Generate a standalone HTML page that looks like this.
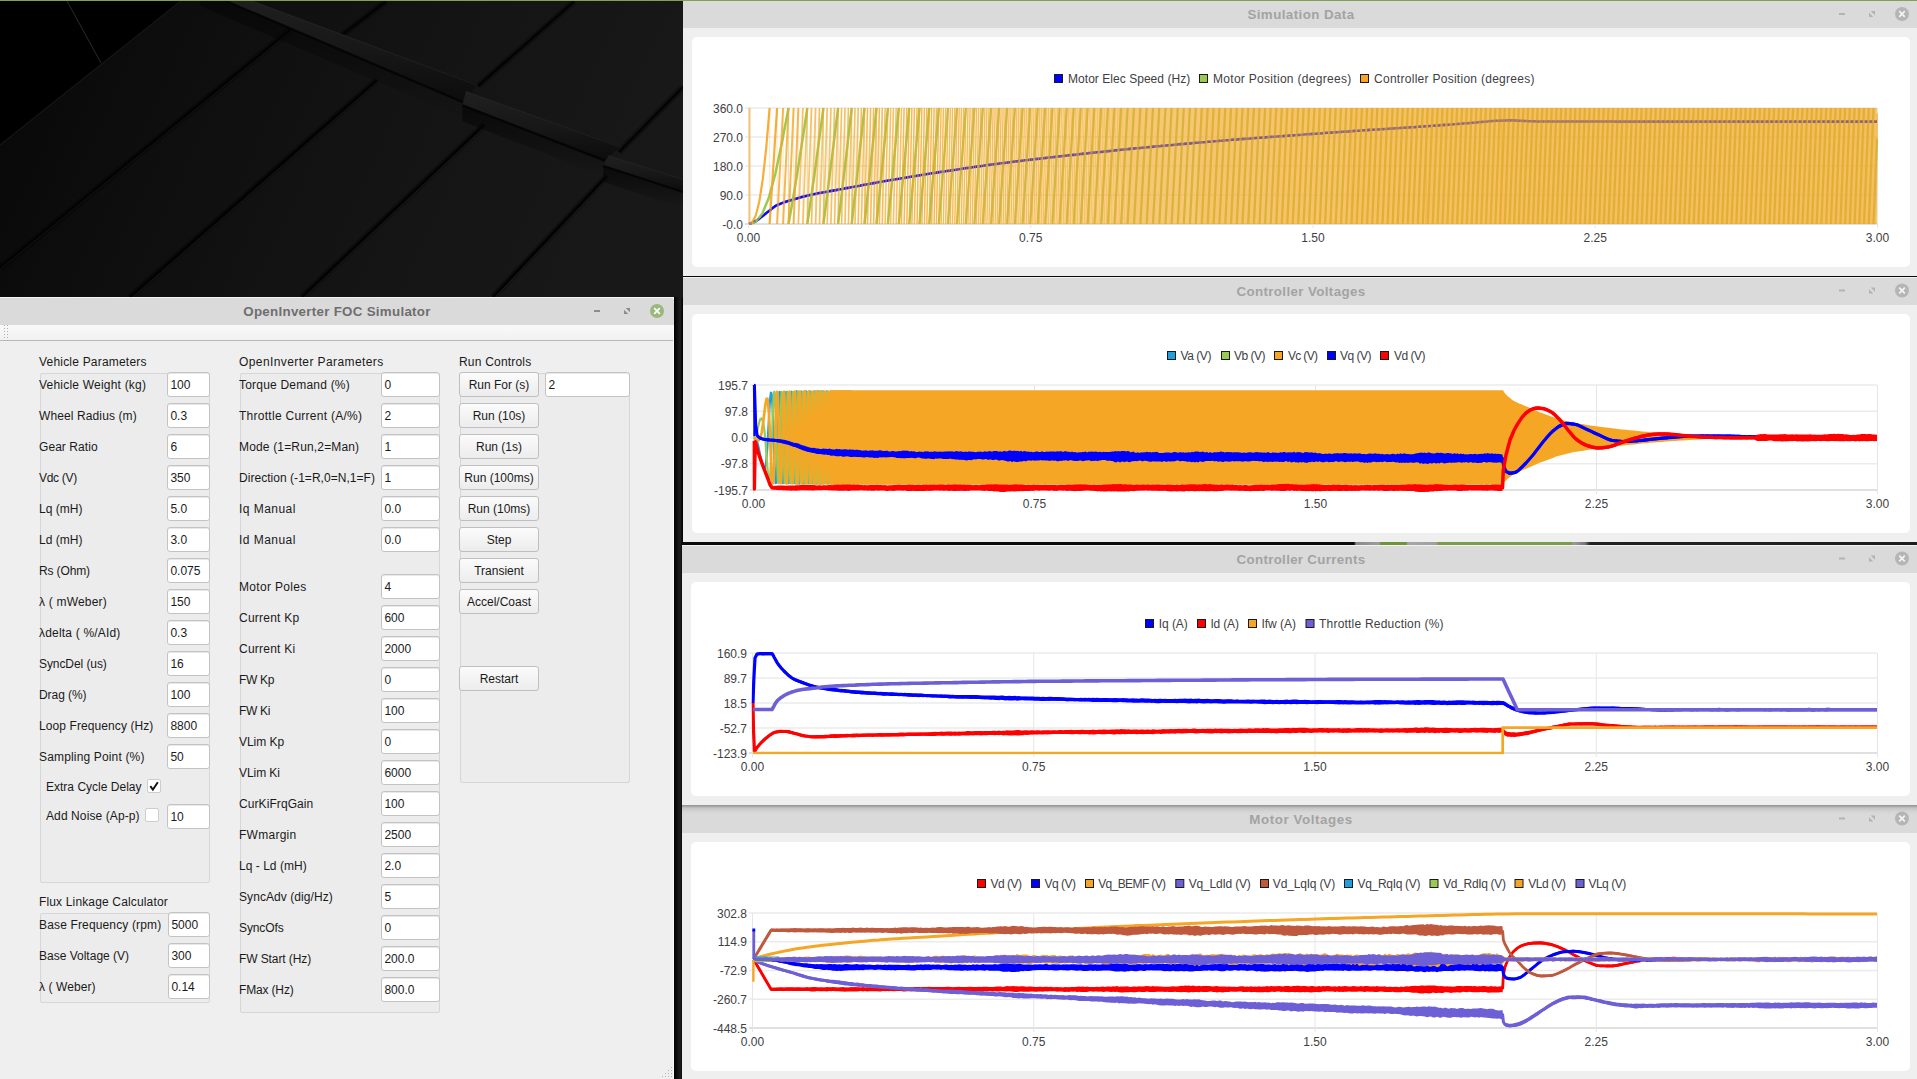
<!DOCTYPE html>
<html lang="en"><head><meta charset="utf-8"><title>OpenInverter FOC Simulator</title>
<style>
html,body{margin:0;padding:0}
body{width:1917px;height:1079px;position:relative;overflow:hidden;background:#161616;font-family:"Liberation Sans", sans-serif;font-size:12px;color:#1c1c1c}
.abs{position:absolute}
.tb{position:absolute;background:#dadada}
.tt{position:absolute;left:0;right:0;text-align:center;font-weight:bold;font-size:13.33px;white-space:pre}
.win{position:absolute;background:#efefef}
.card{position:absolute;background:#fff;border-radius:5px}
.lbl{position:absolute;white-space:pre;line-height:14px;height:14px;letter-spacing:.15px;color:#1a1a1a}
.inp{position:absolute;box-sizing:border-box;height:25px;background:#fff;border:1px solid #c3c3c3;border-radius:3px;line-height:24px;padding-left:2.4px;white-space:pre;color:#1a1a1a;box-shadow:inset 0 1px 0 #e8e8e8}
.btn{position:absolute;box-sizing:border-box;height:25px;width:80px;border:1px solid #bfbfbf;border-radius:3px;background:linear-gradient(#fbfbfb,#ececec);text-align:center;line-height:24px;white-space:pre;letter-spacing:0;color:#1a1a1a}
.grp{position:absolute;box-sizing:border-box;border:1px solid #d6d6d6;border-radius:2px;background:#ececec}
.cb{position:absolute;box-sizing:border-box;width:14px;height:14px;background:#fff;border:1px solid #cdcdcd;border-radius:2px}
svg{position:absolute;left:0;top:0;overflow:visible}
svg text{font-family:"Liberation Sans", sans-serif;font-size:12px;fill:#404044}
</style></head>
<body>
<svg width="683" height="298" viewBox="0 0 683 298" style="left:0;top:0"><defs><linearGradient id="wg" x1="0" y1="0" x2="1" y2="0.2"><stop offset="0" stop-color="#070707"/><stop offset=".3" stop-color="#0e0e0e"/><stop offset=".65" stop-color="#141414"/><stop offset="1" stop-color="#181818"/></linearGradient><linearGradient id="rg" x1="0" y1="0" x2="0" y2="1"><stop offset="0" stop-color="#202020"/><stop offset=".5" stop-color="#181818"/><stop offset="1" stop-color="#0c0c0c"/></linearGradient><linearGradient id="sh" x1="0" y1="0" x2="0" y2="1"><stop offset="0" stop-color="#050505" stop-opacity=".9"/><stop offset="1" stop-color="#050505" stop-opacity="0"/></linearGradient></defs><rect width="683" height="298" fill="url(#wg)"/><polygon points="0,0 182,0 0,145" fill="#000"/><line x1="0" y1="268" x2="300" y2="22" stroke="#000" stroke-width="6.8" opacity=".3"/><line x1="0" y1="268" x2="300" y2="22" stroke="#030303" stroke-width="2.8" opacity="1"/><line x1="-1" y1="270.2" x2="300" y2="24.2" stroke="#1c1c1c" stroke-width="1" opacity="0.7"/><line x1="130" y1="297" x2="377" y2="80" stroke="#000" stroke-width="6.8" opacity=".3"/><line x1="130" y1="297" x2="377" y2="80" stroke="#030303" stroke-width="2.8" opacity="1"/><line x1="131.2" y1="298.6" x2="378.2" y2="81.6" stroke="#1f1f1f" stroke-width="1" opacity="0.7"/><line x1="302" y1="297" x2="484" y2="125" stroke="#000" stroke-width="6.8" opacity=".3"/><line x1="302" y1="297" x2="484" y2="125" stroke="#030303" stroke-width="2.8" opacity="1"/><line x1="303.5" y1="298.2" x2="485.5" y2="126.2" stroke="#222" stroke-width="1" opacity="0.7"/><line x1="493" y1="297" x2="607" y2="176" stroke="#000" stroke-width="6.8" opacity=".3"/><line x1="493" y1="297" x2="607" y2="176" stroke="#030303" stroke-width="2.8" opacity="1"/><line x1="494.5" y1="298.2" x2="608.5" y2="177.2" stroke="#242424" stroke-width="1" opacity="0.7"/><line x1="341" y1="35.7" x2="386" y2="1.5" stroke="#000" stroke-width="6.2" opacity=".3"/><line x1="341" y1="35.7" x2="386" y2="1.5" stroke="#030303" stroke-width="2.2" opacity="1"/><line x1="478" y1="86" x2="574" y2="1.5" stroke="#000" stroke-width="6.2" opacity=".3"/><line x1="478" y1="86" x2="574" y2="1.5" stroke="#030303" stroke-width="2.2" opacity="1"/><line x1="619" y1="152" x2="683" y2="87" stroke="#000" stroke-width="6.2" opacity=".3"/><line x1="619" y1="152" x2="683" y2="87" stroke="#030303" stroke-width="2.2" opacity="1"/><polygon points="200,-10 466,103.5 466,119.5 200,6" fill="url(#sh)" opacity=".8"/><polygon points="224,-10 476.6,84 466,103.5 200,-10" fill="url(#rg)"/><line x1="200" y1="-10" x2="466" y2="103.5" stroke="#050505" stroke-width="2.2"/><line x1="224" y1="-9" x2="476.6" y2="85" stroke="#262626" stroke-width="1.2" opacity=".6"/><polygon points="462.3,105.3 605,160.6 605,176.6 462.3,121.3" fill="url(#sh)" opacity=".8"/><polygon points="466,91 621,146.3 605,160.6 462.3,105.3" fill="url(#rg)"/><line x1="462.3" y1="105.3" x2="605" y2="160.6" stroke="#050505" stroke-width="2.2"/><line x1="466" y1="92" x2="621" y2="147.3" stroke="#262626" stroke-width="1.2" opacity=".6"/><polygon points="603.3,166 683,192 683,208 603.3,182" fill="url(#sh)" opacity=".8"/><polygon points="608.6,155.2 683,178.4 683,192 603.3,166" fill="url(#rg)"/><line x1="603.3" y1="166" x2="683" y2="192" stroke="#050505" stroke-width="2.2"/><line x1="608.6" y1="156.2" x2="683" y2="179.4" stroke="#262626" stroke-width="1.2" opacity=".6"/><line x1="67" y1="1" x2="101" y2="63" stroke="#2a2a2a" stroke-width="1"/><line x1="182" y1="0" x2="0" y2="145" stroke="#1a1a1a" stroke-width="1.2" opacity=".8"/></svg>
<div class="abs" style="left:674px;top:297px;width:9px;height:782px;background:linear-gradient(90deg,#000,#1e1e1e 70%,#000)"></div>
<div class="abs" style="left:0;top:0;width:1917px;height:1px;background:#7fa350;z-index:5"></div>
<div class="win" style="left:0;top:297px;width:674px;height:782px;border-right:1px solid #fbfbfb;box-sizing:border-box">
<div class="tb" style="left:0;top:0;width:674px;height:28px;border-top:1px solid #f4f4f4;box-sizing:border-box;border-top-right-radius:3px"><div class="tt" id="t0" style="top:6.2px;line-height:16px;color:#6e6e6e;left:0;width:674px;letter-spacing:.29px">OpenInverter FOC Simulator</div></div>
<svg width="674" height="28" style="left:0;top:0"><rect x="594" y="13" width="6" height="2" fill="#8c8c8c"/><path d="M625.7 11H630V15.3zM624 12.7V17H628.3z" fill="#8c8c8c"/><circle cx="657" cy="14" r="7" fill="#9ab87c"/><path d="M654.2 11.2l5.6 5.6M659.8 11.2l-5.6 5.6" stroke="#fff" stroke-width="1.7" fill="none"/></svg>
<div class="abs" style="left:0;top:28px;width:673px;height:15px;background:linear-gradient(#f9f9f9,#f1f1f1);border-bottom:1px solid #b9b9b9"></div>
<svg width="12" height="18" style="left:0;top:28px"><rect x="4" y="0" width="1" height="1" fill="#b0b0b0"/><rect x="7" y="0" width="1" height="1" fill="#b0b0b0"/><rect x="4" y="3" width="1" height="1" fill="#b0b0b0"/><rect x="7" y="3" width="1" height="1" fill="#b0b0b0"/><rect x="4" y="6" width="1" height="1" fill="#b0b0b0"/><rect x="7" y="6" width="1" height="1" fill="#b0b0b0"/><rect x="4" y="9" width="1" height="1" fill="#b0b0b0"/><rect x="7" y="9" width="1" height="1" fill="#b0b0b0"/><rect x="4" y="12" width="1" height="1" fill="#b0b0b0"/><rect x="7" y="12" width="1" height="1" fill="#b0b0b0"/><rect x="4" y="15" width="1" height="1" fill="#b0b0b0"/><rect x="7" y="15" width="1" height="1" fill="#b0b0b0"/></svg>
<div class="grp" style="left:40px;top:76px;width:170px;height:510px"></div><div class="grp" style="left:240px;top:76px;width:200px;height:640px"></div><div class="grp" style="left:460px;top:76px;width:170px;height:410px"></div><div class="grp" style="left:40px;top:616px;width:170px;height:90px"></div>
<div class="lbl" style="left:39px;top:57.5px;letter-spacing:0.2px;">Vehicle Parameters</div><div class="lbl" style="left:239px;top:57.5px;letter-spacing:0.4px;">OpenInverter Parameters</div><div class="lbl" style="left:459px;top:57.5px;letter-spacing:0.2px;">Run Controls</div><div class="lbl" style="left:39px;top:597.5px;letter-spacing:0.15px;">Flux Linkage Calculator</div>
<div class="lbl" style="left:39px;top:80.5px;letter-spacing:0.21px;">Vehicle Weight (kg)</div><div class="inp" style="left:167px;top:75px;width:43px">100</div><div class="lbl" style="left:39px;top:111.5px;letter-spacing:0.11px;">Wheel Radius (m)</div><div class="inp" style="left:167px;top:106px;width:43px">0.3</div><div class="lbl" style="left:39px;top:142.5px;letter-spacing:0.06px;">Gear Ratio</div><div class="inp" style="left:167px;top:137px;width:43px">6</div><div class="lbl" style="left:39px;top:173.5px;letter-spacing:-0.3px;">Vdc (V)</div><div class="inp" style="left:167px;top:168px;width:43px">350</div><div class="lbl" style="left:39px;top:204.5px;letter-spacing:0.04px;">Lq (mH)</div><div class="inp" style="left:167px;top:199px;width:43px">5.0</div><div class="lbl" style="left:39px;top:235.5px;letter-spacing:0.04px;">Ld (mH)</div><div class="inp" style="left:167px;top:230px;width:43px">3.0</div><div class="lbl" style="left:39px;top:266.5px;letter-spacing:-0.13px;">Rs (Ohm)</div><div class="inp" style="left:167px;top:261px;width:43px">0.075</div><div class="lbl" style="left:39px;top:297.5px;letter-spacing:0.2px;">λ ( mWeber)</div><div class="inp" style="left:167px;top:292px;width:43px">150</div><div class="lbl" style="left:39px;top:328.5px;letter-spacing:0.19px;">λdelta ( %/AId)</div><div class="inp" style="left:167px;top:323px;width:43px">0.3</div><div class="lbl" style="left:39px;top:359.5px;letter-spacing:-0.08px;">SyncDel (us)</div><div class="inp" style="left:167px;top:354px;width:43px">16</div><div class="lbl" style="left:39px;top:390.5px;letter-spacing:-0.06px;">Drag (%)</div><div class="inp" style="left:167px;top:385px;width:43px">100</div><div class="lbl" style="left:39px;top:421.5px;letter-spacing:0.09px;">Loop Frequency (Hz)</div><div class="inp" style="left:167px;top:416px;width:43px">8800</div><div class="lbl" style="left:39px;top:452.5px;letter-spacing:0.16px;">Sampling Point (%)</div><div class="inp" style="left:167px;top:447px;width:43px">50</div>
<div class="lbl" style="left:46px;top:482.5px;letter-spacing:0.01px;">Extra Cycle Delay</div><div class="cb" style="left:147px;top:482px"><svg width="12" height="12" viewBox="0 0 12 12" style="left:0;top:0"><path d="M2.3 6.1L4.9 9.6 9.8 2.3" stroke="#111" stroke-width="1.9" fill="none"/></svg></div><div class="lbl" style="left:46px;top:511.5px;letter-spacing:0.1px;">Add Noise (Ap-p)</div><div class="cb" style="left:145px;top:511px"></div><div class="inp" style="left:167px;top:507px;width:43px">10</div>
<div class="lbl" style="left:39px;top:620.5px;letter-spacing:0.15px;">Base Frequency (rpm)</div><div class="inp" style="left:168px;top:615px;width:42px">5000</div><div class="lbl" style="left:39px;top:651.5px;letter-spacing:0.0px;">Base Voltage (V)</div><div class="inp" style="left:168px;top:646px;width:42px">300</div><div class="lbl" style="left:39px;top:682.5px;letter-spacing:0.08px;">λ ( Weber)</div><div class="inp" style="left:168px;top:677px;width:42px">0.14</div>
<div class="lbl" style="left:239px;top:80.5px;letter-spacing:0.21px;">Torque Demand (%)</div><div class="inp" style="left:381px;top:75px;width:59px">0</div><div class="lbl" style="left:239px;top:111.5px;letter-spacing:0.27px;">Throttle Current (A/%)</div><div class="inp" style="left:381px;top:106px;width:59px">2</div><div class="lbl" style="left:239px;top:142.5px;letter-spacing:0.16px;">Mode (1=Run,2=Man)</div><div class="inp" style="left:381px;top:137px;width:59px">1</div><div class="lbl" style="left:239px;top:173.5px;letter-spacing:0.04px;">Direction (-1=R,0=N,1=F)</div><div class="inp" style="left:381px;top:168px;width:59px">1</div><div class="lbl" style="left:239px;top:204.5px;letter-spacing:0.46px;">Iq Manual</div><div class="inp" style="left:381px;top:199px;width:59px">0.0</div><div class="lbl" style="left:239px;top:235.5px;letter-spacing:0.46px;">Id Manual</div><div class="inp" style="left:381px;top:230px;width:59px">0.0</div><div class="lbl" style="left:239px;top:282.5px;letter-spacing:0.32px;">Motor Poles</div><div class="inp" style="left:381px;top:277px;width:59px">4</div><div class="lbl" style="left:239px;top:313.5px;letter-spacing:0.24px;">Current Kp</div><div class="inp" style="left:381px;top:308px;width:59px">600</div><div class="lbl" style="left:239px;top:344.5px;letter-spacing:0.24px;">Current Ki</div><div class="inp" style="left:381px;top:339px;width:59px">2000</div><div class="lbl" style="left:239px;top:375.5px;letter-spacing:-0.3px;">FW Kp</div><div class="inp" style="left:381px;top:370px;width:59px">0</div><div class="lbl" style="left:239px;top:406.5px;letter-spacing:-0.3px;">FW Ki</div><div class="inp" style="left:381px;top:401px;width:59px">100</div><div class="lbl" style="left:239px;top:437.5px;letter-spacing:-0.03px;">VLim Kp</div><div class="inp" style="left:381px;top:432px;width:59px">0</div><div class="lbl" style="left:239px;top:468.5px;letter-spacing:-0.06px;">VLim Ki</div><div class="inp" style="left:381px;top:463px;width:59px">6000</div><div class="lbl" style="left:239px;top:499.5px;letter-spacing:0.08px;">CurKiFrqGain</div><div class="inp" style="left:381px;top:494px;width:59px">100</div><div class="lbl" style="left:239px;top:530.5px;letter-spacing:0.27px;">FWmargin</div><div class="inp" style="left:381px;top:525px;width:59px">2500</div><div class="lbl" style="left:239px;top:561.5px;letter-spacing:0.03px;">Lq - Ld (mH)</div><div class="inp" style="left:381px;top:556px;width:59px">2.0</div><div class="lbl" style="left:239px;top:592.5px;letter-spacing:0.07px;">SyncAdv (dig/Hz)</div><div class="inp" style="left:381px;top:587px;width:59px">5</div><div class="lbl" style="left:239px;top:623.5px;letter-spacing:-0.11px;">SyncOfs</div><div class="inp" style="left:381px;top:618px;width:59px">0</div><div class="lbl" style="left:239px;top:654.5px;letter-spacing:-0.1px;">FW Start (Hz)</div><div class="inp" style="left:381px;top:649px;width:59px">200.0</div><div class="lbl" style="left:239px;top:685.5px;letter-spacing:-0.16px;">FMax (Hz)</div><div class="inp" style="left:381px;top:680px;width:59px">800.0</div>
<div class="btn" style="left:459px;top:75px">Run For (s)</div><div class="btn" style="left:459px;top:106px">Run (10s)</div><div class="btn" style="left:459px;top:137px">Run (1s)</div><div class="btn" style="left:459px;top:168px">Run (100ms)</div><div class="btn" style="left:459px;top:199px">Run (10ms)</div><div class="btn" style="left:459px;top:230px">Step</div><div class="btn" style="left:459px;top:261px">Transient</div><div class="btn" style="left:459px;top:292px">Accel/Coast</div><div class="btn" style="left:459px;top:369px">Restart</div><div class="inp" style="left:545px;top:75px;width:85px">2</div><svg width="14" height="14" style="left:659px;top:767px"><rect x="12" y="12" width="1" height="1" fill="#b4b4b4"/><rect x="12" y="9" width="1" height="1" fill="#b4b4b4"/><rect x="12" y="6" width="1" height="1" fill="#b4b4b4"/><rect x="12" y="3" width="1" height="1" fill="#b4b4b4"/><rect x="9" y="12" width="1" height="1" fill="#b4b4b4"/><rect x="9" y="9" width="1" height="1" fill="#b4b4b4"/><rect x="9" y="6" width="1" height="1" fill="#b4b4b4"/><rect x="6" y="12" width="1" height="1" fill="#b4b4b4"/><rect x="6" y="9" width="1" height="1" fill="#b4b4b4"/><rect x="3" y="12" width="1" height="1" fill="#b4b4b4"/></svg>
</div>
<div class="win" style="left:683px;top:1px;width:1234px;height:275px"><div class="tb" style="left:0;top:0;width:1234px;height:27px;box-sizing:border-box;"><div class="tt" style="top:6.3px;line-height:16px;color:#a3a3a3;left:318px;width:600px;right:auto;letter-spacing:0.43px">Simulation Data</div></div><svg width="1234" height="27" style="left:0;top:0"><rect x="1156" y="12" width="6" height="2" fill="#b3b3b3"/><path d="M1187.7 10H1192V14.3zM1186 11.7V16H1190.3z" fill="#b3b3b3"/><circle cx="1219" cy="13" r="7" fill="#b5b5b5"/><path d="M1216.2 10.2l5.6 5.6M1221.8 10.2l-5.6 5.6" stroke="#f4f4f4" stroke-width="1.7" fill="none"/></svg><div class="card" style="left:9px;top:36px;width:1218px;height:230px"></div></div>
<div class="abs" style="left:683px;top:276px;width:1234px;height:1px;background:#0a0a0a"></div><div class="win" style="left:683px;top:277px;width:1234px;height:265px"><div class="tb" style="left:0;top:0;width:1234px;height:28px;box-sizing:border-box;border-top:1px solid #f2f2f2;"><div class="tt" style="top:6px;line-height:16px;color:#a3a3a3;left:318px;width:600px;right:auto;letter-spacing:0.38px">Controller Voltages</div></div><svg width="1234" height="28" style="left:0;top:0"><rect x="1156" y="12.5" width="6" height="2" fill="#b3b3b3"/><path d="M1187.7 10.5H1192V14.8zM1186 12.2V16.5H1190.3z" fill="#b3b3b3"/><circle cx="1219" cy="13.5" r="7" fill="#b5b5b5"/><path d="M1216.2 10.7l5.6 5.6M1221.8 10.7l-5.6 5.6" stroke="#f4f4f4" stroke-width="1.7" fill="none"/></svg><div class="card" style="left:9px;top:37px;width:1218px;height:219px"></div></div>
<div class="abs" style="left:682px;top:542px;width:1235px;height:3px;background:linear-gradient(90deg,#0b0b0b 672px,#8a8a8a 674px,#9c9c9c 697px,#6f9438 699px,#6f9438 724px,#a6a6a6 726px,#a0a0a0 754px,#7b9d4b 756px,#7b9d4b 889px,#9a9a9a 892px,#777 903px,#222 908px,#1c1c1c 100%)"></div><div class="win" style="left:682px;top:545px;width:1235px;height:260px"><div class="tb" style="left:0;top:0;width:1235px;height:28px;box-sizing:border-box;border-top:1px solid #f2f2f2;"><div class="tt" style="top:6px;line-height:16px;color:#a3a3a3;left:319px;width:600px;right:auto;letter-spacing:0.31px">Controller Currents</div></div><svg width="1235" height="28" style="left:0;top:0"><rect x="1157" y="12.5" width="6" height="2" fill="#b3b3b3"/><path d="M1188.7 10.5H1193V14.8zM1187 12.2V16.5H1191.3z" fill="#b3b3b3"/><circle cx="1220" cy="13.5" r="7" fill="#b5b5b5"/><path d="M1217.2 10.7l5.6 5.6M1222.8 10.7l-5.6 5.6" stroke="#f4f4f4" stroke-width="1.7" fill="none"/></svg><div class="card" style="left:9px;top:37px;width:1219px;height:214px"></div></div>
<div class="win" style="left:682px;top:805px;width:1235px;height:274px"><div class="tb" style="left:0;top:0;width:1235px;height:28px;box-sizing:border-box;background:linear-gradient(#8f8f8f,#c4c4c4 3px,#d6d6d6 7px,#dadada 10px);"><div class="tt" style="top:7px;line-height:16px;color:#a3a3a3;left:319px;width:600px;right:auto;letter-spacing:0.57px">Motor Voltages</div></div><svg width="1235" height="28" style="left:0;top:0"><rect x="1157" y="12.5" width="6" height="2" fill="#b3b3b3"/><path d="M1188.7 10.5H1193V14.8zM1187 12.2V16.5H1191.3z" fill="#b3b3b3"/><circle cx="1220" cy="13.5" r="7" fill="#b5b5b5"/><path d="M1217.2 10.7l5.6 5.6M1222.8 10.7l-5.6 5.6" stroke="#f4f4f4" stroke-width="1.7" fill="none"/></svg><div class="card" style="left:9px;top:37px;width:1219px;height:229px"></div></div>
<svg width="1917" height="1079" viewBox="0 0 1917 1079" style="left:0;top:0">
<line x1="745" y1="108" x2="1877" y2="108" stroke="#ebebeb" stroke-width="1.6"/><text x="743" y="112.5" text-anchor="end">360.0</text><line x1="745" y1="137" x2="1877" y2="137" stroke="#ebebeb" stroke-width="1.6"/><text x="743" y="141.5" text-anchor="end">270.0</text><line x1="745" y1="166" x2="1877" y2="166" stroke="#ebebeb" stroke-width="1.6"/><text x="743" y="170.5" text-anchor="end">180.0</text><line x1="745" y1="195" x2="1877" y2="195" stroke="#ebebeb" stroke-width="1.6"/><text x="743" y="199.5" text-anchor="end">90.0</text><line x1="745" y1="224" x2="1877" y2="224" stroke="#e0e0e0" stroke-width="2"/><text x="743" y="228.5" text-anchor="end">-0.0</text><line x1="748.5" y1="108" x2="748.5" y2="228" stroke="#e6e6e6" stroke-width="1"/><text x="748.5" y="242" text-anchor="middle">0.00</text><line x1="1030.75" y1="224" x2="1030.75" y2="228" stroke="#e6e6e6" stroke-width="1"/><text x="1030.75" y="242" text-anchor="middle">0.75</text><line x1="1313" y1="224" x2="1313" y2="228" stroke="#e6e6e6" stroke-width="1"/><text x="1313" y="242" text-anchor="middle">1.50</text><line x1="1595.25" y1="224" x2="1595.25" y2="228" stroke="#e6e6e6" stroke-width="1"/><text x="1595.25" y="242" text-anchor="middle">2.25</text><line x1="1877.5" y1="108" x2="1877.5" y2="228" stroke="#e6e6e6" stroke-width="1"/><text x="1877.5" y="242" text-anchor="middle">3.00</text><rect x="1054.5" y="74.5" width="8" height="8" fill="#0000ff" stroke="#1a1a1a" stroke-width="1"/><text x="1068" y="83" textLength="122.2" lengthAdjust="spacing">Motor Elec Speed (Hz)</text><rect x="1199.5" y="74.5" width="8" height="8" fill="#99ca53" stroke="#1a1a1a" stroke-width="1"/><text x="1213" y="83" textLength="138.2" lengthAdjust="spacing">Motor Position (degrees)</text><rect x="1360.5" y="74.5" width="8" height="8" fill="#f6a625" stroke="#1a1a1a" stroke-width="1"/><text x="1374" y="83" textLength="160.5" lengthAdjust="spacing">Controller Position (degrees)</text><clipPath id="c1"><rect x="748" y="106.8" width="1130.0" height="118.4"/></clipPath><g clip-path="url(#c1)"><path d="M749 224l3-1.1l3-1.4l3-1.9l3-2.3l1-.8l2-1.5l3-2.4l2-1.6l1-.8l3-2.4l3-2.1l1-.5l2-.9l3-1.2l3-1l3-1l2-.6l1-.3l3-.9l3-.9l3-.9l3-.8l3-.8l3-.7l1-.2l2-.4l3-.7l3-.6l3-.6l3-.5l3-.5l3-.6l3-.5l3-.5l3-.6l3-.5l3-.6l3-.5l3-.6l3-.5l3-.6l3-.5l3-.6l3-.6l3-.5l3-.6l3-.5l3-.6l3-.5l3-.5l3-.6l3-.5l3-.5l3-.5l3-.5l1-.2l2-.3l3-.5l3-.5l3-.5l3-.5l3-.5l3-.5l3-.4l3-.5l3-.5l3-.5l3-.4l3-.5l3-.5l3-.4l3-.5l3-.4l3-.5l3-.4l3-.5l3-.4l3-.5l3-.4l3-.4l3-.5l3-.4l3-.4l3-.4l3-.5l3-.4l3-.4l3-.4l3-.4l3-.4l2.6-.3l.4-.1l3-.3l3-.4l3-.4l3-.4l3-.3l3-.4l3-.4l3-.3l3-.4l3-.3l3-.4l3-.3l3-.4l3-.3l3-.4l3-.3l3-.3l3-.4l3-.3l3-.3l3-.4l3-.3l3-.3l3-.3l3-.4l3-.3l3-.3l3-.3l3-.4l3-.3l3-.3l3-.3l3-.3l3-.3l3-.3l3-.3l3-.4l3-.3l3-.3l3-.3l3-.3l3-.3l3-.3l3-.3l3-.2l3-.3l3-.3l3-.3l3-.3l3-.3l3-.3l3-.2l3-.3l2-.2l1-.1l3-.3l3-.2l3-.3l3-.3l3-.3l3-.2l3-.3l3-.2l3-.3l3-.3l3-.2l3-.3l3-.2l3-.3l3-.2l3-.3l3-.2l3-.3l3-.2l3-.3l3-.2l1-.1l2-.2l3-.2l3-.2l3-.3l3-.2l3-.2l3-.2l3-.3l3-.2l3-.2l3-.2l3-.2l3-.3l3-.2l3-.2l3-.2l3-.2l3-.2l3-.3l3-.2l3-.2l3-.2l3-.2l3-.2l3-.3l3-.2l3-.2l3-.2l3-.2l3-.2l3-.2l3-.3l3-.2l3-.2l3-.2l3-.2l3-.2l3-.2l3-.2l3-.2l3-.3l3-.2l3-.2l2-.1l1-.1l3-.2l3-.2l3-.2l3-.2l3-.2l3-.1l3-.2l3-.2l3-.2l3-.2l3-.2l3-.2l3-.2l3-.2l3-.2l3-.2l3-.2l3-.1l3-.3l3-.2l3-.2l2-.1l1-.1l3-.2l3-.2l3-.2l3-.2l3-.3l3-.2l3-.2l3-.2l3-.3l3-.2l3-.2l3-.3l3-.2l3-.2l1-.1l2-.2l3-.2l3-.3l3-.3l3-.3l3-.2l3-.3l3-.2l3-.2l3-.1l2-.1l1 0l3-.1l3-.1l3 0l1 0l2 0l3 .2l3 .1l3 .2l2 .1l1 0l3 .2l3 .1l3 .1l3 .1l2 0l1 0l3 0l3 0l3 0l3 0l3 0l3 0l3 0l3 0l3 0l3 0l3 0l3 0l3 0l3 0l3 0l3 0l3 0l3 0l3 0l3 0l3 0l3 0l3 0l3 0l3 .1l3 0l3 0l3 0l3 0l3 0l3 0l3 0l3 0l3 0l3 0l3 0l3 0l3 0l3 0l3 0l3 0l3 0l3 0l3 0l3 0l3 0l3 0l3 0l3 0l3 0l3 0l3 0l3 0l3 0l3 0l3 0l3 0l3 0l3 0l3 0l3 0l3 0l3 0l3 0l3 0l3 0l3 0l3 0l3 0l3 0l3 0l3 0l3 0l3 0l3 0l3 0l3 0l3 0l3 0l3 0l3 0l3 0l3 0l3 0l3 0l3 0l3 0l3 0l3 0l3 0l3 0l3 0l3 0l3 0l3 0l3 0l3 0l3 0l3 0l3 0l3 0l3 0l3 0l3 0l3 0l3 0l3 0l3 0l3 0l3 0l3 0l3 0" fill="none" stroke="#0000ff" stroke-width="2.6"/><path d="M749 224l6.6-2l6.6-8.1l6.6-16.1l6.6-24.3l6.5-30.8l6.6-34.7M788.5 224l3.2-17.6l3.1-18.4l3.1-19l3.1-19.7l3.2-20.4l3.1-20.9M807.3 224l2.7-18.4l2.7-18.8l2.7-19.2l2.6-19.5l2.7-19.9l2.7-20.2M823.4 224l2.4-18.7l2.5-19l2.4-19.2l2.5-19.4l2.4-19.7l2.5-20M838.1 224l2.3-18.8l2.2-19l2.3-19.2l2.3-19.4l2.2-19.7l2.3-19.9M851.7 224l2.1-18.8l2.2-19.1l2.1-19.2l2.1-19.4l2.1-19.7l2.2-19.8M864.5 224l2-18.9l2-19.1l2-19.2l2-19.4l2-19.6l2-19.8M876.5 224l1.9-18.9l1.9-19.1l1.9-19.3l1.9-19.4l1.9-19.6l1.9-19.7M887.9 224l1.8-19l1.9-19.1l1.8-19.3l1.8-19.4l1.8-19.5l1.8-19.7M898.8 224l1.8-19l1.7-19.2l1.8-19.3l1.7-19.4l1.8-19.5l1.7-19.6M909.3 224l1.7-19.1l1.7-19.1l1.7-19.3l1.7-19.4l1.7-19.5l1.7-19.6M919.5 224l1.6-19.1l1.6-19.2l1.7-19.2l1.6-19.4l1.6-19.5l1.7-19.6M929.3 224l1.5-19.1l1.6-19.2l1.6-19.3l1.6-19.4l1.6-19.4l1.6-19.6" fill="none" stroke="#99ca53" stroke-width="2.5" stroke-opacity="1"/><path d="M938.8 224l1.5-19.1l1.6-19.2l1.5-19.3l1.5-19.4l1.6-19.4l1.5-19.6M948 224l1.5-19.1l1.5-19.2l1.5-19.3l1.5-19.4l1.5-19.5l1.5-19.5M957 224l8.8-116M965.8 224l8.6-116M974.4 224l8.4-116M982.8 224l8.3-116M991.1 224l8-116M999.1 224l8-116M1007.1 224l7.8-116M1014.9 224l7.7-116M1022.6 224l7.6-116M1030.2 224l7.5-116M1037.7 224l7.4-116M1045.1 224l7.3-116M1052.4 224l7.2-116M1059.6 224l7.1-116M1066.7 224l7-116M1073.7 224l7-116M1080.7 224l6.9-116M1087.6 224l6.8-116M1094.4 224l6.8-116M1101.2 224l6.7-116M1107.9 224l6.6-116M1114.5 224l6.6-116M1121.1 224l6.5-116M1127.6 224l6.4-116M1134 224l6.4-116M1140.4 224l6.3-116M1146.7 224l6.3-116M1153 224l6.3-116M1159.3 224l6.2-116M1165.5 224l6.1-116M1171.6 224l6.2-116M1177.8 224l6-116M1183.8 224l6.1-116M1189.9 224l5.9-116M1195.8 224l6-116M1201.8 224l5.9-116M1207.7 224l5.9-116M1213.6 224l5.8-116M1219.4 224l5.9-116M1225.3 224l5.7-116M1231 224l5.8-116M1236.8 224l5.7-116M1242.5 224l5.7-116M1248.2 224l5.7-116M1253.9 224l5.6-116M1259.5 224l5.6-116M1265.1 224l5.6-116M1270.7 224l5.5-116M1276.2 224l5.6-116M1281.8 224l5.5-116M1287.3 224l5.4-116M1292.7 224l5.5-116M1298.2 224l5.4-116M1303.6 224l5.4-116M1309 224l5.4-116M1314.4 224l5.4-116M1319.8 224l5.3-116M1325.1 224l5.3-116M1330.4 224l5.3-116M1335.7 224l5.3-116M1341 224l5.3-116M1346.3 224l5.2-116M1351.5 224l5.2-116M1356.7 224l5.2-116M1361.9 224l5.2-116M1367.1 224l5.1-116M1372.2 224l5.1-116M1377.3 224l5.2-116M1382.5 224l5.1-116M1387.6 224l5-116M1392.6 224l5.1-116M1397.7 224l5.1-116M1402.8 224l5-116M1407.8 224l5-116M1412.8 224l5-116M1417.8 224l5-116M1422.8 224l4.9-116M1427.7 224l5-116M1432.7 224l4.9-116M1437.6 224l4.9-116M1442.5 224l4.9-116M1447.4 224l4.9-116M1452.3 224l4.8-116M1457.1 224l4.9-116M1462 224l4.8-116M1466.8 224l4.8-116M1471.6 224l4.8-116M1476.4 224l4.7-116M1481.1 224l4.8-116M1485.9 224l4.7-116M1490.6 224l4.7-116M1495.3 224l4.7-116M1500 224l4.7-116M1504.7 224l4.7-116M1509.4 224l4.7-116M1514.1 224l4.6-116M1518.7 224l4.7-116M1523.4 224l4.7-116M1528.1 224l4.8-116M1532.9 224l4.7-116M1537.6 224l4.7-116M1542.3 224l4.7-116M1547 224l4.8-116M1551.8 224l4.7-116M1556.5 224l4.7-116M1561.2 224l4.7-116M1565.9 224l4.8-116M1570.7 224l4.7-116M1575.4 224l4.7-116M1580.1 224l4.8-116M1584.9 224l4.7-116M1589.6 224l4.7-116M1594.3 224l4.8-116M1599.1 224l4.7-116M1603.8 224l4.7-116M1608.5 224l4.7-116M1613.2 224l4.8-116M1618 224l4.7-116M1622.7 224l4.7-116M1627.4 224l4.8-116M1632.2 224l4.7-116M1636.9 224l4.7-116M1641.6 224l4.8-116M1646.4 224l4.7-116M1651.1 224l4.7-116M1655.8 224l4.8-116M1660.6 224l4.7-116M1665.3 224l4.7-116M1670 224l4.7-116M1674.7 224l4.8-116M1679.5 224l4.7-116M1684.2 224l4.7-116M1688.9 224l4.8-116M1693.7 224l4.7-116M1698.4 224l4.7-116M1703.1 224l4.8-116M1707.9 224l4.7-116M1712.6 224l4.7-116M1717.3 224l4.8-116M1722.1 224l4.7-116M1726.8 224l4.7-116M1731.5 224l4.8-116M1736.3 224l4.7-116M1741 224l4.7-116M1745.7 224l4.8-116M1750.5 224l4.7-116M1755.2 224l4.7-116M1759.9 224l4.8-116M1764.7 224l4.7-116M1769.4 224l4.7-116M1774.1 224l4.8-116M1778.9 224l4.7-116M1783.6 224l4.7-116M1788.3 224l4.8-116M1793.1 224l4.7-116M1797.8 224l4.7-116M1802.5 224l4.8-116M1807.3 224l4.7-116M1812 224l4.7-116M1816.7 224l4.7-116M1821.4 224l4.8-116M1826.2 224l4.7-116M1830.9 224l4.7-116M1835.6 224l4.8-116M1840.4 224l4.7-116M1845.1 224l4.7-116M1849.8 224l4.8-116M1854.6 224l4.7-116M1859.3 224l4.7-116M1864 224l4.8-116M1868.8 224l4.7-116M1873.5 224l3.5-85.6" fill="none" stroke="#99ca53" stroke-width="2.3" stroke-opacity="0.92"/><path d="M788.5 108V224M807.3 108V224M823.4 108V224M838.1 108V224M851.7 108V224M864.5 108V224M876.5 108V224" fill="none" stroke="#99ca53" stroke-width="1.3" stroke-opacity="0.25"/><path d="M749.6 108V224" stroke="#f6a625" stroke-width="1.8" stroke-opacity=".65" fill="none"/><path d="M749 224l3.4-1.9l3.5-6.9l3.4-13.7l3.5-22.3l3.4-31.1l3.4-40.1M769.6 224l7.5-116" fill="none" stroke="#f6a625" stroke-width="2.2" stroke-opacity="0.92"/><path d="M777.1 224l6-116M783.1 224l5.4-116M788.5 224l5.1-116M793.6 224l4.8-116" fill="none" stroke="#f6a625" stroke-width="2.0" stroke-opacity="0.8"/><path d="M798.4 224l4.5-116M802.9 224l4.4-116M807.3 224l4.2-116M811.5 224l4.1-116M815.6 224l3.9-116M819.5 224l3.9-116M823.4 224l3.8-116" fill="none" stroke="#f6a625" stroke-width="1.8" stroke-opacity="0.64"/><path d="M827.2 224l3.7-116M830.9 224l3.6-116M834.5 224l3.6-116M838.1 224l3.5-116M841.6 224l3.4-116M845 224l3.4-116M848.4 224l3.3-116M851.7 224l3.3-116M855 224l3.2-116M858.2 224l3.2-116M861.4 224l3.1-116" fill="none" stroke="#f6a625" stroke-width="1.6" stroke-opacity="0.665"/><path d="M864.5 224l3-116M867.5 224l3.1-116M870.6 224l3-116M873.6 224l2.9-116M876.5 224l2.9-116M879.4 224l2.9-116M882.3 224l2.8-116M885.1 224l2.8-116M887.9 224l2.8-116M890.7 224l2.7-116M893.4 224l2.8-116M896.2 224l2.6-116M898.8 224l2.7-116" fill="none" stroke="#f6a625" stroke-width="1.6" stroke-opacity="0.702"/><path d="M901.5 224l2.6-116M904.1 224l2.7-116M906.8 224l2.5-116M909.3 224l2.6-116M911.9 224l2.5-116M914.4 224l2.6-116M917 224l2.5-116M919.5 224l2.4-116M921.9 224l2.5-116M924.4 224l2.4-116M926.8 224l2.5-116M929.3 224l2.4-116M931.7 224l2.4-116M934.1 224l2.3-116M936.4 224l2.4-116" fill="none" stroke="#f6a625" stroke-width="1.5" stroke-opacity="0.791"/><path d="M938.8 224l2.3-116M941.1 224l2.3-116M943.4 224l2.3-116M945.7 224l2.3-116M948 224l2.3-116M950.3 224l2.2-116M952.5 224l2.3-116M954.8 224l2.2-116M957 224l2.2-116M959.2 224l2.2-116M961.4 224l2.2-116M963.6 224l2.2-116M965.8 224l2.2-116M968 224l2.1-116M970.1 224l2.2-116M972.3 224l2.1-116M974.4 224l2.1-116" fill="none" stroke="#f6a625" stroke-width="1.5" stroke-opacity="0.757"/><path d="M976.5 224l2.1-116M978.6 224l2.1-116M980.7 224l2.1-116M982.8 224l2.1-116M984.9 224l2-116M986.9 224l2.1-116M989 224l2.1-116M991.1 224l2-116M993.1 224l2-116M995.1 224l2-116M997.1 224l2-116M999.1 224l2-116M1001.1 224l2-116M1003.1 224l2-116M1005.1 224l2-116M1007.1 224l2-116M1009.1 224l1.9-116M1011 224l2-116" fill="none" stroke="#f6a625" stroke-width="1.5" stroke-opacity="0.737"/><path d="M1013 224l1.9-116M1014.9 224l2-116M1016.9 224l1.9-116M1018.8 224l1.9-116M1020.7 224l1.9-116M1022.6 224l1.9-116M1024.5 224l1.9-116M1026.4 224l1.9-116M1028.3 224l1.9-116M1030.2 224l1.9-116M1032.1 224l1.9-116M1034 224l1.8-116M1035.8 224l1.9-116M1037.7 224l1.9-116M1039.6 224l1.8-116M1041.4 224l1.8-116M1043.2 224l1.9-116M1045.1 224l1.8-116M1046.9 224l1.8-116M1048.7 224l1.9-116" fill="none" stroke="#f6a625" stroke-width="1.5" stroke-opacity="0.721"/><path d="M1050.6 224l1.8-116M1052.4 224l1.8-116M1054.2 224l1.8-116M1056 224l1.8-116M1057.8 224l1.8-116M1059.6 224l1.8-116M1061.4 224l1.8-116M1063.2 224l1.7-116M1064.9 224l1.8-116M1066.7 224l1.8-116M1068.5 224l1.7-116M1070.2 224l1.8-116M1072 224l1.7-116M1073.7 224l1.8-116M1075.5 224l1.7-116M1077.2 224l1.8-116M1079 224l1.7-116M1080.7 224l1.7-116M1082.4 224l1.8-116M1084.2 224l1.7-116M1085.9 224l1.7-116" fill="none" stroke="#f6a625" stroke-width="1.5" stroke-opacity="0.702"/><path d="M1087.6 224l1.7-116M1089.3 224l1.7-116M1091 224l1.7-116M1092.7 224l1.7-116M1094.4 224l1.7-116M1096.1 224l1.7-116M1097.8 224l1.7-116M1099.5 224l1.7-116M1101.2 224l1.7-116M1102.9 224l1.6-116M1104.5 224l1.7-116M1106.2 224l1.7-116M1107.9 224l1.6-116M1109.5 224l1.7-116M1111.2 224l1.6-116M1112.8 224l1.7-116M1114.5 224l1.6-116M1116.1 224l1.7-116M1117.8 224l1.6-116M1119.4 224l1.7-116M1121.1 224l1.6-116M1122.7 224l1.6-116M1124.3 224l1.6-116" fill="none" stroke="#f6a625" stroke-width="1.5" stroke-opacity="0.688"/><path d="M1125.9 224l1.7-116M1127.6 224l1.6-116M1129.2 224l1.6-116M1130.8 224l1.6-116M1132.4 224l1.6-116M1134 224l1.6-116M1135.6 224l1.6-116M1137.2 224l1.6-116M1138.8 224l1.6-116M1140.4 224l1.6-116M1142 224l1.6-116M1143.6 224l1.6-116M1145.2 224l1.5-116M1146.7 224l1.6-116M1148.3 224l1.6-116M1149.9 224l1.6-116M1151.5 224l1.5-116M1153 224l1.6-116M1154.6 224l1.6-116M1156.2 224l1.5-116M1157.7 224l1.6-116M1159.3 224l1.5-116M1160.8 224l1.6-116M1162.4 224l1.5-116M1163.9 224l1.6-116M1165.5 224l1.5-116M1167 224l1.6-116M1168.6 224l1.5-116M1170.1 224l1.5-116M1171.6 224l1.6-116M1173.2 224l1.5-116M1174.7 224l1.5-116M1176.2 224l1.6-116M1177.8 224l1.5-116M1179.3 224l1.5-116M1180.8 224l1.5-116M1182.3 224l1.5-116M1183.8 224l1.5-116M1185.3 224l1.5-116M1186.8 224l1.6-116M1188.4 224l1.5-116M1189.9 224l1.5-116M1191.4 224l1.5-116M1192.9 224l1.5-116M1194.4 224l1.4-116M1195.8 224l1.5-116M1197.3 224l1.5-116M1198.8 224l1.5-116" fill="none" stroke="#f6a625" stroke-width="1.7" stroke-opacity="0.643"/><path d="M1200.3 224l1.5-116M1201.8 224l1.5-116M1203.3 224l1.5-116M1204.8 224l1.4-116M1206.2 224l1.5-116M1207.7 224l1.5-116M1209.2 224l1.5-116M1210.7 224l1.4-116M1212.1 224l1.5-116M1213.6 224l1.5-116M1215.1 224l1.4-116M1216.5 224l1.5-116M1218 224l1.4-116M1219.4 224l1.5-116M1220.9 224l1.5-116M1222.4 224l1.4-116M1223.8 224l1.5-116M1225.3 224l1.4-116M1226.7 224l1.4-116M1228.1 224l1.5-116M1229.6 224l1.4-116M1231 224l1.5-116M1232.5 224l1.4-116M1233.9 224l1.4-116M1235.3 224l1.5-116M1236.8 224l1.4-116M1238.2 224l1.4-116M1239.6 224l1.5-116M1241.1 224l1.4-116M1242.5 224l1.4-116M1243.9 224l1.4-116M1245.3 224l1.5-116M1246.8 224l1.4-116M1248.2 224l1.4-116M1249.6 224l1.4-116M1251 224l1.4-116M1252.4 224l1.5-116M1253.9 224l1.4-116M1255.3 224l1.4-116M1256.7 224l1.4-116M1258.1 224l1.4-116M1259.5 224l1.4-116M1260.9 224l1.4-116M1262.3 224l1.4-116M1263.7 224l1.4-116M1265.1 224l1.4-116M1266.5 224l1.4-116M1267.9 224l1.4-116M1269.3 224l1.4-116M1270.7 224l1.4-116M1272.1 224l1.3-116M1273.4 224l1.4-116M1274.8 224l1.4-116" fill="none" stroke="#f6a625" stroke-width="1.7" stroke-opacity="0.669"/><path d="M1276.2 224l1.4-116M1277.6 224l1.4-116M1279 224l1.4-116M1280.4 224l1.4-116M1281.8 224l1.3-116M1283.1 224l1.4-116M1284.5 224l1.4-116M1285.9 224l1.4-116M1287.3 224l1.3-116M1288.6 224l1.4-116M1290 224l1.4-116M1291.4 224l1.3-116M1292.7 224l1.4-116M1294.1 224l1.4-116M1295.5 224l1.3-116M1296.8 224l1.4-116M1298.2 224l1.4-116M1299.6 224l1.3-116M1300.9 224l1.4-116M1302.3 224l1.3-116M1303.6 224l1.4-116M1305 224l1.3-116M1306.3 224l1.4-116M1307.7 224l1.3-116M1309 224l1.4-116M1310.4 224l1.3-116M1311.7 224l1.4-116M1313.1 224l1.3-116M1314.4 224l1.4-116M1315.8 224l1.3-116M1317.1 224l1.3-116M1318.4 224l1.4-116M1319.8 224l1.3-116M1321.1 224l1.3-116M1322.4 224l1.4-116M1323.8 224l1.3-116M1325.1 224l1.3-116M1326.4 224l1.4-116M1327.8 224l1.3-116M1329.1 224l1.3-116M1330.4 224l1.4-116M1331.8 224l1.3-116M1333.1 224l1.3-116M1334.4 224l1.3-116M1335.7 224l1.3-116M1337 224l1.4-116M1338.4 224l1.3-116M1339.7 224l1.3-116M1341 224l1.3-116M1342.3 224l1.3-116M1343.6 224l1.3-116M1344.9 224l1.4-116M1346.3 224l1.3-116M1347.6 224l1.3-116M1348.9 224l1.3-116M1350.2 224l1.3-116" fill="none" stroke="#f6a625" stroke-width="1.7" stroke-opacity="0.696"/><path d="M1351.5 224l1.3-116M1352.8 224l1.3-116M1354.1 224l1.3-116M1355.4 224l1.3-116M1356.7 224l1.3-116M1358 224l1.3-116M1359.3 224l1.3-116M1360.6 224l1.3-116M1361.9 224l1.3-116M1363.2 224l1.3-116M1364.5 224l1.3-116M1365.8 224l1.3-116M1367.1 224l1.2-116M1368.3 224l1.3-116M1369.6 224l1.3-116M1370.9 224l1.3-116M1372.2 224l1.3-116M1373.5 224l1.3-116M1374.8 224l1.3-116M1376.1 224l1.2-116M1377.3 224l1.3-116M1378.6 224l1.3-116M1379.9 224l1.3-116M1381.2 224l1.3-116M1382.5 224l1.2-116M1383.7 224l1.3-116M1385 224l1.3-116M1386.3 224l1.3-116M1387.6 224l1.2-116M1388.8 224l1.3-116M1390.1 224l1.3-116M1391.4 224l1.2-116M1392.6 224l1.3-116M1393.9 224l1.3-116M1395.2 224l1.2-116M1396.4 224l1.3-116M1397.7 224l1.3-116M1399 224l1.2-116M1400.2 224l1.3-116M1401.5 224l1.3-116M1402.8 224l1.2-116M1404 224l1.3-116M1405.3 224l1.2-116M1406.5 224l1.3-116M1407.8 224l1.2-116M1409 224l1.3-116M1410.3 224l1.3-116M1411.6 224l1.2-116M1412.8 224l1.3-116M1414.1 224l1.2-116M1415.3 224l1.3-116M1416.6 224l1.2-116M1417.8 224l1.3-116M1419.1 224l1.2-116M1420.3 224l1.2-116M1421.5 224l1.3-116M1422.8 224l1.2-116M1424 224l1.3-116M1425.3 224l1.2-116" fill="none" stroke="#f6a625" stroke-width="1.8" stroke-opacity="0.712"/><path d="M1426.5 224l1.2-116M1427.7 224l1.3-116M1429 224l1.2-116M1430.2 224l1.3-116M1431.5 224l1.2-116M1432.7 224l1.2-116M1433.9 224l1.3-116M1435.2 224l1.2-116M1436.4 224l1.2-116M1437.6 224l1.2-116M1438.8 224l1.3-116M1440.1 224l1.2-116M1441.3 224l1.2-116M1442.5 224l1.3-116M1443.8 224l1.2-116M1445 224l1.2-116M1446.2 224l1.2-116M1447.4 224l1.2-116M1448.6 224l1.3-116M1449.9 224l1.2-116M1451.1 224l1.2-116M1452.3 224l1.2-116M1453.5 224l1.2-116M1454.7 224l1.2-116M1455.9 224l1.2-116M1457.1 224l1.3-116M1458.4 224l1.2-116M1459.6 224l1.2-116M1460.8 224l1.2-116M1462 224l1.2-116M1463.2 224l1.2-116M1464.4 224l1.2-116M1465.6 224l1.2-116M1466.8 224l1.2-116M1468 224l1.2-116M1469.2 224l1.2-116M1470.4 224l1.2-116M1471.6 224l1.2-116M1472.8 224l1.2-116M1474 224l1.2-116M1475.2 224l1.2-116M1476.4 224l1.2-116M1477.6 224l1.2-116M1478.8 224l1.2-116M1480 224l1.1-116M1481.1 224l1.2-116M1482.3 224l1.2-116M1483.5 224l1.2-116M1484.7 224l1.2-116M1485.9 224l1.2-116M1487.1 224l1.2-116M1488.3 224l1.1-116M1489.4 224l1.2-116M1490.6 224l1.2-116M1491.8 224l1.2-116M1493 224l1.1-116M1494.1 224l1.2-116M1495.3 224l1.2-116M1496.5 224l1.2-116M1497.7 224l1.1-116M1498.8 224l1.2-116M1500 224l1.2-116" fill="none" stroke="#f6a625" stroke-width="1.8" stroke-opacity="0.73"/><path d="M1501.2 224l1.2-116M1502.4 224l1.1-116M1503.5 224l1.2-116M1504.7 224l1.2-116M1505.9 224l1.1-116M1507 224l1.2-116M1508.2 224l1.2-116M1509.4 224l1.1-116M1510.5 224l1.2-116M1511.7 224l1.2-116M1512.9 224l1.2-116M1514.1 224l1.1-116M1515.2 224l1.2-116M1516.4 224l1.2-116M1517.6 224l1.1-116M1518.7 224l1.2-116M1519.9 224l1.2-116M1521.1 224l1.2-116M1522.3 224l1.1-116M1523.4 224l1.2-116M1524.6 224l1.2-116M1525.8 224l1.2-116M1527 224l1.1-116M1528.1 224l1.2-116M1529.3 224l1.2-116M1530.5 224l1.2-116M1531.7 224l1.2-116M1532.9 224l1.1-116M1534 224l1.2-116M1535.2 224l1.2-116M1536.4 224l1.2-116M1537.6 224l1.2-116M1538.8 224l1.1-116M1539.9 224l1.2-116M1541.1 224l1.2-116M1542.3 224l1.2-116M1543.5 224l1.2-116M1544.7 224l1.2-116M1545.9 224l1.1-116M1547 224l1.2-116M1548.2 224l1.2-116M1549.4 224l1.2-116M1550.6 224l1.2-116M1551.8 224l1.1-116M1552.9 224l1.2-116M1554.1 224l1.2-116M1555.3 224l1.2-116M1556.5 224l1.2-116M1557.7 224l1.2-116M1558.9 224l1.1-116M1560 224l1.2-116M1561.2 224l1.2-116M1562.4 224l1.2-116M1563.6 224l1.2-116M1564.8 224l1.1-116M1565.9 224l1.2-116M1567.1 224l1.2-116M1568.3 224l1.2-116M1569.5 224l1.2-116M1570.7 224l1.2-116M1571.9 224l1.1-116M1573 224l1.2-116M1574.2 224l1.2-116M1575.4 224l1.2-116M1576.6 224l1.2-116M1577.8 224l1.2-116M1579 224l1.1-116M1580.1 224l1.2-116M1581.3 224l1.2-116M1582.5 224l1.2-116M1583.7 224l1.2-116M1584.9 224l1.1-116M1586 224l1.2-116M1587.2 224l1.2-116M1588.4 224l1.2-116M1589.6 224l1.2-116M1590.8 224l1.2-116M1592 224l1.1-116M1593.1 224l1.2-116M1594.3 224l1.2-116M1595.5 224l1.2-116M1596.7 224l1.2-116M1597.9 224l1.2-116M1599.1 224l1.1-116M1600.2 224l1.2-116M1601.4 224l1.2-116M1602.6 224l1.2-116M1603.8 224l1.2-116M1605 224l1.2-116M1606.2 224l1.1-116M1607.3 224l1.2-116M1608.5 224l1.2-116M1609.7 224l1.2-116M1610.9 224l1.2-116M1612.1 224l1.1-116M1613.2 224l1.2-116M1614.4 224l1.2-116M1615.6 224l1.2-116M1616.8 224l1.2-116M1618 224l1.2-116M1619.2 224l1.1-116M1620.3 224l1.2-116M1621.5 224l1.2-116M1622.7 224l1.2-116M1623.9 224l1.2-116M1625.1 224l1.2-116M1626.3 224l1.1-116M1627.4 224l1.2-116M1628.6 224l1.2-116M1629.8 224l1.2-116M1631 224l1.2-116M1632.2 224l1.2-116M1633.4 224l1.1-116M1634.5 224l1.2-116M1635.7 224l1.2-116M1636.9 224l1.2-116M1638.1 224l1.2-116M1639.3 224l1.1-116M1640.4 224l1.2-116M1641.6 224l1.2-116M1642.8 224l1.2-116M1644 224l1.2-116M1645.2 224l1.2-116M1646.4 224l1.1-116M1647.5 224l1.2-116M1648.7 224l1.2-116M1649.9 224l1.2-116M1651.1 224l1.2-116M1652.3 224l1.2-116M1653.5 224l1.1-116M1654.6 224l1.2-116M1655.8 224l1.2-116M1657 224l1.2-116M1658.2 224l1.2-116M1659.4 224l1.2-116M1660.6 224l1.1-116M1661.7 224l1.2-116M1662.9 224l1.2-116M1664.1 224l1.2-116M1665.3 224l1.2-116M1666.5 224l1.2-116M1667.7 224l1.1-116M1668.8 224l1.2-116M1670 224l1.2-116M1671.2 224l1.2-116M1672.4 224l1.2-116M1673.6 224l1.1-116M1674.7 224l1.2-116M1675.9 224l1.2-116M1677.1 224l1.2-116M1678.3 224l1.2-116M1679.5 224l1.2-116M1680.7 224l1.1-116M1681.8 224l1.2-116M1683 224l1.2-116M1684.2 224l1.2-116M1685.4 224l1.2-116M1686.6 224l1.2-116M1687.8 224l1.1-116M1688.9 224l1.2-116M1690.1 224l1.2-116M1691.3 224l1.2-116M1692.5 224l1.2-116M1693.7 224l1.2-116M1694.9 224l1.1-116M1696 224l1.2-116M1697.2 224l1.2-116M1698.4 224l1.2-116M1699.6 224l1.2-116M1700.8 224l1.2-116M1702 224l1.1-116M1703.1 224l1.2-116M1704.3 224l1.2-116M1705.5 224l1.2-116M1706.7 224l1.2-116M1707.9 224l1.2-116M1709.1 224l1.1-116M1710.2 224l1.2-116M1711.4 224l1.2-116M1712.6 224l1.2-116M1713.8 224l1.2-116M1715 224l1.2-116M1716.2 224l1.1-116M1717.3 224l1.2-116M1718.5 224l1.2-116M1719.7 224l1.2-116M1720.9 224l1.2-116M1722.1 224l1.2-116M1723.3 224l1.1-116M1724.4 224l1.2-116M1725.6 224l1.2-116M1726.8 224l1.2-116M1728 224l1.2-116M1729.2 224l1.1-116M1730.3 224l1.2-116M1731.5 224l1.2-116M1732.7 224l1.2-116M1733.9 224l1.2-116M1735.1 224l1.2-116M1736.3 224l1.1-116M1737.4 224l1.2-116M1738.6 224l1.2-116M1739.8 224l1.2-116M1741 224l1.2-116M1742.2 224l1.2-116M1743.4 224l1.1-116M1744.5 224l1.2-116M1745.7 224l1.2-116M1746.9 224l1.2-116M1748.1 224l1.2-116M1749.3 224l1.2-116M1750.5 224l1.1-116M1751.6 224l1.2-116M1752.8 224l1.2-116M1754 224l1.2-116M1755.2 224l1.2-116M1756.4 224l1.2-116M1757.6 224l1.1-116M1758.7 224l1.2-116M1759.9 224l1.2-116M1761.1 224l1.2-116M1762.3 224l1.2-116M1763.5 224l1.2-116M1764.7 224l1.1-116M1765.8 224l1.2-116M1767 224l1.2-116M1768.2 224l1.2-116M1769.4 224l1.2-116M1770.6 224l1.2-116M1771.8 224l1.1-116M1772.9 224l1.2-116M1774.1 224l1.2-116M1775.3 224l1.2-116M1776.5 224l1.2-116M1777.7 224l1.2-116M1778.9 224l1.1-116M1780 224l1.2-116M1781.2 224l1.2-116M1782.4 224l1.2-116M1783.6 224l1.2-116M1784.8 224l1.2-116M1786 224l1.1-116M1787.1 224l1.2-116M1788.3 224l1.2-116M1789.5 224l1.2-116M1790.7 224l1.2-116M1791.9 224l1.2-116M1793.1 224l1.1-116M1794.2 224l1.2-116M1795.4 224l1.2-116M1796.6 224l1.2-116M1797.8 224l1.2-116M1799 224l1.2-116M1800.2 224l1.1-116M1801.3 224l1.2-116M1802.5 224l1.2-116M1803.7 224l1.2-116M1804.9 224l1.2-116M1806.1 224l1.2-116M1807.3 224l1.1-116M1808.4 224l1.2-116M1809.6 224l1.2-116M1810.8 224l1.2-116M1812 224l1.2-116M1813.2 224l1.1-116M1814.3 224l1.2-116M1815.5 224l1.2-116M1816.7 224l1.2-116M1817.9 224l1.2-116M1819.1 224l1.2-116M1820.3 224l1.1-116M1821.4 224l1.2-116M1822.6 224l1.2-116M1823.8 224l1.2-116M1825 224l1.2-116M1826.2 224l1.2-116M1827.4 224l1.1-116M1828.5 224l1.2-116M1829.7 224l1.2-116M1830.9 224l1.2-116M1832.1 224l1.2-116M1833.3 224l1.2-116M1834.5 224l1.1-116M1835.6 224l1.2-116M1836.8 224l1.2-116M1838 224l1.2-116M1839.2 224l1.2-116M1840.4 224l1.2-116M1841.6 224l1.1-116M1842.7 224l1.2-116M1843.9 224l1.2-116M1845.1 224l1.2-116M1846.3 224l1.2-116M1847.5 224l1.2-116M1848.7 224l1.1-116M1849.8 224l1.2-116M1851 224l1.2-116M1852.2 224l1.2-116M1853.4 224l1.2-116M1854.6 224l1.2-116M1855.8 224l1.1-116M1856.9 224l1.2-116M1858.1 224l1.2-116M1859.3 224l1.2-116M1860.5 224l1.2-116M1861.7 224l1.2-116M1862.9 224l1.1-116M1864 224l1.2-116M1865.2 224l1.2-116M1866.4 224l1.2-116M1867.6 224l1.2-116M1868.8 224l1.2-116M1870 224l1.1-116M1871.1 224l1.2-116M1872.3 224l1.2-116M1873.5 224l1.2-116M1874.7 224l1.2-116M1875.9 224l1.1-110.4" fill="none" stroke="#f6a625" stroke-width="1.8" stroke-opacity="0.738"/><path d="M769.6 108V224M777.1 108V224M783.1 108V224M788.5 108V224M793.6 108V224M798.4 108V224M802.9 108V224M807.3 108V224M811.5 108V224M815.6 108V224M819.5 108V224M823.4 108V224M827.2 108V224M830.9 108V224M834.5 108V224M838.1 108V224M841.6 108V224M845 108V224M848.4 108V224M851.7 108V224M855 108V224M858.2 108V224M861.4 108V224M864.5 108V224M867.5 108V224M870.6 108V224M873.6 108V224M876.5 108V224M879.4 108V224M882.3 108V224" fill="none" stroke="#f6a625" stroke-width="1.3" stroke-opacity="0.22"/><path d="M749 224l3-1.1l3-1.4l3-1.9l3-2.3l1-.8l2-1.5l3-2.4l2-1.6l1-.8l3-2.4l3-2.1l1-.5l2-.9l3-1.2l3-1l3-1l2-.6l1-.3l3-.9l3-.9l3-.9l3-.8l3-.8l3-.7l1-.2l2-.4l3-.7l3-.6l3-.6l3-.5l3-.5l3-.6l3-.5l3-.5l3-.6l3-.5l3-.6l3-.5l3-.6l3-.5l3-.6l3-.5l3-.6l3-.6l3-.5l3-.6l3-.5l3-.6l3-.5l3-.5l3-.6l3-.5l3-.5l3-.5l3-.5l1-.2l2-.3l3-.5l3-.5l3-.5l3-.5l3-.5l3-.5l3-.4l3-.5l3-.5l3-.5l3-.4l3-.5l3-.5l3-.4l3-.5l3-.4l3-.5l3-.4l3-.5l3-.4l3-.5l3-.4l3-.4l3-.5l3-.4l3-.4l3-.4l3-.5l3-.4l3-.4l3-.4l3-.4l3-.4l2.6-.3l.4-.1l3-.3l3-.4l3-.4l3-.4l3-.3l3-.4l3-.4l3-.3l3-.4l3-.3l3-.4l3-.3l3-.4l3-.3l3-.4l3-.3l3-.3l3-.4l3-.3l3-.3l3-.4l3-.3l3-.3l3-.3l3-.4l3-.3l3-.3l3-.3l3-.4l3-.3l3-.3l3-.3l3-.3l3-.3l3-.3l3-.3l3-.4l3-.3l3-.3l3-.3l3-.3l3-.3l3-.3l3-.3l3-.2l3-.3l3-.3l3-.3l3-.3l3-.3l3-.3l3-.2l3-.3l2-.2l1-.1l3-.3l3-.2l3-.3l3-.3l3-.3l3-.2l3-.3l3-.2l3-.3l3-.3l3-.2l3-.3l3-.2l3-.3l3-.2l3-.3l3-.2l3-.3l3-.2l3-.3l3-.2l1-.1l2-.2l3-.2l3-.2l3-.3l3-.2l3-.2l3-.2l3-.3l3-.2l3-.2l3-.2l3-.2l3-.3l3-.2l3-.2l3-.2l3-.2l3-.2l3-.3l3-.2l3-.2l3-.2l3-.2l3-.2l3-.3l3-.2l3-.2l3-.2l3-.2l3-.2l3-.2l3-.3l3-.2l3-.2l3-.2l3-.2l3-.2l3-.2l3-.2l3-.2l3-.3l3-.2l3-.2l2-.1l1-.1l3-.2l3-.2l3-.2l3-.2l3-.2l3-.1l3-.2l3-.2l3-.2l3-.2l3-.2l3-.2l3-.2l3-.2l3-.2l3-.2l3-.2l3-.1l3-.3l3-.2l3-.2l2-.1l1-.1l3-.2l3-.2l3-.2l3-.2l3-.3l3-.2l3-.2l3-.2l3-.3l3-.2l3-.2l3-.3l3-.2l3-.2l1-.1l2-.2l3-.2l3-.3l3-.3l3-.3l3-.2l3-.3l3-.2l3-.2l3-.1l2-.1l1 0l3-.1l3-.1l3 0l1 0l2 0l3 .2l3 .1l3 .2l2 .1l1 0l3 .2l3 .1l3 .1l3 .1l2 0l1 0l3 0l3 0l3 0l3 0l3 0l3 0l3 0l3 0l3 0l3 0l3 0l3 0l3 0l3 0l3 0l3 0l3 0l3 0l3 0l3 0l3 0l3 0l3 0l3 0l3 .1l3 0l3 0l3 0l3 0l3 0l3 0l3 0l3 0l3 0l3 0l3 0l3 0l3 0l3 0l3 0l3 0l3 0l3 0l3 0l3 0l3 0l3 0l3 0l3 0l3 0l3 0l3 0l3 0l3 0l3 0l3 0l3 0l3 0l3 0l3 0l3 0l3 0l3 0l3 0l3 0l3 0l3 0l3 0l3 0l3 0l3 0l3 0l3 0l3 0l3 0l3 0l3 0l3 0l3 0l3 0l3 0l3 0l3 0l3 0l3 0l3 0l3 0l3 0l3 0l3 0l3 0l3 0l3 0l3 0l3 0l3 0l3 0l3 0l3 0l3 0l3 0l3 0l3 0l3 0l3 0l3 0l3 0l3 0l3 0l3 0l3 0l3 0" fill="none" stroke="#3a22e0" stroke-width="2.6" stroke-opacity=".3" stroke-dasharray="3 1.7"/></g>
<line x1="750" y1="385" x2="1877" y2="385" stroke="#ebebeb" stroke-width="1.6"/><text x="748" y="389.5" text-anchor="end">195.7</text><line x1="750" y1="411.25" x2="1877" y2="411.25" stroke="#ebebeb" stroke-width="1.6"/><text x="748" y="415.75" text-anchor="end">97.8</text><line x1="750" y1="437.5" x2="1877" y2="437.5" stroke="#ebebeb" stroke-width="1.6"/><text x="748" y="442" text-anchor="end">0.0</text><line x1="750" y1="463.75" x2="1877" y2="463.75" stroke="#ebebeb" stroke-width="1.6"/><text x="748" y="468.25" text-anchor="end">-97.8</text><line x1="750" y1="490" x2="1877" y2="490" stroke="#e0e0e0" stroke-width="2"/><text x="748" y="494.5" text-anchor="end">-195.7</text><line x1="753.5" y1="385" x2="753.5" y2="494" stroke="#e6e6e6" stroke-width="1"/><text x="753.5" y="508" text-anchor="middle">0.00</text><line x1="1034.5" y1="385" x2="1034.5" y2="494" stroke="#e6e6e6" stroke-width="1"/><text x="1034.5" y="508" text-anchor="middle">0.75</text><line x1="1315.5" y1="385" x2="1315.5" y2="494" stroke="#e6e6e6" stroke-width="1"/><text x="1315.5" y="508" text-anchor="middle">1.50</text><line x1="1596.5" y1="385" x2="1596.5" y2="494" stroke="#e6e6e6" stroke-width="1"/><text x="1596.5" y="508" text-anchor="middle">2.25</text><line x1="1877.5" y1="385" x2="1877.5" y2="494" stroke="#e6e6e6" stroke-width="1"/><text x="1877.5" y="508" text-anchor="middle">3.00</text><rect x="1167.5" y="351.5" width="8" height="8" fill="#209fdf" stroke="#1a1a1a" stroke-width="1"/><text x="1180.6" y="360" textLength="30.8" lengthAdjust="spacing">Va (V)</text><rect x="1221.5" y="351.5" width="8" height="8" fill="#99ca53" stroke="#1a1a1a" stroke-width="1"/><text x="1234" y="360" textLength="31.4" lengthAdjust="spacing">Vb (V)</text><rect x="1274.5" y="351.5" width="8" height="8" fill="#f6a625" stroke="#1a1a1a" stroke-width="1"/><text x="1288" y="360" textLength="30" lengthAdjust="spacing">Vc (V)</text><rect x="1327.5" y="351.5" width="8" height="8" fill="#0000ff" stroke="#1a1a1a" stroke-width="1"/><text x="1340" y="360" textLength="31.4" lengthAdjust="spacing">Vq (V)</text><rect x="1380.5" y="351.5" width="8" height="8" fill="#ff0000" stroke="#1a1a1a" stroke-width="1"/><text x="1394" y="360" textLength="31.4" lengthAdjust="spacing">Vd (V)</text><clipPath id="c2"><rect x="752.5" y="383.8" width="1126.0" height="108.2"/></clipPath><g clip-path="url(#c2)"><path d="M754 437.5l1.5 1.9l1.6 2.2l1.5 5.8l1.5 7.3l1.6 6.9l1.5 6.3l1.3 1.8l1.1-3.7l.9-7.9l.9-11.5l.7-13.6l.8-14.1l.7-12.5l.7-9.2l.6-4.6l.6 .6l.6 5.7l.5 10.9l.6 13.6l.5 15.7l.5 16l.5 13.2l.5 10l.4 4.8l.5-.2l.4-5.6l.5-10.6l.4-13.4l.4-15.5l.4-15.8l.4-14.2l.4-10.6l.4-5.2l.4-.1l.4 5.2l.3 10.2l.4 13.9l.4 16.3l.4 16.3l.3 14.4l.4 9.6l.3 5.2l.3 .1l.4-5.2l.3-9.9l.4-13.6l.3-15.7l.3-15.9l.4-14.3l.3-10.7l.3-5.8l.4 .1l.3 5.9l.4 11.2l.3 15l.3 16.9l.3 14.8l.3 12.8l.3 9.4l.3 5l.3-.1l.3-5.3l.3-9.8l.3-13.4l.3-15.5l.3-15.7l.3-14l.3-10.8l.3-6.1l.3-.7l.3 4.9l.3 10l.3 13.8l.3 16.1l.3 16.2l.3 14.4l.3 10.6l.3 5.5l.3-.5l.3-6.4l.3-11.6l.3-15.2l.3-16.9l.3-16.3l.3-13.5l.3-8.7l.3-2.8l.3 3.7l.3 8.2l.2 12l.3 14.4l.3 15.4l.2 14.6l.3 12.1l.2 8.4l.3 3.5l.3-1.7l.2-6.8l.3-11.1l.3-14.3l.2-15.7l.3-15.4l.2-13.2l.3-9.4l.3-4.4l.2 1l.3 6.5l.3 11.2l.2 14.5l.3 16.2l.2 15.7l.3 13.4l.3 9.4l.2 4.1l.3-1.8l.2-7.4l.3-12.1l.3-15.4l.2-16.7l.3-15.7l.3-12.8l.2-8l.3-2.4l.2 3.9l.3 9.5l.3 13.9l.2 16.5l.3 16.9l.3 15l.2 10.9l.3 5.4l.2-1l.3-7.1l.3-12.5l.2-16.1l.3-17.4l.3-16.2l.2-12.8l.3-7.5l.2-1l.3 5.6l.3 11.4l.2 15.7l.2 15.1l.3 14.9l.2 13.1l.2 9.8l.2 5.5l.3 .5l.2-4.6l.2-9.1l.2-12.8l.3-14.9l.2-15.4l.2-14.3l.2-11.4l.3-7.2l.2-2.3l.2 3l.2 8l.3 12l.2 14.7l.2 15.7l.2 14.9l.3 12.4l.2 8.3l.2 3.4l.2-2.1l.3-7.4l.2-11.6l.2-14.7l.2-15.9l.3-15.3l.2-12.9l.2-8.8l.2-3.6l.3 1.9l.2 7.3l.2 11.8l.2 14.9l.3 16.1l.2 15.5l.2 12.9l.2 8.6l.3 3.3l.2-2.5l.2-7.9l.2-12.4l.3-15.3l.2-16.4l.2-15.4l.2-12.4l.3-7.8l.2-2.3l.2 3.7l.2 9.1l.3 13.5l.2 16l.2 16.5l.2 14.9l.2 11.4l.3 6.3l.2 .4l.2-5.5l.2-10.9l.3-14.7l.2-16.6l.2-16.4l.2-14l.3-9.6l.2-4l.2 2.1l.2 8.1l.3 12.9l.2 16l.2 17l.2 15.6l.3 12.2l.2 7.1l.2 .9l.2-5.4l.3-10.9l.2-15l.2-17l.2-16.7l.3-14l.2-9.5l.2-3.5l.2 3l.3 9l.2 13.8l.2 16.7l.2 17.3l.3 15.4l.2 11.2l.2 5.6l.2-1l.3-7.4l.2-12.7l.2-16.3l.2-17.6l.3-16.2l.2-12.6l.2-7.1l.2-.5l.3 6.1l.2 11.9l.2 15.9l.2 17.7l.3 16.8l.2 13.5l.2 8.1l.2 1.5l.3-5.2l.2-11.3l.2-15.7l.2-17.8l.3-17.2l.2-14l.2-8.7l.2-2.1l.3 4.9l.2 11.2l.2 15.7l.2 17.9l.2 17.4l.3 14.2l.2 8.8l.2 2l.2-5l.3-11.4l.2-13.1l.1-14.9l.2-15.1l.2-13.6l.2-10.7l.2-6.6l.2-1.7l.2 3.3l.2 8l.1 11.8l.2 14.4l.2 15.3l.2 14.6l.2 12.3l.2 8.5l.2 3.9l.2-1.2l.1-6.3l.2-10.5l.2-13.7l.2-15.3l.2-15.2l.2-13.4l.2-10.1l.2-5.6l.1-.5l.2 4.8l.2 9.4l.2 13l.2 15.1l.2 15.6l.2 14.2l.1 11.2l.2 6.9l.2 1.7l.2-3.5l.2-8.5l.2-12.5l.2-14.9l.2-15.8l.1-14.7l.2-12l.2-7.7l.2-2.7l.2 2.8l.2 7.8l.2 12.1l.2 14.9l.1 15.9l.2 15.1l.2 12.4l.2 8.2l.2 3.2l.2-2.4l.2-7.6l.2-12l.1-14.9l.2-16.1l.2-15.2" fill="none" stroke="#209fdf" stroke-width="2.2" stroke-linejoin="round"/><path d="M754 437.5l1.5-3l1.6-3.2l1.5-6.7l1.5-5.3l1.6-.9l1.5 3.9l1.3 8.9l1.1 11.9l.9 12.4l.9 11.7l.7 8.8l.8 4.3l.7-.7l.7-5.8l.6-10.4l.6-13.6l.6-15l.5-15.5l.6-12.9l.5-9.7l.5-5l.5 .6l.5 6l.4 10.1l.5 13.6l.4 15.8l.5 16.1l.4 13.3l.4 10.2l.4 5.5l.4 .1l.4-5.8l.4-9.9l.4-13.5l.4-15.6l.3-15.8l.4-14.2l.4-10.7l.4-5.6l.3 .4l.4 5.5l.3 10l.3 13.4l.4 15.4l.3 15.7l.4 13.9l.3 10.7l.3 5.9l.4 .3l.3-5.3l.3-10.5l.4-14.4l.3-16.5l.4-16.4l.3-14.2l.3-10l.3-4.2l.3 .8l.3 5.7l.3 10.2l.3 13.4l.3 15.3l.3 15.5l.3 13.7l.3 10.5l.3 6l.3 .6l.3-4.8l.3-9.8l.3-13.6l.3-15.8l.3-16.1l.3-14.4l.3-10.8l.3-5.9l.3-.1l.3 5.7l.3 10.8l.3 14.7l.3 16.6l.3 16.4l.3 14l.3 9.5l.3 4l.3-2.4l.3-8.5l.3-13.3l.3-16.5l.3-15.2l.2-14.2l.3-11.6l.3-7.7l.2-3l.3 2.2l.2 7.2l.3 11.3l.3 14.3l.2 15.6l.3 15.2l.3 12.9l.2 9.2l.3 4.3l.2-1.2l.3-6.4l.3-11.1l.2-14.4l.3-16l.3-15.6l.2-13.4l.3-9.5l.2-4.4l.3 1.4l.3 6.9l.2 11.8l.3 15l.2 16.5l.3 15.8l.3 13.1l.2 8.6l.3 3.1l.3-3l.2-8.7l.3-13.2l.2-16.2l.3-16.8l.3-15.4l.2-11.7l.3-6.4l.3-.3l.2 5.9l.3 11.4l.2 15.4l.3 17.2l.3 16.6l.2 13.7l.3 8.8l.3 2.7l.2-3.9l.3-10l.2-14.7l.3-17.2l.3-17.3l.2-14.9l.2-9.2l.3-4.7l.2 .3l.2 5.2l.2 9.6l.3 13.1l.2 15l.2 15.3l.2 13.9l.3 10.9l.2 6.8l.2 1.7l.2-3.4l.3-8.3l.2-12.2l.2-14.8l.2-15.7l.3-14.7l.2-12.1l.2-8l.2-3.1l.3 2.3l.2 7.5l.2 11.7l.2 14.7l.3 15.9l.2 15.2l.2 12.7l.2 8.7l.3 3.6l.2-1.9l.2-7.2l.2-11.7l.3-14.8l.2-16.1l.2-15.4l.2-12.9l.3-8.8l.2-3.5l.2 2.2l.2 7.7l.3 12.1l.2 15.2l.2 16.3l.2 15.5l.3 12.6l.2 8.1l.2 2.7l.2-3.2l.3-8.6l.2-13.1l.2-15.8l.2-16.5l.3-15.1l.2-11.8l.2-6.9l.2-1.1l.2 4.9l.3 10.2l.2 14.3l.2 16.4l.2 16.5l.3 14.3l.2 10.3l.2 4.9l.2-1.2l.3-7.2l.2-12.2l.2-15.6l.2-16.9l.3-16l.2-12.8l.2-8.1l.2-2l.3 4.2l.2 10l.2 14.3l.2 16.7l.3 16.9l.2 14.7l.2 10.5l.2 4.8l.3-1.6l.2-7.8l.2-12.9l.2-16.2l.3-17.3l.2-15.9l.2-12.4l.2-6.9l.3-.7l.2 5.9l.2 11.5l.2 15.6l.3 17.4l.2 16.8l.2 13.7l.2 8.6l.3 2.3l.2-4.3l.2-10.4l.2-15l.3-17.4l.2-17.2l.2-14.7l.2-9.8l.3-3.5l.2 3.3l.2 9.6l.2 14.6l.3 17.3l.2 17.6l.2 15.2l.2 10.5l.3 4.3l.2-2.7l.2-9.3l.2-14.4l.3-17.4l.2-17.8l.2-15.5l.2-10.8l.2-4.4l.3 2.6l.2 9.3l.2 14.5l.2 17.7l.3 17.9l.2 13.2l.1 10.1l.2 5.8l.2 1l.2-4.1l.2-8.6l.2-12.3l.2-14.6l.2-15.2l.1-14.4l.2-11.8l.2-7.9l.2-3.3l.2 1.9l.2 6.8l.2 11l.2 13.9l.1 15.4l.2 15l.2 13.1l.2 9.6l.2 5.1l.2-.1l.2-5.2l.2-9.7l.1-13.3l.2-15.2l.2-15.5l.2-13.9l.2-10.9l.2-6.5l.2-1.3l.1 3.9l.2 8.7l.2 12.6l.2 15.1l.2 15.7l.2 14.5l.2 11.8l.2 7.5l.1 2.4l.2-3l.2-8l.2-12.2l.2-14.9l.2-15.9l.2-14.9l.2-12.3l.1-8.2l.2-3l.2 2.5l.2 7.7l.2 11.9l.2 14.9l.2 16l.2 15.2l.1 12.6l.2 8.4l.2 3.2" fill="none" stroke="#99ca53" stroke-width="2.2" stroke-linejoin="round"/><path d="M754 437.5l1.5 1.2l1.6 .9l1.5 .8l1.5-2l1.6-5.9l1.5-10.2l1.3-10.6l1.1-8.3l.9-4.5l.9-.2l.7 4.7l.8 9.8l.7 13.3l.7 15l.6 15l.6 12.9l.6 9.4l.5 4.6l.6-.8l.5-5.9l.5-11l.5-13.8l.5-16l.4-14.9l.5-13.5l.4-10.2l.5-5.4l.4 .1l.4 5.3l.4 10.2l.4 14.2l.4 16.4l.4 15.1l.4 13.6l.4 10.3l.3 5.8l.4 .2l.4-5.6l.4-10.7l.3-14.8l.4-15.1l.3-15.2l.3-13.5l.4-10.3l.3-5.7l.4-.4l.3 5.1l.3 10.1l.4 13.9l.3 16l.3 16.3l.4 14.3l.3 10.5l.4 5.3l.3-.8l.3-6.9l.3-10.6l.3-13.6l.3-15.1l.3-15.2l.3-13.3l.3-10.1l.3-5.5l.3-.4l.3 4.9l.3 9.8l.3 13.4l.3 15.6l.3 15.9l.3 14.3l.3 10.9l.3 6.1l.3 .5l.3-5.2l.3-10.3l.3-14.2l.3-16.4l.3-16.3l.3-14.2l.3-10.2l.3-4.8l.3 1.3l.3 7.3l.3 12.4l.3 15.8l.3 17.2l.3 16.1l.3 12.8l.3 7l.2 2.2l.3-2.8l.3-7.7l.2-11.6l.3-14.3l.2-15.5l.3-14.9l.3-12.6l.2-8.8l.3-4l.3 1.3l.2 6.6l.3 11l.2 14.3l.3 15.9l.3 15.5l.2 13.3l.3 9.6l.3 4.4l.2-1.1l.3-6.6l.2-11.4l.3-14.8l.3-16.3l.2-15.8l.3-13.3l.2-9.1l.3-3.7l.3 2.3l.2 8l.3 12.7l.3 15.7l.2 16.8l.3 15.6l.2 12.3l.3 7.4l.3 1.4l.2-4.9l.3-10.4l.3-14.6l.2-16.9l.3-16.8l.2-14.4l.3-10l.3-4.1l.2 2.3l.3 8.6l.3 13.5l.2 16.7l.3 17.5l.2 15.7l.3 11.6l.3 5.9l.2-.8l.2-5.9l.3-10.2l.2-13.3l.2-15.1l.2-15.1l.3-13.5l.2-10.5l.2-6.1l.2-1.2l.3 4l.2 8.7l.2 12.4l.2 14.9l.3 15.5l.2 14.5l.2 11.8l.2 7.7l.3 2.7l.2-2.6l.2-7.7l.2-11.9l.3-14.6l.2-15.8l.2-15.1l.2-12.6l.3-8.5l.2-3.5l.2 1.9l.2 7.3l.3 11.6l.2 14.7l.2 16.1l.2 15.3l.3 12.9l.2 8.8l.2 3.6l.2-2l.3-7.4l.2-12l.2-15l.2-16.2l.3-15.5l.2-12.7l.2-8.5l.2-3l.3 2.8l.2 8.2l.2 12.7l.2 15.6l.3 16.5l.2 15.2l.2 12.2l.2 7.4l.3 1.7l.2-4.3l.2-9.6l.2-13.8l.2-16.3l.3-16.5l.2-14.7l.2-10.9l.2-5.6l.3 .4l.2 6.3l.2 11.5l.2 15.2l.3 16.8l.2 16.2l.2 13.4l.2 8.9l.3 3.1l.2-3.1l.2-9l.2-13.6l.3-16.4l.2-17l.2-15.3l.2-11.4l.3-5.9l.2 .3l.2 6.5l.2 11.9l.3 15.6l.2 17.3l.2 16.3l.2 13.3l.3 8.3l.2 2.1l.2-4.4l.2-10.3l.3-14.7l.2-17.1l.2-17.1l.2-14.6l.3-10.1l.2-4l.2 2.7l.2 8.9l.3 13.9l.2 16.9l.2 17.5l.2 15.5l.3 11.3l.2 5.4l.2-1.3l.2-7.9l.3-13.3l.2-16.7l.2-17.8l.2-16.1l.3-12.1l.2-6.3l.2 .6l.2 7.2l.3 12.9l.2 16.7l.2 18l.2 16.4l.3 12.6l.2 6.6l.2-.2l.2-7.1l.2-13l.3-16.8l.2-18.1l.2-16.6l.2-12.6l.3-6.5l.2-.1l.1 4.8l.2 9.3l.2 12.6l.2 14.8l.2 15.2l.2 14l.2 11.3l.2 7.3l.1 2.5l.2-2.6l.2-7.4l.2-11.4l.2-14.1l.2-15.4l.2-14.8l.2-12.7l.1-9.1l.2-4.5l.2 .6l.2 5.7l.2 10.2l.2 13.4l.2 15.3l.2 15.3l.1 13.7l.2 10.5l.2 6.1l.2 .9l.2-4.3l.2-9l.2-12.8l.1-15.1l.2-15.7l.2-14.4l.2-11.4l.2-7.3l.2-2.1l.2 3.3l.2 8.2l.1 12.3l.2 15l.2 15.8l.2 14.8l.2 12.2l.2 7.9l.2 2.9l.2-2.6l.1-7.8l.2-12l.2-14.9l.2-15.9l.2-15.1l.2-12.5l.2-8.4l.2-3.2l.1 2.4l.2 7.6l.2 12" fill="none" stroke="#f6a625" stroke-width="2.7" stroke-linejoin="round"/><path d="M830 390.2l4 0l4 0l4 0l4 0l4 0l4 0l4 0l4 0l4 0l4 0l4 0l4 0l4 0l4 0l4 0l4 0l4 0l4 0l4 0l4 0l4 0l4 0l4 0l4 0l4 0l4 0l4 0l4 0l4 0l4 0l4 0l4 0l4 0l4 0l4 0l4 0l4 0l4 0l4 0l4 0l4 0l4 0l4 0l4 0l4 0l4 0l4 0l4 0l4 0l4 0l4 0l4 0l4 0l4 0l4 0l4 0l4 0l4 0l4 0l4 0l4 0l4 0l4 0l4 0l4 0l4 0l4 0l4 0l4 0l4 0l4 0l4 0l4 0l4 0l4 0l4 0l4 0l4 0l4 0l4 0l4 0l4 0l4 0l4 0l4 0l4 0l4 0l4 0l4 0l4 0l4 0l4 0l4 0l4 0l4 0l4 0l4 0l4 0l4 0l4 0l4 0l4 0l4 0l4 0l4 0l4 0l4 0l4 0l4 0l4 0l4 0l4 0l4 0l4 0l4 0l4 0l4 0l4 0l4 0l4 0l4 0l4 0l4 0l4 0l4 0l4 0l4 0l4 0l4 0l4 0l4 0l4 0l4 0l4 0l4 0l4 0l4 0l4 0l4 0l4 0l4 0l4 0l4 0l4 0l4 0l4 0l4 0l4 0l4 0l4 0l4 0l4 0l4 0l4 0l4 0l4 0l4 0l4 0l4 0l4 0l4 0l4 0l4 0l4 0l4 0l4 0l4 0l4 0l1 0l2 3.2l1 1l2 2l2 1.6l3 2.4l1 .5l4 2l1 .5l3 1.2l2 .8l2 .9l4 1.7l4 1.8l4 1.7l2 .9l2 .7l4 1.5l4 1.5l4 1.5l2 .8l2 .5l4 1.1l4 1l4 1.1l2 .5l2 .3l4 .6l4 .6l4 .7l4 .6l4 .6l4 .6l4 .5l4 .4l4 .5l4 .5l4 .5l2 .2l2 .2l4 .4l4 .4l4 .4l4 .4l4 .4l4 .4l4 .4l4 .3l4 .3l4 .3l4 .3l4 .3l4 .3l4 .3l2 .1l2 .1l4 .3l4 .2l4 .2l4 .3l2 .1l2 .1l4 .2l4 .2l2 .1l2 0l4 .1l4 1.2l3 0l1 0l4 0l4 0l4 0l4 0l4 0l4 0l4 0l4 0l4 0l4 0l4 0l4 0l4 0l4 0l4 0l4 0l4 0l4 0l4 0l4 0l4 0l4 0l4 0l4 0l4 0l4 0l4 0l4 0l4 0l4 0l4 0l4 0l4 0l4 0l4 0l4 0l4 0l3 0l0 0l-3 0l-4 0l-4 0l-4 0l-4 0l-4 0l-4 0l-4 0l-4 0l-4 0l-4 0l-4 0l-4 0l-4 0l-4 0l-4 0l-4 0l-4 0l-4 0l-4 0l-4 0l-4 0l-4 0l-4 0l-4 0l-4 0l-4 0l-4 0l-4 0l-4 0l-4 0l-4 0l-4 0l-4 0l-4 0l-4 0l-4 0l-4 0l-1 0l-3 0l-4 1.2l-4 .1l-2 0l-2 .1l-4 .2l-4 .2l-2 .1l-2 .1l-4 .3l-4 .2l-4 .2l-4 .3l-2 .1l-2 .1l-4 .3l-4 .3l-4 .3l-4 .3l-4 .3l-4 .3l-4 .3l-4 .4l-4 .4l-4 .4l-4 .4l-4 .4l-4 .4l-4 .4l-2 .2l-2 .2l-4 .5l-4 .5l-4 .5l-4 .4l-4 .5l-4 .6l-4 .6l-4 .6l-4 .7l-4 .6l-4 .6l-2 .3l-2 .5l-4 1.1l-4 1l-4 1.1l-2 .5l-2 .8l-4 1.5l-4 1.5l-4 1.5l-2 .7l-2 .9l-4 1.7l-4 1.8l-4 1.7l-2 .9l-2 .8l-3 1.2l-1 .5l-4 2l-1 .5l-3 2.4l-2 1.6l-2 2l-1 1l-2 3.2l-1 0l-4 0l-4 0l-4 0l-4 0l-4 0l-4 0l-4 0l-4 0l-4 0l-4 0l-4 0l-4 0l-4 0l-4 0l-4 0l-4 0l-4 0l-4 0l-4 0l-4 0l-4 0l-4 0l-4 0l-4 0l-4 0l-4 0l-4 0l-4 0l-4 0l-4 0l-4 0l-4 0l-4 0l-4 0l-4 0l-4 0l-4 0l-4 0l-4 0l-4 0l-4 0l-4 0l-4 0l-4 0l-4 0l-4 0l-4 0l-4 0l-4 0l-4 0l-4 0l-4 0l-4 0l-4 0l-4 0l-4 0l-4 0l-4 0l-4 0l-4 0l-4 0l-4 0l-4 0l-4 0l-4 0l-4 0l-4 0l-4 0l-4 0l-4 0l-4 0l-4 0l-4 0l-4 0l-4 0l-4 0l-4 0l-4 0l-4 0l-4 0l-4 0l-4 0l-4 0l-4 0l-4 0l-4 0l-4 0l-4 0l-4 0l-4 0l-4 0l-4 0l-4 0l-4 0l-4 0l-4 0l-4 0l-4 0l-4 0l-4 0l-4 0l-4 0l-4 0l-4 0l-4 0l-4 0l-4 0l-4 0l-4 0l-4 0l-4 0l-4 0l-4 0l-4 0l-4 0l-4 0l-4 0l-4 0l-4 0l-4 0l-4 0l-4 0l-4 0l-4 0l-4 0l-4 0l-4 0l-4 0l-4 0l-4 0l-4 0l-4 0l-4 0l-4 0l-4 0l-4 0l-4 0l-4 0l-4 0l-4 0l-4 0l-4 0l-4 0l-4 0l-4 0l-4 0l-4 0l-4 0l-4 0l-4 0l-4 0l-4 0l-4 0l-4 0l-4 0l-4 0l-4 0l-4 0l-4 0l-4 0l-4 0l-4 0l-4 0l-4 0l-4 0l-4 0l-4 0l-4 0z" fill="#f6a625"/><path d="M754 383.6l.3 0l.5 14.8l.7 23.6l.1 1.5l1.4 10.1l1.5 2l1.5 1.1l1.5 .6l1.5 .6l1.5 .3l.5 0l1 .2l1.5 .1l1.5 .1l1 0l.5 .2l1.5-.2l1.5 .2l1.5 .2l1 0l.5 .2l1.5-.2l1.5 .2l1.5 .2l1.5 .3l1.5 .1l1 .2l.5 .2l1.5 .2l1.5 .6l1.5 .6l1.5 .3l1.5 .7l1.5 .4l.5-.2l1 .2l1.5 .3l1.5 .5l1.5 .7l1.5 .8l1.5 .3l1.5 .3l1.5 .5l1.5 .6l1 .2l.5 .3l1.5 .3l1.5 .3l1.5-.3l1.5 .4l1.5 .4l1.5 0l1.5 .3l1.5 0l1.5-.3l1.5 .1l1.5 .1l1.5 .2l1.5-.2l1-.2l.5 .4l1.5 .3l1.5 .1l1.5 .1l1.5-.7l1.5 .4l1.5-.2l1.5 .6l1.5 0l1.5-.3l1.5-.1l1.5 .4l1.5 .2l1.5-.6l1.5 .5l1.5-.2l1.5 .5l1.5-.3l1.5 0l1.5 .2l1 .4l.5-.2l1.5 .6l1.5-.1l1.5 0l1.5-.3l1.5 .6l1.5-.5l1.5 0l1.5-.1l1.5 .4l1.5 .1l1.5 0l1.5-.4l1.5-.1l1.5 .3l1.5 .3l1.5 .2l1.5-.3l1.5 0l1.5 .7l1.5-.1l1.5-.4l1.5 .1l1.5 .4l1.5 0l1.5-.2l1.5-.2l1.5 .2l1.5-.7l1.5 .2l1.5-.2l.5 .5l1-.5l1.5 .3l1.5 .5l1.5-.4l1.5 .4l1.5-.1l1.5 .7l1.5 0l1.5-.5l1.5 .3l1.5-.1l1.5 .2l1.5-.6l1.5 .3l1.5-.3l1.5 .6l1.5-.3l1.5 .3l1.5-.7l1.5 .3l1.5 .3l1.5 0l1.5-.4l1.5 .4l1.5 0l1.5-.2l1.5-.1l1.5-.1l1.5-.1l1.5 .2l1.5-.2l1.5 .4l1.5-.2l1.5-.5l1.5 .5l1.5 0l.5 0l1-.2l1.5 .5l1.5 .1l1.5-.3l1.5 .4l1.5-.4l1.5 0l1.5 .2l1.5-.1l1.5 .3l1.5 .3l1.5-.5l1.5 0l1.5-.3l1.5 .4l1.5-.1l1.5-.6l1.5 .5l1.5-.2l1.5-.6l1.5 .6l1.5 .1l1.5-.6l1.5 .1l1.5 0l1.5 .6l1.5-.4l1.5 .4l1.5-.3l1.5-.6l1.5 .7l1.5-.3l1.5-.8l1.5 0l1.5 .5l1.5-.2l1.5 .1l1.5 .3l1.5-.4l1.5 .8l1.5-.7l1.5 .9l1.5-.7l1.5 .3l1.5 .4l1.5-.1l1.5 .3l1.5-.2l1.5 .6l1.5-.4l1.5-.4l1.5-.1l1.5 .6l1.5 0l1.5-.7l1.5 .6l1.5 .2l1.5-.6l1.5 .2l1.5-.3l1.5 .2l1.5 0l1.5 0l1.5 .1l1.5-.5l1.5 .2l1.5-.1l1.5 0l1.5 .6l1.5-.6l1.5 0l1.5 .4l1.5 0l1.5 .5l1.5-.6l1.5 .7l1.5-.3l1.5 .5l1.5 .1l1.5-.4l1.5 .1l1.5-.2l1.5-.2l1.5-.3l1.5 .8l1.5-.7l1.5 0l1.5-.1l1.5 .2l1.5 0l1.5-.3l1.5 .4l1.5 0l1.5-.2l1.5 .6l1.5-.5l1.5 .3l1.5-.1l1.5 .1l1.5-.2l1.5-.1l1.5-.3l1.5-.1l1.5-.3l1.5 .3l1.5-.5l1.5 .5l1.5-.5l1.5 .2l1.5-.1l1.5 .5l1.5-.6l1.5 .4l1.5 .9l1.5-.3l1.5-.3l1.5 1.2l1.5-.1l1.5-.5l1.5 .8l1.5-.8l1.5 .2l1.5-.2l1.5 .1l1.5-.5l1.5 .5l1.5-.3l1.5 .5l1.5-.5l1.5 .3l1.5-.5l1.5 .1l1.5 1l1.5 .2l1.5 0l1.5 0l1.5-.6l1.5 .1l1.5 0l1.5 0l1.5 .5l1.5-.5l1.5-.6l1.5 .1l1.5 .3l1.5 .4l1.5-.8l1.5 .5l1.5-.2l1.5 .4l1.5-.2l1.5-.1l1.5-.1l1.5 .3l1.5-.9l1.5 .5l1.5-.7l1.5 0l1.5-.1l1.5 .5l1.5 .1l1.5-.4l1.5 .5l1.5 .4l1.5-.7l1.5 1.1l1.5-.9l1.5 .7l1.5 0l1.5-.7l1.5 .6l1.5-.5l1.5 .2l1.5-.7l1.5 .2l1.5 .2l1.5 .4l1.5-.3l1.5-.1l1.5 .3l1.5-.2l1.5 .4l1.5-.2l1.5 0l1.5-.1l1.5 .1l1.5 .1l1.5 .4l1.5 0l1.5-.4l1.5 .6l1.5-.4l1.5-.4l1.5 .1l1.5 .3l1.5 .1l1.5-.4l1.5-.2l1.5 .1l1.5 .2l1.5-.1l1.5 .4l1.5-.1l1.5 .2l1.5-.4l1.5-.3l1.5 .9l1.5 .1l1.5-.8l1.5 .4l1.5-.2l1.5 .4l1.5-.1l1.5-.6l1.5 .2l1.5-.3l1.5-.1l1.5 .7l1.5-.4l1.5 .2l1.5-.2l1.5 .1l1.5-.7l1 .5l.5 .6l1.5-.5l1.5-.3l1.5 .2l1.5 .4l1.5 .6l1.5-1l1.5-.2l1.5 .2l1.5 .3l1.5 .1l1.5-.3l1.5 .8l1.5-.6l1.5 .5l1.5 .6l1.5-.6l1.5 .6l1.5 .4l1.5 .1l1.5-.7l1.5 .7l1.5-.6l1.5 0l1.5 .6l1.5-.4l1.5-.5l1.5 .3l1.5-.5l1.5 .5l1.5-.3l1.5 .4l1.5-.6l1.5 0l1.5 .3l1.5 .2l1.5 0l1.5-.3l1.5 .5l1.5-.4l1.5 .2l1.5 0l1.5 .1l1.5-.4l1.5 .7l1.5 0l1.5 .2l1.5 .2l1.5-.4l1.5-.4l1.5-.1l1.5 .3l1.5 .1l1.5-.5l1.5 .4l1.5 0l1.5 0l1.5 .6l1.5-.6l1.5 .8l1.5-.3l1.5-.3l1.5 .4l1.5 .2l1.5-.4l1.5-.3l1.5 .2l1.5 .4l1.5-.9l1.5 .8l1-.8l.5-.3l1.5 .7l1.5-.4l1.5-.1l1.5 .6l1.5 0l1.5 .3l1.5-.1l1.5 .1l1.5-.2l1.5-.7l1.5-.1l1.5-.3l1.5-.2l1.5-.3l1.5 .6l1.5-.6l1.5 .7l1.5-.5l1.5-.4l1.5 .6l1.5 .4l1.5 .1l1.5 0l1.5-.6l1.5 0l1.5 .3l1.5-.3l1.5 .3l1.5 .5l1.5-.2l1.5-.3l1.5 0l1.5 .1l1.5 .2l1.5 .5l1.5-.8l1.5 .8l1.5-.6l1.5 .9l1.5-.7l1.5 .6l1.5-.3l1.5 .8l1.5-.4l1.5 .2l1.5-.4l1.5 .1l1.5 .2l1.5-.3l1.5-.3l1.5 .9l1.5-.5l1.5-.2l1.5-.1l1.5 .2l1.5-.7l1.5 .5l1.5-.7l1.5 .4l1.5 .3l1.5-.5l1.5 .8l1.5-.5l1.5 .3l1.5-.1l1.5 .1l1.5 .4l1.5 .2l1.2 9.8l.3 1.1l1.5 3.6l.5 .8l1 .7l1.5 .8l1.5 .3l1.5-.2l1.5-.1l1.5-.3l.5 .1l1-.5l1.5-.9l1.5-1.4l1.5-1.2l1.5-1.8l1-1l.5-.4l1.5-1.3l1.5-1.7l1.5-1.6l1.5-1.7l1.5-1.8l1.5-2l.5-.6l1-1.2l1.5-1.9l1.5-1.9l1.5-2.2l1.5-1.8l1.5-1.8l1.5-2.1l1.5-1.6l1.5-2l1.5-1.7l1.5-1.6l1.5-1.7l1.5-1.6l1-.9l.5-.4l1.5-1.2l1.5-1.3l1.5-1.2l1.5-.8l.5-.3l1-.5l1.5-.6l1.5-.5l1.5-.6l1.5 0l1.5 0l1.5 .3l1.5 .3l1.5 .1l1.5 .2l.5 .4l1 0l1.5 .4l1.5 .7l1.5 .7l1.5 .9l1.5 .8l1.5 .6l1 .5l.5 .1l1.5 .5l1.5 .9l1.5 .5l1.5 .8l1.5 .8l1.5 .5l1.5 .8l1 .5l.5 .2l1.5 .5l1.5 .8l1.5 .9l1.5 .5l1.5 .9l1.5 .6l1.5 .5l1.5 .2l1.5 .7l1.5 0l1.5 .3l1.5 .3l1.5 0l1.5 .1l1.5 .1l1.5 .4l1.5-.3l1.5 .1l1.5-.2l1.5 0l1.5 .1l1.5-.3l1.5-.1l1.5 0l1.5-.2l1.5 0l1.5 0l1-.4l.5 .2l1.5-.1l1.5-.1l1.5-.4l1.5-.2l1.5-.1l1.5-.3l1.5 0l1.5-.2l1.5-.1l1.5-.2l1.5-.2l1.5 0l1.5 0l1.5-.4l.5 .1l1-.1l1.5-.1l1.5-.2l1.5-.4l1.5-.2l1.5-.3l1.5 .1l1.5-.5l1.5 .2l1.5-.2l1.5 0l1.5-.3l1.5 0l1.5 0l1.5-.3l1.5 .1l1.5-.1l1 0l.5 .2l1.5-.2l1.5 .1l1.5-.1l1.5-.1l1.5 0l1.5 .1l1.5 0l1.5-.3l1.5 0l1.5 0l1.5 .2l1.5-.2l1.5 .1l1.5 .2l1.5 0l1.5-.1l1.5-.2l1.5 .2l1.5 .1l1.5-.2l1.5 .2l1.5-.1l1.5 .1l1.5 .2l1.5-.1l1.5 0l1.5-.1l1.5 .1l1.5 .2l1.5-.2l1.5 .2l1.5-.1l1.5 0l1.5 .1l1.5 .2l1.5-.1l1.5 .2l1.5-.1l1.5 .4l1.5-.3l1.5 0l1.5 .1l1.5 .2l1.5-.3l1.5 .1l1.5 .1l1.5-.1l1-.1l.5 .3l1.5-.2l1.5 0l1.5-.1l1.5 .4l1.5-.2l1.5-.1l1.5 .1l1.5-.1l1.5 .1l1.5 0l1.5 0l1.5 .2l1.5-.3l1.5 .2l1.5 .2l1.5-.3l1.5 0l1.5 .1l1.5 .2l1.5-.2l1.5 .2l1.5-.2l1.5 .3l1.5 0l1.5 .1l1.5 0l1.5-.1l1.5-.2l1.5 .1l1.5 .1l1.5-.2l1.5 .1l1.5 0l1.5 .3l1.5 0l1.5-.2l1.5 .3l1.5-.3l1.5 0l1.5 0l1.5 .1l1.5 .1l1.5 0l1.5 .1l1.5-.1l1.5-.1l1.5 .1l1.5-.3l1.5 0l1.5 .2l1.5-.1l1.5-.1l1.5 .1l1.5 .1l1.5-.2l1.5 .2l1.5-.1l1.5 0l1.5 .2l1.5-.2l1.5 .1l1.5-.1l1.5 .1l1.5-.2l1.5 .1l1.5-.2l1.5 .3l1.5-.1l1.5-.1l1.5 .1l1.5 .1l1.5 0l1.5 .1l1.5-.3l1.5 0l1.5 .1l1.5 0l1-.2l0 3.6l-1 .3l-1.5-.4l-1.5 .1l-1.5 0l-1.5 0l-1.5-.2l-1.5 0l-1.5 .2l-1.5-.2l-1.5 .1l-1.5 0l-1.5 .1l-1.5-.3l-1.5 .2l-1.5-.1l-1.5 .2l-1.5 0l-1.5-.1l-1.5 .3l-1.5-.3l-1.5 .3l-1.5-.2l-1.5 .2l-1.5-.1l-1.5-.2l-1.5-.1l-1.5 .1l-1.5 .2l-1.5-.3l-1.5 .2l-1.5-.1l-1.5 0l-1.5 .1l-1.5 0l-1.5 0l-1.5 .1l-1.5 .2l-1.5-.1l-1.5-.2l-1.5 .1l-1.5 0l-1.5-.2l-1.5 .3l-1.5-.2l-1.5 0l-1.5-.1l-1.5 .1l-1.5 .1l-1.5 0l-1.5-.2l-1.5-.2l-1.5 .3l-1.5-.2l-1.5 .2l-1.5 0l-1.5 0l-1.5-.2l-1.5 .3l-1.5-.3l-1.5 .4l-1.5-.3l-1.5-.1l-1.5-.1l-1.5-.1l-1.5 .2l-1.5-.2l-1.5 0l-1.5-.1l-1.5 0l-1.5-.1l-1.5 .1l-1.5-.1l-1.5 0l-1.5 0l-1.5 .1l-1.5-.1l-1.5 0l-1.5-.1l-.5 .2l-1-.2l-1.5-.1l-1.5 .1l-1.5 0l-1.5 0l-1.5-.2l-1.5-.1l-1.5 .1l-1.5 .1l-1.5-.2l-1.5 .1l-1.5 .1l-1.5-.1l-1.5 0l-1.5-.1l-1.5-.1l-1.5 0l-1.5-.2l-1.5 .2l-1.5-.1l-1.5-.2l-1.5 .2l-1.5-.2l-1.5 .1l-1.5-.1l-1.5 .2l-1.5-.1l-1.5 0l-1.5-.2l-1.5 0l-1.5 .3l-1.5 0l-1.5 0l-1.5 .1l-1.5 0l-1.5-.2l-1.5-.2l-1.5 .2l-1.5 0l-1.5 .1l-1.5-.2l-1.5-.1l-1.5 .2l-1.5-.1l-1.5 0l-1.5 .3l-1.5 .1l-1.5-.3l-.5 0l-1 .3l-1.5-.3l-1.5 .2l-1.5 .2l-1.5 0l-1.5 .2l-1.5 0l-1.5 .3l-1.5 .1l-1.5 .2l-1.5-.1l-1.5 .4l-1.5-.2l-1.5 .3l-1.5 0l-1.5 .1l-1.5 .3l-1-.1l-.5 .2l-1.5 0l-1.5 .1l-1.5 .3l-1.5 .1l-1.5 0l-1.5 .3l-1.5 0l-1.5 .2l-1.5 .3l-1.5 .2l-1.5 .3l-1.5-.1l-1.5 .4l-1.5 .2l-.5-.2l-1 0l-1.5 .4l-1.5 .2l-1.5-.2l-1.5 .1l-1.5 .1l-1.5 .1l-1.5 .1l-1.5 0l-1.5 .2l-1.5-.2l-1.5-.1l-1.5 .1l-1.5-.2l-1.5 .2l-1.5-.2l-1.5-.4l-1.5-.1l-1.5 0l-1.5-.6l-1.5-.4l-1.5-.5l-1.5-.7l-1.5-.8l-1.5-.5l-1.5-.9l-1.5-.8l-1.5-.7l-.5 .1l-1-.6l-1.5-.8l-1.5-.5l-1.5-.8l-1.5-.8l-1.5-.8l-1.5-.4l-1.5-.8l-.5-.3l-1-.5l-1.5-.8l-1.5-.6l-1.5-.7l-1.5-.7l-1.5-.7l-1.5-.5l-1 0l-.5 0l-1.5-.5l-1.5 .1l-1.5-.5l-1.5-.1l-1.5-.1l-1.5 .2l-1.5 .5l-1.5 .9l-1.5 .5l-1 .7l-.5 .1l-1.5 .9l-1.5 .9l-1.5 1.5l-1.5 1l-.5 .7l-1 .8l-1.5 1.2l-1.5 1.7l-1.5 1.8l-1.5 1.8l-1.5 1.6l-1.5 1.7l-1.5 1.9l-1.5 2.1l-1.5 2l-1.5 1.8l-1.5 2.1l-1.5 1.8l-1 1.6l-.5 .3l-1.5 1.7l-1.5 2l-1.5 1.8l-1.5 1.7l-1.5 1.6l-1.5 1.2l-.5 .7l-1 .7l-1.5 1.8l-1.5 1.3l-1.5 1.3l-1.5 1.1l-1 .2l-.5 .1l-1.5 .2l-1.5 .4l-1.5-.1l-1.5 0l-1.5-1.1l-1-.5l-.5-.9l-1.5-3.8l-.3-1.1l-1.2-4.8l-1.5 .2l-1.5-.5l-1.5 .4l-1.5 .1l-1.5-.3l-1.5 .4l-1.5-.6l-1.5 0l-1.5-.3l-1.5 .6l-1.5 0l-1.5-.4l-1.5-.1l-1.5 .9l-1.5-.1l-1.5 .1l-1.5 0l-1.5-.3l-1.5 .2l-1.5 0l-1.5-.8l-1.5 .6l-1.5 .2l-1.5-.7l-1.5 .3l-1.5-.1l-1.5 .4l-1.5-.3l-1.5-.3l-1.5 .5l-1.5-.2l-1.5 .4l-1.5-.4l-1.5 .7l-1.5-.6l-1.5 .2l-1.5 .2l-1.5 .4l-1.5 .1l-1.5-.6l-1.5-.2l-1.5 .9l-1.5-.4l-1.5 .4l-1.5-.2l-1.5-.5l-1.5 .9l-1.5-.8l-1.5 .7l-1.5 .5l-1.5-.6l-1.5 0l-1.5 .4l-1.5-.9l-1.5 .7l-1.5-1.3l-1.5-.1l-1.5 .1l-1.5 .4l-1.5-.1l-1.5-.1l-1.5-.2l-1.5 .5l-1.5-.4l-1.5 .5l-1.5-.4l-1.5 .3l-1.5-.3l-.5 .3l-1-.2l-1.5-.4l-1.5 .1l-1.5-.5l-1.5-.2l-1.5 .3l-1.5 .1l-1.5-.2l-1.5 .4l-1.5-.7l-1.5-.1l-1.5 .7l-1.5-.5l-1.5 .4l-1.5-.1l-1.5 .2l-1.5-.4l-1.5 0l-1.5 .3l-1.5 .6l-1.5-.4l-1.5 .7l-1.5-.8l-1.5 .7l-1.5-.7l-1.5 .1l-1.5-.1l-1.5-.7l-1.5-.1l-1.5 .1l-1.5 .3l-1.5 .2l-1.5-.4l-1.5 .3l-1.5-.4l-1.5 .5l-1.5 .2l-1.5-.5l-1.5-.1l-1.5-.2l-1.5 .7l-1.5-.3l-1.5-.7l-1.5 .6l-1.5 .3l-1.5 .1l-1.5 0l-1.5 .1l-1.5-.6l-1.5 .2l-1.5 .5l-1.5-.1l-1.5-.1l-1.5-.8l-1.5 .6l-1.5-.4l-1.5 .2l-1.5 .6l-1.5-.7l-1.5 .7l-1.5-.4l-1.5 .8l-1.5 .1l-1.5-.4l-1.5-.3l-1.5 .5l-1.5-.6l-1.5 .8l-1.5-.5l-1.5 .1l-.5-.4l-1-.3l-1.5 .6l-1.5 .1l-1.5-1.1l-1.5 .9l-1.5-1.1l-1.5 .4l-1.5 .5l-1.5-.1l-1.5-.1l-1.5 .2l-1.5-.4l-1.5 .2l-1.5-.3l-1.5 .6l-1.5-.3l-1.5 0l-1.5-.1l-1.5 .3l-1.5-.6l-1.5 .5l-1.5-.1l-1.5-.9l-1.5 .7l-1.5-.5l-1.5-.2l-1.5 .2l-1.5-.3l-1.5 .1l-1.5 .4l-1.5 .1l-1.5 0l-1.5-.2l-1.5 0l-1.5 .5l-1.5-.1l-1.5-.3l-1.5 0l-1.5-.1l-1.5 .1l-1.5 .2l-1.5-.4l-1.5 .4l-1.5 .2l-1.5-.3l-1.5 .2l-1.5-.4l-1.5 .8l-1.5-.1l-1.5-.6l-1.5 .5l-1.5-.3l-1.5-.5l-1.5 .4l-1.5-.7l-1.5 .4l-1.5-.1l-1.5 .1l-1.5 0l-1.5-.2l-1.5 .8l-1.5 .2l-1.5-.3l-1.5 0l-1.5 .8l-1.5-.7l-1.5 .9l-1.5-.8l-1.5 .5l-1.5-.2l-1.5-.6l-1.5 .4l-1.5-.6l-1.5 0l-1.5-.3l-1.5 .1l-1.5 .4l-1.5-1l-1.5 0l-1.5 .4l-1.5 .7l-1.5-.3l-1.5 .1l-1.5 .2l-1.5-.3l-1.5 .7l-1.5-.7l-1.5 0l-1.5 .7l-1.5-.4l-1.5 0l-1.5-.1l-1.5 0l-1.5 0l-1.5-.2l-1.5 .4l-1.5 .1l-1.5-.2l-1.5-.7l-1.5-.1l-1.5 0l-1.5 .6l-1.5-.7l-1.5-.1l-1.5 .4l-1.5 .3l-1.5-.3l-1.5 .3l-1.5 0l-1.5 .7l-1.5 .2l-1.5-.8l-1.5 0l-1.5 .9l-1.5-.8l-1.5 .3l-1.5 .6l-1.5-.9l-1.5 .6l-1.5 .4l-1.5-.7l-1.5-.7l-1.5-.2l-1.5-.3l-1.5 .4l-1.5-.4l-1.5-.5l-1.5-.2l-1.5 .1l-1.5 .4l-1.5 0l-1.5 .8l-1.5-.6l-1.5 .4l-1.5-.2l-1.5 .4l-1.5-.8l-1.5-.1l-1.5 .2l-1.5 .1l-1.5 .3l-1.5 .3l-1.5-.6l-1.5 0l-1.5 .3l-1.5 0l-1.5 .1l-1.5-.2l-1.5-.4l-1.5-.3l-1.5 .7l-1.5 0l-1.5-.5l-1.5 .1l-1.5 .1l-1.5 .5l-1.5-.2l-1.5 .4l-1.5 0l-1.5-.7l-1.5 .3l-1.5-.3l-1.5 0l-1.5 .6l-1.5-.7l-1.5 .2l-1.5-.2l-1.5-.2l-1.5 .3l-1.5-.5l-1.5 .6l-1.5 0l-1.5-.2l-1.5 .4l-1.5-.5l-1.5 .5l-1.5-.3l-1.5 .1l-1.5 .1l-1.5 .7l-1.5-.7l-1.5 .8l-1.5 .1l-1.5-.1l-1.5 .4l-1.5 .1l-1.5-.2l-1.5-.5l-1.5 .9l-1.5-1.2l-1.5 .4l-1.5 .2l-1.5-.6l-1.5-.5l-1.5-.2l-1.5-.3l-1.5 .6l-1.5 0l-1.5-.8l-1.5-.2l-1.5 .3l-1.5 .1l-1.5-.4l-1.5 0l-1.5 .3l-1.5-.8l-1.5 .2l-1.5 .1l-1.5 0l-1.5-.4l-1.5-.1l-1.5 .1l-1.5 .6l-1.5-.4l-1.5 .2l-1.5 .8l-1.5-.1l-1.5-.2l-1.5 .6l-1.5-.3l-1.5-.1l-1.5-.4l-1.5 .2l-1-.5l-.5 .5l-1.5-.3l-1.5-.1l-1.5-.1l-1.5-.4l-1.5 .2l-1.5-.6l-1.5 .3l-1.5 0l-1.5 .1l-1.5 0l-1.5-.1l-1.5-.3l-1.5-.1l-1.5-.1l-1.5 .3l-1.5-.1l-1.5 .6l-1.5-.1l-1.5-.1l-1.5-.4l-1.5 0l-1.5 .1l-1.5 0l-1.5-.3l-1.5 0l-1.5-.4l-1.5-.5l-1.5 .1l-1.5 .6l-1.5 0l-1.5-.2l-1.5-.2l-1.5 .3l-1.5-.1l-1.5 .1l-1 .2l-.5-.2l-1.5 .4l-1.5-.5l-1.5 .3l-1.5-.4l-1.5 .2l-1.5-.1l-1.5-.8l-1.5 0l-1.5-.2l-1.5 .1l-1.5 .2l-1.5-.1l-1.5 .3l-1.5-.3l-1.5 0l-1.5 .3l-1.5-.2l-1.5 .4l-1.5 .2l-1.5-.1l-1.5 .2l-1.5-.5l-1.5 0l-1.5 0l-1.5-.2l-1.5-.2l-1.5 .4l-1.5-.1l-1.5-.2l-1.5-.3l-.5 .4l-1-.2l-1.5-.1l-1.5-.1l-1.5-.2l-1.5 .4l-1.5-.1l-1.5 0l-1.5-.6l-1.5-.1l-1.5 .2l-1.5 .2l-1.5 0l-1.5-.6l-1.5 .1l-1.5 0l-1.5 0l-1.5-.3l-1.5-.3l-1.5 .2l-1.5-.1l-.5-.5l-1-.1l-1.5-.1l-1.5-.5l-1.5 .3l-1.5-.4l-1.5-.1l-1.5-.2l-1.5-.1l-1.5-.1l-1.5-.5l-1.5-.4l-1.5 .1l-1.5-.6l-1.5-.2l-.5-.2l-1 0l-1.5-.5l-1.5-.6l-1.5-.6l-1.5-.5l-1.5-.6l-1.5-.5l-1.5-.7l-1.5-.5l-1-.5l-.5-.1l-1.5-.3l-1.5-.6l-1.5-.7l-1.5-.6l-1.5-.3l-1.5-.3l-.5-.2l-1-.3l-1.5-.3l-1.5-.4l-1.5-.5l-1.5-.1l-1.5-.2l-.5-.2l-1-.2l-1.5-.2l-1.5-.1l-1.5-.1l-.5-.1l-1 .1l-1.5-.2l-1.5-.1l-1-.1l-.5-.4l-1.5-.2l-1.5-.5l-1.5-.5l-1.5-.9l-1.5-2.1l-1.4-10l-.1-1.6l-.7-23.3l-.5-15l-.3 0z" fill="#0000ff"/><path d="M754 385l.3 0l.5 15l.8 25l1.4 10l1 1.5l2 1.5l2 .8l3 .7l1 .1l4 .4l4 .3l2 .2l2 .2l4 .7l3 .6l1 .2l4 1.2l4 1.3l1 .3l3 1.1l4 1.5l4 1.4l3 .7l1 .2l4 .6l4 .5l4 .4l4 .3l4 .3l4 .3l4 .2l4 .2l4 .2l4 .2l4 .2l4 .1l2 .1l2 .1l4 .1l4 .1l4 .1l4 .1l4 .1l4 .1l4 .1l4 .1l4 0l4 .1l4 .1l4 .1l4 .1l4 0l4 .1l4 .1l4 0l4 .1l4 .1l4 0l4 .1l4 .1l4 0l4 .1l2 0l2 0l4 .1l4 0l4 .1l4 0l4 .1l4 0l4 0l4 .1l4 0l4 .1l4 0l4 0l4 .1l4 0l4 0l4 .1l4 0l3 0l1 0l4 0l4 0l4 .1l4 0l4 0l4 0l4 0l4 0l4 .1l4 0l4 0l4 0l4 0l4 0l4 0l4 0l4 .1l4 0l4 0l4 0l4 0l4 0l4 0l4 0l4 0l4 .1l4 0l4 0l4 0l4 0l4 0l4 0l4 .1l4 0l4 0l4 0l4 0l4 0l4 0l4 .1l4 0l4 0l4 0l4 0l4 0l4 .1l4 0l4 0l4 0l4 0l4 0l4 0l4 .1l4 0l4 0l4 0l4 0l4 .1l4 0l4 0l4 0l4 0l4 .1l4 0l4 0l1 0l3 0l4 0l4 .1l4 0l4 0l4 .1l4 0l4 0l4 0l4 .1l4 0l4 0l4 .1l4 0l4 0l4 .1l4 0l4 .1l4 0l4 0l4 0l4 .1l4 0l4 0l4 .1l4 0l2 0l2 0l4 0l4 0l4 .1l4 0l4 0l4 0l4 0l4 0l4 0l4 0l4 0l4 0l4 0l4 .1l4 0l4 0l4 0l4 0l4 0l4 .1l4 0l4 0l4 .1l4 0l4 .1l.5 0l1.2 7.5l2.3 5.5l4 1.8l4-.6l1-.2l3-1.7l4-3.8l1-1l3-3l4-4.5l3-3.5l1-1.2l4-5.3l4-5.3l1-1.2l3-3.6l4-4.5l3-2.9l1-.8l4-3.1l2-1.1l2-1l4-1.4l1-.1l3 .1l4 .5l1 .2l3 .8l4 1.9l4 2l4 1.8l4 1.9l4 1.8l4 1.9l4 1.9l4 1.6l2 .4l2 .3l4 .5l4 .4l2 0l2 0l4-.2l4-.3l4-.3l2-.2l2-.2l4-.4l4-.4l4-.5l4-.4l4-.4l4-.4l4-.4l4-.4l4-.3l4-.3l4-.2l2 0l2 0l4-.1l4 0l4 0l4-.1l4 0l4 0l4 0l2 0l2 0l4 .1l4 0l4 .2l4 .1l4 .1l4 .2l4 .1l4 .1l4 .1l2 0l2 0l4 0l4 .1l4 0l4 0l4 .1l4 0l4 0l4 0l4 .1l4 0l4 0l4 0l4 .1l4 0l4 0l4 0l4 0l4 0l4 0l4 .1l4 0l4 0l4 0l4 0l4 0l4 0l4 0l4 0l3 0" fill="none" stroke="#0000ff" stroke-width="3.2" stroke-linejoin="round"/><path d="M754.3 385V436" stroke="#0000ff" stroke-width="2" fill="none"/><path d="M754 439.5l.3 48.1l.9-47.3l.3 .3l1.5 5.7l1 4.3l.5 1.5l1.5 4.3l1.5 4l1.5 4l1.5 4l1.5 3.9l1.5 3.8l.5 1.2l1 2.8l1.5 4.1l1.5 2.1l1.5-.2l1.5-.3l1.5-.1l1.5-.1l1.5-.2l1.5 0l1.5 .2l1.5 0l1.5 .1l1.5 0l1.5-.2l1.5 0l1.5 .1l1.5-.2l1.5 0l1.5-.2l1.5 .1l1.5 0l1.5-.2l1.5-.1l1.5 0l1.5 .1l1.5-.1l1.5-.1l1.5 .1l1.5 .1l1.5-.1l1.5 .1l1.5 .2l1.5 .1l1.5-.2l1.5 0l1.5 .2l1.5-.2l1.5 .1l1.5 0l1.5-.1l1.5-.1l1.5-.2l1.5 .3l1.5-.3l1.5-.1l1.5-.1l1.5-.1l1.5 .1l1.5 0l1.5-.2l1.5 0l1.5-.1l1.5 0l1.5 .1l1.5 .1l1.5 .1l1.5-.3l1.5 .1l1.5 .2l1.5-.1l1.5 .1l1.5 .3l1.5 .1l1.5 .1l1.5-.1l1.5 .2l1.5 0l1.5-.3l1.5 .1l1.5-.1l1.5 .1l1.5-.1l1.5-.2l1.5 .1l1.5 0l1.5 .2l1.5 .2l1.5-.3l1.5 .3l1.5 .1l1.5-.1l1.5-.1l1.5 0l1.5-.1l1.5 0l1.5-.2l1.5-.1l1.5 0l1.5 .2l1.5 0l1.5-.1l1.5 0l1.5 0l1.5-.3l1.5 .2l1.5 0l1.5 0l1.5 .2l1.5-.1l1.5-.2l1.5 0l1.5 .2l1.5 .1l1.5-.4l1.5 .1l1.5-.2l1.5 .2l1.5 0l1.5-.2l1.5 .3l1.5-.3l1.5 .3l1.5-.1l1.5-.2l1.5 .1l1.5 0l1.5 0l1.5 .1l1.5 .2l1.5-.3l1.5 0l1.5 .1l1.5-.1l1.5-.1l1.5-.2l1.5 .1l1.5 .2l1.5-.2l1.5 .2l1.5 .1l1.5-.2l1.5 .2l1.5 .1l1.5 0l1.5-.1l1.5 .2l1.5 .3l1.5-.2l1.5 0l1.5 .1l1.5 .2l1.5-.3l1.5-.2l1.5-.1l1.5 .1l1.5-.2l1.5-.3l1.5 .1l1.5-.1l1.5 .3l1.5-.3l1.5 0l1.5 0l1.5 .2l1.5 .1l1.5-.2l1.5 .2l1.5-.2l1.5 .2l1.5 0l1.5 .1l1.5 0l1.5-.2l1.5 0l1.5-.3l1.5 .1l1.5 .3l1.5-.2l1.5 .2l1.5 0l1.5 .2l1.5 .1l1.5 0l1.5-.2l1.5 .2l1.5 .1l1.5-.2l1.5-.1l1.5 .4l1.5-.3l1.5 .3l1.5-.1l1.5 0l1.5 0l1.5-.2l1.5 .1l1.5 .1l1.5 .1l1.5 0l1.5 0l1.5 0l1.5 0l1.5 .1l1.5-.1l1.5-.2l1.5-.1l1.5 .1l1.5 0l1.5-.1l1.5-.1l1.5-.1l1.5 .2l1.5 0l1.5-.2l1.5 0l1.5-.3l1.5 .2l1.5-.3l1.5 .1l1.5 .2l1.5-.2l1.5 .3l1.5 0l1.5 .1l1.5 .1l1.5 .1l1.5-.2l1.5 .1l1.5 .2l1.5-.1l1.5-.1l1.5 .1l1.5-.1l1.5-.2l1.5-.1l1.5 .1l1.5 0l1.5-.3l1.5 .1l1.5-.3l1.5 .2l1.5-.4l1.5 .3l1.5-.1l1.5-.2l1.5 .2l1.5 .3l1.5-.1l1.5 0l1.5 .3l1.5 0l1.5-.3l1.5 .4l1.5 0l1.5 .1l1.5-.2l1.5-.1l1.5 .3l1.5-.1l1.5-.2l1.5 .1l1.5 .1l1.5-.1l1.5-.1l1.5 .2l1.5 0l1.5-.1l1.5 .1l1.5-.3l1.5 .2l1.5-.1l1.5 .2l1.5 .1l1.5-.1l1.5 .2l1.5-.3l1.5 .2l1.5-.2l1.5 .1l1.5 .1l1.5 .2l1.5 0l1.5-.4l1.5 .3l1.5 0l1.5-.3l1.5-.2l1.5 .3l1.5-.1l1.5 0l1.5-.4l1.5 0l1.5 0l1.5 .1l1.5 0l1.5 .1l1.5 0l1.5-.1l1.5 .1l1.5-.1l1.5-.3l1.5 0l1.5 .3l1.5-.1l1.5-.2l1.5 .3l1.5 .1l1.5 .2l1.5 .1l1.5-.2l1.5 .4l1.5-.4l1.5 0l1.5 .2l1.5 0l1.5-.1l1.5-.2l1.5 .3l1.5 0l1.5-.2l1.5 .4l1.5 .1l1.5 .1l1.5 .1l1.5-.2l1.5 .2l1.5 0l1.5-.1l1.5 0l1.5 .2l1.5 .1l1.5-.2l1.5 0l1.5-.3l1.5-.1l1.5 0l1.5-.1l1.5 .1l1.5-.2l1.5 .1l1.5 0l1.5 0l1.5 .1l1.5-.1l1.5 .3l1.5-.5l1.5-.1l1.5 0l1.5 0l1.5-.1l1.5-.2l1.5 0l1.5 0l1.5-.1l1.5-.2l1.5 .1l1.5-.1l1.5 .1l1.5 .4l1.5-.3l1.5 .4l1.5-.2l1.5 .3l1.5 0l1.5 .3l1.5-.2l1.5 .1l1.5 0l1.5-.3l1.5 0l1.5 0l1.5-.1l1.5 0l1.5-.2l1.5 .2l1.5-.2l1.5 .3l1.5-.1l1.5 .4l1.5 0l1.5 .2l1.5 0l1.5 .1l1.5-.2l1.5 .1l1.5 .1l1.5-.4l1.5 .1l1.5 .1l1.5-.1l1.5-.1l1.5 .3l1.5 0l1.5 0l1.5-.1l1.5 0l1.5 .2l1.5 .2l1.5-.1l1.5 .2l1.5 0l1.5-.2l1.5 .2l1.5-.1l1.5 0l1.5-.1l1.5 .1l1.5-.2l1.5 0l1.5-.2l1.5 .3l1.5-.1l1.5 .2l1.5-.1l1.5 0l1.5-.1l1.5-.1l1.5-.1l1.5 0l1.5-.1l1.5 0l1.5 .2l1.5 0l1.5-.2l1.5 .2l1.5-.1l1.5 .1l1.5-.1l1.5 .3l1.5-.4l1.5 .2l1.5-.2l1.5 .1l1.5-.3l1.5 .2l1.5-.1l1.5-.3l1.5-.1l1.5 .2l1.5-.1l1.5-.1l1.5-.1l1.5 .3l1.5-.2l1.5 .1l1.5 .1l1.5 .1l1.5 0l1.5 .3l1.5 0l1.5-.2l1.5-.1l1.5 .1l1.5-.1l1.5-.2l1.5-.2l1.5 .1l1.5 .1l1.5-.1l1.5 .2l1.5 0l1.5 .3l1.5 .1l1.5-.1l1.5 .3l1.5-.2l1.5 0l1.5-.2l1.5 0l1.5 .2l1.5-.1l1.5-.3l1.5 .1l1.5 0l1.5 .2l1.5 .2l1.5 .1l1.5-.1l1.5 .2l1.5-.1l1.5 0l1.5 .1l1.5 0l1.5-.2l1.5 .1l1.5-.2l1.5 .1l1.5 .2l1.5-.3l1.5-.1l1.5 .2l1.5 0l1.5-.4l1.5 0l1.5 0l1.5 0l1.5-.1l1.5 .3l1.5-.1l1.5 .1l.8-16.6l.7-5.5l1.5-7.1l.5-2.3l1-4.3l1.5-5.9l1.5-4.7l1.5-3.9l1.5-3.6l1.5-3l1.5-2.7l1-1.7l.5-.8l1.5-2.3l1.5-2.3l1.5-2.2l1.5-1.9l1.5-1.6l1-1l.5-.3l1.5-1.2l1.5-.9l1.5-1l1.5-.5l.5-.1l1-.3l1.5-.4l1.5-.2l1 .1l.5-.1l1.5 .2l1.5 .3l1.5 .2l1 .1l.5 .2l1.5 .5l1.5 .5l1.5 .8l1.5 .9l1.5 .8l1.5 1.1l1.5 1.3l1.5 1.3l1.5 1.6l1.5 1.7l.5 .4l1 1.1l1.5 1.9l1.5 2l1.5 1.8l1.5 2.1l1 1l.5 .6l1.5 2l1.5 1.7l1.5 1.9l1.5 1.5l1.5 1.6l1.5 1l1.5 1.3l1.5 .8l1.5 1l1.5 .9l1.5 .6l1.5 .7l.5 .2l1 .1l1.5 .5l1.5 .5l1.5 .5l1.5 .2l1.5 .2l1.5 .4l1-.2l.5 .1l1.5 0l1.5-.1l1.5-.1l1.5-.2l1.5-.1l1.5-.4l.5 .1l1-.3l1.5-.3l1.5-.5l1.5-.5l1.5-.6l1.5-.6l1.5-.6l1.5-.6l.5-.1l1-.4l1.5-.4l1.5-.6l1.5-.5l1.5-.6l1.5-.5l1.5-.5l1.5-.5l1.5-.3l1-.3l.5-.3l1.5-.3l1.5-.3l1.5-.5l1.5-.4l1.5-.4l1.5-.4l1.5-.1l1-.3l.5 0l1.5-.4l1.5-.1l1.5-.3l1.5-.2l1.5-.1l1.5-.2l.5 .1l1 0l1.5-.2l1.5-.1l1.5 .1l1.5 0l1-.1l.5 .1l1.5 0l1.5 .2l1.5-.1l1.5 .2l1.5 .2l1.5 .1l1.5 0l1 .1l.5 0l1.5 .3l1.5 .1l1.5 .2l1.5 .2l1.5 .1l1.5 .1l1.5 .3l1.5 .1l1.5 .1l1.5 .2l1.5 .1l1.5 0l1.5 .1l1.5 .2l1.5 .1l1.5 .1l1.5 .1l1.5 0l1.5 0l1.5 .2l1.5 0l1.5 .1l.5 .1l1-.1l1.5 .2l1.5 0l1.5-.1l1.5 0l1.5 .1l1.5 .1l1.5-.1l1.5 .1l1.5 0l1.5 .1l1.5 0l1.5 0l1.5 0l1.5 0l1.5 0l1.5-.1l1.5 .1l1.5 .1l1.5 0l1.5-.1l1.5 .1l1.5 .2l1.5 0l1.5 .1l1.5-.1l1.5 0l1.5-.2l1.5-.1l1.5 0l1.5-.9l1.5-.9l1.5 .1l1.5-.4l1.5 .2l1.5-.2l1.5 0l1.5 .2l1.5 .1l1.5 0l1.5 .1l1.5 .1l1.5-.1l1.5 .1l1.5-.2l1.5 .1l1.5-.2l1.5-.1l1.5 0l1.5-.1l1.5 .2l1.5 .1l1.5 0l1.5 0l1.5-.2l1.5 .2l1.5 0l1.5-.1l1.5 .2l1.5 0l1.5 0l1.5 0l1.5 .1l1.5-.2l1.5 .2l1.5-.2l1.5-.1l1.5 .3l1.5 .2l1.5-.3l1.5 .3l1.5 0l1.5 0l1.5-.1l1.5 0l1.5-.3l1.5-.2l1.5 .2l1.5-.2l1.5-.1l1.5-.1l1.5 .1l1.5-.3l1.5 .1l1.5 .2l1.5-.3l1.5 .2l1.5 0l1.5 0l1.5 .5l1.5-.2l1.5 .2l1.5 .3l1.5 .1l1.5 .1l1.5-.2l1.5 .1l1.5-.1l1.5-.4l1.5 0l1.5-.3l1.5-.1l1.5 .1l1.5-.2l1.5 .4l1.5-.3l1.5 .1l1.5 .2l1.5 .2l1.5 0l1.5 .2l1-.3l0 6.8l-1-.1l-1.5 .2l-1.5-.3l-1.5 0l-1.5 0l-1.5 .2l-1.5 0l-1.5 .1l-1.5-.3l-1.5 .2l-1.5-.1l-1.5 .3l-1.5-.3l-1.5 .1l-1.5 .2l-1.5-.3l-1.5-.2l-1.5 .4l-1.5-.1l-1.5 0l-1.5-.1l-1.5 .1l-1.5 0l-1.5 .1l-1.5 0l-1.5-.1l-1.5-.1l-1.5 .2l-1.5-.2l-1.5 0l-1.5 0l-1.5 .1l-1.5 0l-1.5 .1l-1.5-.4l-1.5 .1l-1.5 .1l-1.5 .1l-1.5-.2l-1.5 0l-1.5 .2l-1.5 0l-1.5-.1l-1.5 .1l-1.5 .1l-1.5 .1l-1.5 0l-1.5-.2l-1.5 .3l-1.5-.1l-1.5 0l-1.5-.1l-1.5 .2l-1.5-.3l-1.5-.1l-1.5-.1l-1.5 .2l-1.5-.3l-1.5 .4l-1.5 0l-1.5 .1l-1.5-.2l-1.5 .4l-1.5-.1l-1.5-.3l-1.5 .1l-1.5 0l-1.5 0l-1.5-.1l-1.5-.4l-1.5-.2l-1.5 0l-1.5 .2l-1.5 .2l-1.5-.1l-1.5 .1l-1.5 .1l-1.5 0l-1.5-.2l-1.5 .1l-1.5-.6l-1.5-.8l-1.5-.3l-1.5 .1l-1.5-.1l-1.5 .1l-1.5 0l-1.5 0l-1.5-.1l-1.5 .2l-1.5-.1l-1.5 0l-1.5 .1l-1.5-.1l-1.5 .1l-1.5 0l-1.5-.1l-1.5 0l-1.5-.1l-1.5 0l-1.5-.1l-1.5 .2l-1.5-.1l-1.5 0l-1.5-.2l-1.5 0l-1.5 .1l-1.5 0l-1.5-.1l-1.5-.1l-1.5 0l-1-.1l-.5 0l-1.5 0l-1.5 0l-1.5-.1l-1.5-.1l-1.5-.1l-1.5-.1l-1.5-.2l-1.5-.1l-1.5-.1l-1.5-.1l-1.5-.2l-1.5 0l-1.5-.1l-1.5 0l-1.5-.2l-1.5-.2l-1.5-.2l-1.5-.1l-1.5-.2l-1.5-.1l-1.5-.1l-1.5-.3l-.5 0l-1 0l-1.5-.2l-1.5-.2l-1.5-.1l-1.5-.1l-1.5-.2l-1.5 0l-1.5-.1l-.5 .1l-1 0l-1.5-.1l-1.5 .1l-1.5 0l-1.5 .1l-1 .1l-.5-.1l-1.5 .2l-1.5 .3l-1.5 .1l-1.5 .3l-1.5 .3l-1.5 .3l-.5 .1l-1 .3l-1.5 .2l-1.5 .3l-1.5 .4l-1.5 .3l-1.5 .5l-1.5 .4l-1.5 .3l-.5 .2l-1 .2l-1.5 .5l-1.5 .4l-1.5 .7l-1.5 .5l-1.5 .4l-1.5 .6l-1.5 .5l-1.5 .5l-1 .5l-.5 .1l-1.5 .5l-1.5 .7l-1.5 .5l-1.5 .6l-1.5 .4l-1.5 .4l-1.5 .4l-1 .2l-.5 0l-1.5 .1l-1.5 .3l-1.5 .3l-1.5 .1l-1.5 0l-1.5 .1l-.5-.1l-1 .1l-1.5-.1l-1.5-.4l-1.5-.3l-1.5-.5l-1.5-.5l-1.5-.4l-1-.3l-.5-.2l-1.5-.5l-1.5-.7l-1.5-1l-1.5-.8l-1.5-1.2l-1.5-1l-1.5-1.1l-1.5-1.4l-1.5-1.6l-1.5-1.6l-1.5-1.9l-1.5-1.9l-.5-.6l-1-1.2l-1.5-1.8l-1.5-1.9l-1.5-2.1l-1.5-1.7l-1-1.3l-.5-.5l-1.5-1.7l-1.5-1.5l-1.5-1.5l-1.5-1.3l-1.5-1.2l-1.5-.9l-1.5-.9l-1.5-.7l-1.5-.5l-1.5-.5l-.5 0l-1-.4l-1.5-.2l-1.5-.1l-1.5-.2l-.5 .2l-1 0l-1.5 .1l-1.5 .3l-1 .5l-.5-.1l-1.5 .7l-1.5 .8l-1.5 1.1l-1.5 1.1l-.5 .4l-1 1l-1.5 1.5l-1.5 2l-1.5 1.9l-1.5 2.4l-1.5 2.3l-.5 .9l-1 1.7l-1.5 2.8l-1.5 3.2l-1.5 3.5l-1.5 3.8l-1.5 4.8l-1.5 5.9l-1 4.4l-.5 2.1l-1.5 7.1l-.7 6.1l-.8 19.1l-1.5 0l-1.5-.2l-1.5 .1l-1.5-.2l-1.5-.1l-1.5-.1l-1.5-.1l-1.5 0l-1.5 0l-1.5 .2l-1.5 .1l-1.5-.2l-1.5 .2l-1.5-.3l-1.5 .1l-1.5 0l-1.5-.1l-1.5 0l-1.5 0l-1.5-.1l-1.5 0l-1.5-.1l-1.5 .4l-1.5 .1l-1.5-.1l-1.5 0l-1.5 .2l-1.5 .1l-1.5 0l-1.5 0l-1.5-.4l-1.5 0l-1.5-.2l-1.5 .2l-1.5-.1l-1.5 0l-1.5 .3l-1.5-.2l-1.5 .1l-1.5 .1l-1.5 .3l-1.5-.1l-1.5 0l-1.5 .3l-1.5-.2l-1.5 .4l-1.5-.1l-1.5 .1l-1.5 .3l-1.5 .2l-1.5-.2l-1.5 .4l-1.5-.2l-1.5 .2l-1.5-.3l-1.5 0l-1.5-.2l-1.5 0l-1.5-.6l-1.5 0l-1.5-.2l-1.5 .1l-1.5-.1l-1.5 0l-1.5-.2l-1.5 .3l-1.5-.2l-1.5 0l-1.5 0l-1.5 .3l-1.5-.3l-1.5 .2l-1.5-.1l-1.5-.1l-1.5 0l-1.5 .2l-1.5-.1l-1.5 .2l-1.5-.1l-1.5-.3l-1.5-.1l-1.5 .1l-1.5 0l-1.5-.1l-1.5 .1l-1.5 .1l-1.5-.2l-1.5 .1l-1.5 .1l-1.5-.2l-1.5 .1l-1.5-.1l-1.5 0l-1.5-.1l-1.5 .3l-1.5 .1l-1.5-.1l-1.5 .1l-1.5-.1l-1.5 .2l-1.5 0l-1.5-.2l-1.5 .2l-1.5 0l-1.5-.1l-1.5-.1l-1.5 .1l-1.5 0l-1.5 .2l-1.5 0l-1.5-.3l-1.5 .1l-1.5-.1l-1.5 .2l-1.5 0l-1.5 0l-1.5-.3l-1.5 .3l-1.5 0l-1.5 0l-1.5 .2l-1.5 .1l-1.5-.3l-1.5 .2l-1.5-.1l-1.5 .2l-1.5 0l-1.5-.3l-1.5 .3l-1.5-.2l-1.5 .1l-1.5-.2l-1.5 .1l-1.5-.1l-1.5-.2l-1.5-.1l-1.5 .3l-1.5-.3l-1.5 .3l-1.5-.4l-1.5 0l-1.5 .3l-1.5-.3l-1.5 .1l-1.5 .2l-1.5 .1l-1.5-.1l-1.5 .1l-1.5-.2l-1.5-.1l-1.5 0l-1.5-.2l-1.5 .3l-1.5-.1l-1.5-.3l-1.5 0l-1.5 .2l-1.5-.1l-1.5 .4l-1.5 .1l-1.5-.3l-1.5 .3l-1.5 0l-1.5 .1l-1.5 0l-1.5 0l-1.5-.2l-1.5 .3l-1.5-.2l-1.5-.1l-1.5 0l-1.5 .1l-1.5-.3l-1.5 0l-1.5 .3l-1.5-.2l-1.5-.1l-1.5-.1l-1.5 .2l-1.5-.2l-1.5 .2l-1.5-.2l-1.5 0l-1.5 0l-1.5 0l-1.5 .2l-1.5 .2l-1.5 .1l-1.5-.2l-1.5 .3l-1.5 .1l-1.5-.1l-1.5 0l-1.5-.1l-1.5 .2l-1.5 0l-1.5-.1l-1.5 0l-1.5-.1l-1.5 .1l-1.5-.1l-1.5 .2l-1.5-.3l-1.5 .3l-1.5-.1l-1.5 0l-1.5-.3l-1.5 0l-1.5 .3l-1.5-.2l-1.5 .1l-1.5 .3l-1.5 0l-1.5-.2l-1.5 .1l-1.5 0l-1.5 .3l-1.5-.4l-1.5 0l-1.5 .1l-1.5 .1l-1.5-.2l-1.5 0l-1.5-.3l-1.5-.1l-1.5 0l-1.5 .3l-1.5-.4l-1.5 .3l-1.5-.2l-1.5 0l-1.5-.1l-1.5 0l-1.5 0l-1.5-.1l-1.5 .2l-1.5-.4l-1.5 .1l-1.5 .1l-1.5 .2l-1.5-.2l-1.5 .1l-1.5 .1l-1.5 0l-1.5 .3l-1.5 .1l-1.5-.1l-1.5-.1l-1.5 .4l-1.5-.2l-1.5 .3l-1.5 .1l-1.5-.2l-1.5 0l-1.5 0l-1.5 .1l-1.5 0l-1.5-.3l-1.5 .2l-1.5-.1l-1.5 .1l-1.5-.1l-1.5 0l-1.5 .1l-1.5 0l-1.5 0l-1.5-.1l-1.5 .2l-1.5-.5l-1.5 .4l-1.5-.3l-1.5-.1l-1.5-.2l-1.5 0l-1.5 0l-1.5-.2l-1.5-.2l-1.5 .2l-1.5 .1l-1.5 0l-1.5 .3l-1.5 .1l-1.5-.1l-1.5 0l-1.5 .3l-1.5-.4l-1.5 .2l-1.5-.3l-1.5-.1l-1.5 .2l-1.5-.1l-1.5-.2l-1.5 .1l-1.5-.1l-1.5 0l-1.5 0l-1.5 .3l-1.5-.2l-1.5 .2l-1.5-.3l-1.5-.1l-1.5 .3l-1.5 0l-1.5-.3l-1.5 .1l-1.5-.1l-1.5 .1l-1.5-.1l-1.5 .2l-1.5-.1l-1.5 0l-1.5 0l-1.5 .4l-1.5-.3l-1.5 .3l-1.5 .1l-1.5 0l-1.5-.1l-1.5 0l-1.5 .3l-1.5-.2l-1.5 .1l-1.5 .1l-1.5-.1l-1.5 .2l-1.5 0l-1.5-.1l-1.5 .2l-1.5 0l-1.5 .1l-1.5 .2l-1.5 .3l-1.5-.2l-1.5 .1l-1.5-.1l-1.5-.4l-1.5 .1l-1.5-.4l-1.5 .2l-1.5-.3l-1.5-.2l-1.5 .1l-1.5-.1l-1.5-.3l-1.5 .3l-1.5-.2l-1.5 0l-1.5-.3l-1.5 .2l-1.5 0l-1.5-.2l-1.5 0l-1.5 .2l-1.5-.1l-1.5 .1l-1.5 .3l-1.5-.2l-1.5 .4l-1.5-.2l-1.5-.1l-1.5 0l-1.5 .2l-1.5-.3l-1.5 .3l-1.5-.1l-1.5 .1l-1.5-.3l-1.5 .1l-1.5 .1l-1.5-.1l-1.5-.2l-1.5 .2l-1.5-.1l-1.5-.2l-1.5 .2l-1.5-.1l-1.5-.2l-1.5 0l-1.5 .2l-1.5 .1l-1.5 .1l-1.5 .1l-1.5-.1l-1.5 0l-1.5 .2l-1.5-.1l-1.5 0l-1.5 0l-1.5 0l-1.5 .2l-1.5 0l-1.5-.2l-1.5-.1l-1.5 .3l-1.5-.1l-1.5 .1l-1.5-.2l-1.5-.3l-1.5 0l-1.5 .2l-1.5-.4l-1.5 .1l-1.5 0l-1.5 .1l-1.5 .1l-1.5 .2l-1.5-.1l-1.5 0l-1.5-.1l-1.5 .2l-1.5 0l-1.5-.3l-1.5-.1l-1.5 0l-1.5 .1l-1.5 .1l-1.5-.3l-1.5 0l-1.5 .3l-1.5 .1l-1.5-.1l-1.5-.1l-1.5 .1l-1.5-.2l-1.5 0l-1.5 0l-1.5-.2l-1.5 0l-1.5 .2l-1.5 .1l-1.5-.1l-1.5 .1l-1.5-.1l-1.5 .1l-1.5 .1l-1.5 .2l-1.5-.2l-1.5-.1l-1.5 .1l-1.5 .1l-1.5-.1l-1.5 0l-1.5 .1l-1.5-.3l-1.5-.1l-1.5 0l-1.5 0l-1.5-.2l-1.5 .2l-1.5-.3l-1.5 .1l-1.5-.1l-1.5-.1l-1.5 .2l-1.5 0l-1.5 .1l-1.5-.1l-1.5 0l-1.5 .2l-1.5 0l-1.5 0l-1.5-.2l-1.5 .2l-1.5-.2l-1.5 0l-1.5 .1l-1.5-.1l-1.5 .1l-1.5 .2l-1.5 0l-1.5 .2l-1.5-.2l-1.5 0l-1.5 .2l-1.5-.3l-1.5 0l-1.5 .1l-1.5-.3l-1.5 .1l-1.5 0l-1.5-.2l-1.5 .1l-1.5-.1l-1.5-.2l-1.5-.3l-1.5-.1l-1.5-.3l-1.5-2l-1.5-4.1l-1-2.8l-.5-1.1l-1.5-3.8l-1.5-4l-1.5-4.1l-1.5-4.1l-1.5-4l-1.5-4.3l-.5-1.6l-1-4.2l-1.5-5.8l-.3-.2l-.9 47.3l-.3-48z" fill="#ff0000"/><path d="M754 441l.3 48l.9-47.3l2.8 10.3l4 11.3l1 2.7l3 8l2 5l2 5.6l2 3.2l2 0l1 0l3 0l4 0l4 0l4 0l4 0l4 0l4 0l4 0l4 0l4 0l4 0l4 0l4 0l4 0l4 0l4 0l4 0l4 0l4 0l4 0l4 0l4 0l4 0l4 0l4 0l4 0l4 0l4 0l4 0l4 0l4 0l4 0l4 0l4 0l4 0l4 0l4 0l4 0l4 0l4 0l4 0l4 0l4 0l4 0l4 0l4 0l4 0l4 0l4 0l4 0l4 0l4 0l4 0l4 0l4 0l4 0l4 0l4 0l4 0l4 0l4 0l4 0l4 0l4 0l4 0l4 0l4 0l4 0l4 0l4 0l4 0l4 0l4 0l4 0l4 0l4 0l4 0l4 0l4 0l4 0l4 0l4 0l4 0l4 0l4 0l4 0l4 0l4 0l4 0l4 0l4 0l4 0l4 0l4 0l4 0l4 0l4 0l4 0l4 0l4 0l4 0l4 0l4 0l4 0l4 0l4 0l4 0l4 0l4 0l4 0l4 0l4 0l4 0l4 0l4 0l4 0l4 0l4 0l4 0l4 0l4 0l4 0l4 0l4 0l4 0l4 0l4 0l4 0l4 0l4 0l4 0l4 0l4 0l4 0l4 0l4 0l4 0l4 0l4 0l4 0l4 0l4 0l4 0l4 0l4 0l4 0l4 0l4 0l4 0l4 0l4 0l4 0l4 0l4 0l4 0l4 0l4 0l4 0l4 0l4 0l4 0l4 0l4 0l4 0l4 0l4 0l4 0l4 0l4 0l4 0l4 0l4 0l4 0l4 0l4 0l4 0l4 0l4 0l4 0l4 0l4 0l4 0l.5 0l.8-17.8l2.7-15l4-15l4-9.5l3-5.5l1-1.6l4-6l4-4.4l4-2.9l3-1.3l1-.2l4-.6l4 .4l2 .4l2 .6l4 1.9l2 1.2l2 1.5l4 3.9l2 2.1l2 2.3l4 5.2l2 2.5l2 2.4l4 4.8l2 1.8l2 1.5l4 2.7l4 1.9l1 .4l3 1l4 1.1l4 .4l4-.2l4-.5l2-.3l2-.4l4-1.3l4-1.6l2-.7l2-.7l4-1.3l4-1.3l4-1.2l4-1.1l4-1.1l4-.8l4-.7l4-.5l2-.1l2-.1l4-.1l2 0l2 0l4 .3l4 .3l2 .2l2 .2l4 .4l4 .4l4 .4l4 .3l4 .2l4 .3l4 .2l4 .1l4 .1l4 .1l4 .1l4 .1l4 0l4 .1l4 0l3 0l1 0l4 0l4 0l4 0l4 0l4 0l4 0l4 0l4 0l4 0l4 0l4 0l4 0l4 0l4 0l4 0l4 0l4 0l4 0l4 0l4 0l4 0l4-.1l4 0l4 0l4 0l4 0l4 0l4 0l4 0l4 0l4-.1l4 0l4 0l3 0" fill="none" stroke="#ff0000" stroke-width="3.5" stroke-linejoin="round"/><path d="M754.2 442V490" stroke="#ff0000" stroke-width="1.8" fill="none"/></g>
<line x1="749" y1="653" x2="1877" y2="653" stroke="#ebebeb" stroke-width="1.6"/><text x="747" y="657.5" text-anchor="end">160.9</text><line x1="749" y1="678" x2="1877" y2="678" stroke="#ebebeb" stroke-width="1.6"/><text x="747" y="682.5" text-anchor="end">89.7</text><line x1="749" y1="703" x2="1877" y2="703" stroke="#ebebeb" stroke-width="1.6"/><text x="747" y="707.5" text-anchor="end">18.5</text><line x1="749" y1="728" x2="1877" y2="728" stroke="#ebebeb" stroke-width="1.6"/><text x="747" y="732.5" text-anchor="end">-52.7</text><line x1="749" y1="753" x2="1877" y2="753" stroke="#e0e0e0" stroke-width="2"/><text x="747" y="757.5" text-anchor="end">-123.9</text><line x1="752.5" y1="653" x2="752.5" y2="757" stroke="#e6e6e6" stroke-width="1"/><text x="752.5" y="771" text-anchor="middle">0.00</text><line x1="1033.75" y1="653" x2="1033.75" y2="757" stroke="#e6e6e6" stroke-width="1"/><text x="1033.75" y="771" text-anchor="middle">0.75</text><line x1="1315" y1="653" x2="1315" y2="757" stroke="#e6e6e6" stroke-width="1"/><text x="1315" y="771" text-anchor="middle">1.50</text><line x1="1596.25" y1="653" x2="1596.25" y2="757" stroke="#e6e6e6" stroke-width="1"/><text x="1596.25" y="771" text-anchor="middle">2.25</text><line x1="1877.5" y1="653" x2="1877.5" y2="757" stroke="#e6e6e6" stroke-width="1"/><text x="1877.5" y="771" text-anchor="middle">3.00</text><rect x="1145.5" y="619.5" width="8" height="8" fill="#0000ff" stroke="#1a1a1a" stroke-width="1"/><text x="1158.7" y="628" textLength="29.1" lengthAdjust="spacing">Iq (A)</text><rect x="1197.5" y="619.5" width="8" height="8" fill="#ff0000" stroke="#1a1a1a" stroke-width="1"/><text x="1210.4" y="628" textLength="28.5" lengthAdjust="spacing">Id (A)</text><rect x="1248.5" y="619.5" width="8" height="8" fill="#f6a625" stroke="#1a1a1a" stroke-width="1"/><text x="1261.5" y="628" textLength="34.5" lengthAdjust="spacing">Ifw (A)</text><rect x="1306" y="619.5" width="8" height="8" fill="#6d5fd5" stroke="#1a1a1a" stroke-width="1"/><text x="1319" y="628" textLength="124.5" lengthAdjust="spacing">Throttle Reduction (%)</text><clipPath id="c3"><rect x="751.5" y="651.2" width="1127.0" height="103.4"/></clipPath><g clip-path="url(#c3)"><path d="M753 701.8l.8-23.2l1.2-21.8l2-4.1l2-.2l1-.4l1 .2l2 .1l2-.3l2 .2l2-.2l2 .1l1-.1l1 1.4l1 2l1 1.9l2 3.7l1 1.6l1 1.1l2 2.6l2 2l1 1.1l1 1.1l2 2l2 1.6l2 1.6l1 .8l1 .6l2 .7l2 1l2 .9l2 .7l1 .3l1 .3l2 .8l2 .8l2 .8l2 .5l2 .6l2 .7l1 .1l1 .1l2 .5l2 .2l2 .4l2 .2l2 .5l2 0l2 .3l2 .2l2 .3l2 .1l2 .5l1 .2l1-.1l2 .3l2 0l2 .5l2 .1l2 .2l2 .2l2 .2l2 .2l2-.1l2 .3l2 .1l2 .2l2 .2l2 0l1 .2l1 0l2 .3l2-.1l2 .3l2 0l2-.1l2 .3l2 0l2 .2l2 .1l2-.1l2 .3l2 .1l2 0l2 .2l2-.1l2 .1l2-.1l1 .3l1 0l2 0l2 .1l2 .3l2 0l2 0l2 0l2 .1l2 .2l2 .1l2 .1l2 .2l2 .1l2 .2l2-.1l2 0l2 .3l2-.2l2 .3l2-.2l2 .1l2 0l2 .2l2-.2l2 .4l2-.1l2-.1l1 .2l1-.1l2 .1l2-.1l2-.1l2 0l2 0l2 .2l2-.1l2 .1l2 .1l2 .2l2 .2l2 0l2-.1l2-.1l2 .2l2 0l2-.1l2 .3l2-.1l2-.1l2 0l2 .4l2 .1l2-.3l2 .3l2-.1l2-.2l2 .4l2-.3l2 .5l2 .1l2-.1l2 .2l2 0l2-.1l2 .1l2 .2l2-.1l2 .1l2 .1l2-.2l2 .2l2 .1l2-.2l2 0l2 .1l2 0l2 .1l2 .1l2 .2l2-.1l2 .3l2 .2l2 .1l2-.1l2 .2l2 0l2 0l2 0l2-.2l2 .3l2-.2l2 .3l2-.4l2 .3l2-.2l2 .2l2-.2l2 .1l2 .3l2-.1l2-.1l2 .1l2 .1l2 .1l2-.1l2-.3l2 .3l2 .1l2-.1l2-.1l2 .1l2 0l2 .5l2-.1l2-.3l2 .3l2-.2l2 .3l2-.4l2 0l2 .3l2 0l2-.1l1 .2l1 .1l2 .2l2-.2l2 .1l2-.2l2 .1l2 .2l2-.3l2 .2l2 .1l2-.1l2 .2l2-.3l2 .1l2-.2l2 0l2 .1l2-.2l2 .1l2 0l2-.2l2 .4l2-.2l2 .1l2-.2l2 .5l2-.1l2 0l2-.2l2 .2l2 .3l2 0l2-.2l2 0l2-.1l2 .3l2 .1l2 0l2-.1l2 0l2 0l2 .3l2 .1l2-.4l2 .5l2 0l2 0l2 0l2-.3l2 0l2 .2l2-.2l2 .2l2 .1l2 0l2-.4l2 .2l2 0l2 .3l2-.3l2 .2l2 .1l2 .1l2-.3l2 .5l2-.2l2-.1l2-.1l2-.2l2 .3l2-.1l2-.2l2-.1l2 0l2 .5l2-.1l2 0l2-.1l2 .2l2 .1l2 .3l2-.2l2 .1l2-.3l2-.1l2 .2l2 .1l2 0l2 0l2 .1l2-.1l2 .1l2 0l2-.3l2 .1l2-.1l2 .5l2-.4l2 .4l2 0l2 .1l2-.1l2 .2l2 0l2 0l2-.3l2 .4l2-.1l2-.3l2 0l2 .1l2-.3l2-.1l2-.1l2 .1l2-.1l2 .2l2-.1l2 .2l2 0l2 0l2 .1l2 .2l2-.3l2 0l1 .2l1-.2l2 0l2 .3l2-.2l2-.2l2 .2l2-.2l2 .1l2-.2l2-.1l2 .2l2 .1l2-.3l2 .1l2-.2l2 .2l2 0l2 .2l2 .2l2-.2l2 .4l2-.1l2 0l2 .3l2-.3l2 .1l2-.3l2 .1l2-.2l2 0l2 0l2 0l2 .1l2 .2l2 0l2 .1l2-.1l2 .2l2 .1l2-.2l2 .1l2 0l2-.1l2 .1l2 .2l2 0l2-.3l2 .2l2-.2l2 .1l2 .3l2-.1l2 .7l2 1.5l2 1.4l2 1l2 .8l2 .7l2 .7l2 .7l2 .4l2 .8l2 .1l2 .3l2 .6l2 .2l2 .2l2 0l2 .3l2 .1l2 0l2-.3l2 .2l2 0l2-.4l2-.1l2-.3l2-.2l1 .1l1 0l2-.5l2-.1l2-.3l2-.4l2 .1l2-.4l2-.2l2-.4l2 .1l2-.1l2-.4l2-.2l2-.1l2-.3l2-.3l2 0l2-.2l2 0l2-.2l2 .1l2-.2l2 .2l2 0l2 0l2 .1l2 0l2 0l2-.2l2 .2l2-.1l2 0l2 .3l2-.1l2 0l1 .3l1-.3l2 .2l2 0l2 .1l2 0l2 .1l2 .1l2 .4l2 .1l2 .1l2 .1l2 0l2 .3l2-.2l2 .2l2 0l2-.2l2-.1l2 .2l2 0l2-.2l2 .1l2 0l2-.3l2 .2l2 0l2-.1l2 .3l2-.1l2 0l2 .1l2-.3l2 .1l2 .1l2 0l2 0l2-.1l2-.2l2 0l2 .1l2 .1l2 0l2 0l2-.1l2 0l2 .1l2-.3l2 .2l2 .1l2 0l2-.2l2 .2l2 0l2 .2l2-.3l2 .3l2-.1l2 .1l2 0l2 .1l2 0l2 0l2 0l2-.3l2 0l2 0l2-.2l2 .2l2 0l2-.2l2 .2l2-.2l2 .3l2-.1l2 .1l2-.1l2 .2l2-.3l2 .2l2 0l2-.2l2 .2l2-.2l2 .2l2-.2l2 .1l2 0l2-.1l2 .1l2-.2l2 .2l2-.3l2 .1l2 .1l2 0l2-.1l2 0l2 .1l2-.1l2 .1l2-.2l2 0l2 .3l2 0l2 0l2 .2l2-.1l2 .2l2-.1l2 0l2 0l2 .1l2-.2l2 0l2-.1l2 0l2 .2l2 0l2 0l2-.2l2 .1l2-.1l2 0l2 0l2-.1l2 0l0 2.7l-2 .1l-2 0l-2 .1l-2-.1l-2 0l-2 .1l-2 .1l-2-.2l-2 .1l-2 .2l-2-.1l-2 .1l-2-.2l-2 0l-2 .1l-2 0l-2-.2l-2 .1l-2-.1l-2 .1l-2 .1l-2-.1l-2 .2l-2 0l-2 .1l-2 0l-2-.1l-2 0l-2 .1l-2-.1l-2 .2l-2 .1l-2-.1l-2-.2l-2 .1l-2 0l-2 0l-2 0l-2 0l-2 0l-2 .1l-2 0l-2-.1l-2 .2l-2-.1l-2-.2l-2 0l-2 .1l-2-.2l-2 0l-2 0l-2 0l-2 .2l-2 .1l-2-.2l-2 .1l-2-.2l-2 0l-2 0l-2 0l-2 .1l-2-.2l-2 .1l-2-.2l-2 .1l-2 .2l-2-.1l-2 .1l-2 .1l-2 0l-2-.2l-2 .1l-2-.1l-2 .2l-2 .2l-2-.1l-2-.2l-2 0l-2 .1l-2 .1l-2-.3l-2 .2l-2 0l-2-.2l-2 0l-2 0l-2 0l-2 .1l-2 0l-2 .1l-2-.3l-2 .3l-2 0l-2-.1l-2-.1l-2 .1l-2-.1l-2 .3l-2 0l-2-.1l-2-.1l-2 .1l-2 .1l-2-.1l-2 0l-2 .2l-2-.1l-2 .1l-2-.2l-2 0l-2-.1l-2 .2l-2-.3l-2-.2l-2 .2l-2-.1l-2-.2l-2-.3l-2 .1l-2 0l-2-.1l-2 0l-2-.2l-2-.1l-2 .1l-1-.1l-1 .1l-2-.2l-2-.1l-2 0l-2 0l-2-.2l-2-.1l-2 0l-2 0l-2-.1l-2-.1l-2-.1l-2 .1l-2 .1l-2 0l-2 .1l-2-.2l-2 .3l-2 .2l-2 .2l-2-.1l-2 .5l-2 .2l-2 .2l-2 .1l-2 .3l-2 .1l-2 .5l-2 0l-2 .3l-2 .3l-2 .1l-2 .2l-2 .3l-2 .1l-1 0l-1 .3l-2 0l-2 .3l-2 .3l-2 0l-2 .4l-2 0l-2 .1l-2 0l-2 .2l-2 0l-2-.3l-2 0l-2-.1l-2-.5l-2-.2l-2-.3l-2-.6l-2-.3l-2-.7l-2-.6l-2-.9l-2-.8l-2-1.2l-2-1.1l-2-1.3l-2-1l-2 .1l-2 .1l-2 .2l-2-.3l-2 .2l-2 .1l-2-.3l-2 .1l-2-.2l-2 .3l-2-.4l-2 .1l-2-.2l-2 .2l-2-.1l-2-.3l-2 .1l-2 0l-2 .4l-2-.1l-2 .2l-2-.3l-2 .2l-2 .1l-2 0l-2 0l-2-.1l-2 .2l-2-.4l-2 .1l-2 .2l-2-.3l-2-.1l-2 .3l-2 0l-2-.3l-2-.2l-2 .1l-2 .1l-2-.1l-2 .1l-2 .2l-2-.1l-2 .2l-2-.4l-2 .1l-2 0l-2 0l-2 .1l-2-.2l-2-.2l-1 .2l-1-.3l-2-.2l-2 .2l-2 0l-2-.1l-2 0l-2 .3l-2-.3l-2 .3l-2 0l-2 .2l-2-.3l-2 .3l-2-.4l-2-.1l-2 .2l-2-.1l-2 .2l-2-.1l-2 0l-2 .2l-2 0l-2 0l-2-.4l-2 .3l-2 0l-2 .1l-2-.3l-2 .2l-2-.2l-2 .1l-2-.1l-2 0l-2-.2l-2-.1l-2-.2l-2-.1l-2 .1l-2 .3l-2-.2l-2 0l-2 .3l-2-.1l-2-.1l-2 .1l-2-.1l-2 .2l-2-.2l-2-.1l-2 0l-2 0l-2 .4l-2-.4l-2 0l-2 .4l-2-.3l-2 0l-2 .2l-2-.3l-2 0l-2 .4l-2-.3l-2 .1l-2 .1l-2-.3l-2 0l-2 0l-2 .3l-2-.1l-2-.3l-2 0l-2-.2l-2-.3l-2 .1l-2 .3l-2-.2l-2-.1l-2 0l-2 0l-2 .2l-2 0l-2-.2l-2 .1l-2 .1l-2-.1l-2 0l-2 .1l-2 .2l-2-.1l-2-.2l-2 .1l-2-.3l-2 0l-2-.1l-2 .2l-2-.1l-2-.1l-2 .2l-2 0l-2-.1l-2-.2l-2 .5l-2-.3l-2-.1l-2 0l-2 .2l-2-.1l-2-.2l-2-.2l-2 .2l-2-.1l-2 .2l-2-.3l-2 .1l-2 0l-2 .1l-2-.2l-2 0l-2-.1l-2 .1l-2 .3l-2 0l-2-.1l-2-.4l-2 .2l-1-.3l-1 .1l-2 .1l-2-.1l-2-.1l-2 0l-2 .1l-2 0l-2 .1l-2-.1l-2-.3l-2 0l-2 .2l-2-.3l-2 0l-2-.2l-2 0l-2 .2l-2 0l-2-.1l-2-.2l-2-.1l-2 .2l-2-.1l-2 .1l-2 0l-2-.1l-2 0l-2 .1l-2-.1l-2-.2l-2-.2l-2-.1l-2 0l-2-.1l-2 .1l-2 .1l-2-.3l-2 .3l-2-.3l-2 0l-2 0l-2 .1l-2-.4l-2-.2l-2-.1l-2 0l-2 .1l-2-.1l-2 0l-2 0l-2 .2l-2-.1l-2 .2l-2-.1l-2 0l-2-.1l-2 0l-2-.1l-2-.2l-2-.1l-2 .1l-2 0l-2 0l-2-.3l-2 .1l-2 .1l-2 .3l-2-.5l-2 .4l-2-.2l-2 0l-2-.2l-2 .2l-2-.3l-2-.3l-2 .4l-2-.3l-2 .1l-2-.5l-2 .3l-2-.3l-2-.2l-2 .1l-2-.1l-2-.1l-2-.4l-2 .2l-2-.2l-2 0l-2 .2l-2-.4l-2 0l-2 0l-2 .2l-2-.3l-1 .3l-1-.2l-2 .1l-2-.1l-2-.3l-2 .2l-2-.1l-2-.4l-2 .1l-2-.2l-2-.3l-2-.2l-2 .2l-2-.4l-2 .2l-2-.1l-2-.3l-2 .2l-2-.2l-2 .2l-2-.4l-2 .4l-2-.1l-2-.4l-2 .2l-2-.1l-2-.1l-2-.3l-1-.1l-1-.1l-2 0l-2-.1l-2 .1l-2-.2l-2-.1l-2 0l-2 0l-2-.1l-2-.2l-2 .1l-2 0l-2-.4l-2 0l-2 0l-2-.3l-2-.2l-2 .1l-1-.2l-1 .1l-2 0l-2-.3l-2 0l-2-.1l-2-.3l-2 0l-2-.2l-2-.4l-2 0l-2-.4l-2-.3l-2-.1l-2-.4l-2 .1l-1-.1l-1-.1l-2-.5l-2-.1l-2-.2l-2-.1l-2-.4l-2-.4l-2-.4l-2-.3l-2-.2l-2-.4l-2-.6l-1 0l-1-.5l-2-.5l-2-.4l-2-.8l-2-.6l-2-.9l-2-.7l-1-.2l-1-.5l-2-.8l-2-.7l-2-.7l-2-1l-1-.8l-1-.7l-2-1.4l-2-2.1l-2-1.9l-1-1l-1-.9l-2-2.3l-2-2.5l-1-1.3l-1-1.4l-2-3.6l-1-2l-1-1.9l-1-1.3l-1 .1l-2 0l-2 0l-2-.1l-2 .2l-2-.2l-1-.1l-1 .1l-2 .3l-2 4.1l-1.2 22l-.8 23z" fill="#0000ff"/><path d="M753 703l.8-23l1.2-22l2-4l3-.4l1 0l4 0l4 0l3 0l1 1.3l1 2.1l3 5.4l1 1.6l3 3.8l3 3.2l1 1l4 3.8l3 2.2l1 .6l4 1.9l4 1.6l1 .4l3 1.1l4 1.4l4 1.3l3 .7l1 .2l4 .8l4 .6l4 .6l4 .5l4 .5l3 .3l1 .1l4 .4l4 .4l4 .4l4 .3l4 .3l4 .3l4 .2l1 .1l3 .2l4 .2l4 .2l4 .2l4 .2l4 .1l4 .2l4 .2l4 .2l1 0l3 .1l4 .2l4 .2l4 .1l4 .2l4 .2l4 .1l4 .2l4 .1l4 .2l4 .1l4 .2l4 .1l3 .1l1 0l4 .1l4 .2l4 .1l4 .1l4 .1l4 .1l4 .1l4 .1l4 .1l4 .1l4 .1l4 .1l4 .1l4 .1l4 0l4 .1l4 .1l4 .1l4 .1l4 .1l4 .1l4 0l4 .1l4 .1l4 .1l4 .1l4 0l4 .1l4 .1l4 .1l4 .1l4 0l4 .1l4 .1l4 .1l4 0l4 .1l4 .1l4 0l4 .1l4 .1l4 0l4 .1l4 0l4 .1l4 0l4 .1l1 0l3 0l4 .1l4 0l4 .1l4 0l4 0l4 .1l4 0l4 .1l4 0l4 0l4 .1l4 0l4 0l4 .1l4 0l4 0l4 .1l4 0l4 0l4 .1l4 0l4 0l4 .1l4 0l4 0l4 0l4 .1l4 0l4 0l4 .1l4 0l4 0l4 0l4 .1l4 0l2 0l2 0l4 0l4 .1l4 0l4 0l4 0l4 .1l4 0l4 0l4 0l4 .1l4 0l4 0l4 0l4 0l4 .1l4 0l4 0l4 0l4 .1l4 0l4 0l4 0l4 0l4 .1l4 0l3 0l1 0l4 0l4 0l4 .1l4 0l4 0l4 0l4 0l4 0l4 0l4 0l4 0l4 0l4 0l4 .1l4 0l4 0l4 0l4 0l4 0l4 .1l4 0l4 0l4 .1l4 0l4 .1l2 0l2 .9l2 1.4l2 1.1l4 2.1l4 1.4l4 1.1l4 .8l4 .5l2 .2l2 .1l4 .3l4 .1l4-.1l4-.3l4-.3l3-.3l1-.1l4-.4l4-.5l4-.6l4-.4l4-.4l4-.4l4-.4l4-.4l4-.2l4-.2l2 0l2 0l4 0l4 .1l4 .1l4 .1l4 .2l4 .1l1 0l3 .1l4 .1l4 .2l4 .2l4 .2l4 .1l4 .2l4 .1l4 0l4 0l4 0l4 0l4-.1l4 0l4 0l4-.1l4 0l4 0l4 0l4 0l4 0l4 0l4 0l4 0l4 0l4 0l4 0l4 0l4 0l4 0l4 0l4 0l4 0l4 0l4 0l4 0l4 0l4 0l4 0l4 0l4 0l4 0l4 0l4 0l4 0l4 0l4 0l4 0l4 0l4 0l4 0l4 0l4 0l4 0l4 0l4 0l4 0l4 0l4 0l4 0l4 0l4 0l4 0" fill="none" stroke="#0000ff" stroke-width="3.2" stroke-linejoin="round"/><path d="M753 701.6l.5 27l1 21.9l.5-.6l1-2.3l1-1.5l2-2.5l1-1.3l1-.8l2-2.3l2-1.8l2-1.6l2-1.6l1-.6l1-.7l2-1.2l2-.7l2-.6l2-.3l1-.2l1 .2l2-.1l2 0l1-.2l1 .1l2 .2l2 .8l2 .3l2 .7l2 .6l2 .4l2 .8l2 .3l2 .6l2 .1l2 .4l2 .1l2 .1l2-.1l2 .1l2-.1l2 0l2-.2l2-.2l2-.1l2 0l2-.4l2-.1l2-.1l2 .1l2 0l2-.1l2 0l2-.1l2-.3l2 .3l1-.1l1 .1l2-.3l2 .1l2-.2l2 .3l2 0l2-.1l2-.1l2-.2l2-.1l2 .2l2-.2l2 .1l2-.3l2-.1l2 0l2 .1l2 0l2-.1l2-.2l2 0l2 .2l2 0l2-.2l2-.2l1-.1l1-.1l2 0l2 .2l2-.2l2 0l2-.1l2 0l2 0l2 .2l2-.1l2 0l2 .2l2-.2l2 0l2-.2l2 0l2-.2l2-.3l2 .2l2-.1l2-.3l2 .1l2 .1l2-.4l2 0l2 0l2 .4l2-.3l2 .3l2-.2l1 0l1 .2l2-.2l2 0l2-.5l2 0l2 .1l2 0l2-.1l2-.1l2 0l2 0l2 .3l2-.4l2 .2l2-.2l2 0l2-.1l2-.1l2 .2l2-.4l2 .5l2-.3l2 0l2-.4l2 .3l2-.1l2-.1l2-.1l2-.2l2 0l2 .3l2 0l2-.2l2 0l2 .4l2-.4l2 0l2 .4l2-.4l2 .1l2 .2l2-.2l2 0l2 0l2 0l2 .1l2-.1l2-.1l2 .2l2-.4l2 0l2 .2l2-.1l2-.1l2 0l2-.2l2 .1l2 .3l2-.1l2-.2l2-.1l2 0l2 .3l2 0l2 0l2-.2l2-.3l2 .3l2 .1l2-.4l2 .2l2-.2l2-.1l2 .3l2-.1l2-.1l2 0l2-.1l2-.2l2 .1l2-.3l2 .2l2 0l2 .2l2-.2l2 .4l2-.2l2-.1l2 .1l2 .2l2-.3l2 .1l2 .2l2-.3l2 .1l1 .2l1 0l2-.4l2 .1l2 .3l2-.3l2 .2l2-.5l2 .1l2 0l2 .1l2-.3l2 .3l2-.3l2-.1l2-.1l2 .1l2-.1l2 0l2 0l2 .2l2-.1l2-.4l2 0l2 .4l2 0l2 .1l2-.2l2 .2l2-.3l2 0l2 .1l2 .1l2-.3l2 .1l2 .1l2-.2l2 .1l2 0l2 .1l2 0l2 .1l2 0l2-.1l2 .1l2-.2l2-.1l2 .2l2 0l2-.1l2-.4l2 .2l2 .2l2-.5l2 0l2 0l2 .2l2-.3l2 .2l2-.2l2 .1l2 .4l2-.1l2-.1l2 .1l2-.2l2 0l2 0l2-.2l2 0l2-.1l2 .2l2-.4l2 .3l2-.1l2-.2l2-.1l2 0l2 .1l2 .1l2 .3l2 .2l2-.2l2 0l2 .1l2-.2l2 0l2-.1l2 .2l2-.3l2 .4l2-.1l2 0l2 0l2 0l2-.2l2 .4l2-.1l2-.1l2 0l2-.1l2 .3l2 0l2-.1l2-.4l2 .2l2-.1l2 .2l2-.3l2 .3l2-.1l2 .3l2-.1l2 .2l2-.1l2 .3l2-.4l2 .5l2-.2l2-.3l2 .2l2-.1l2 0l2 .1l2-.2l2 0l2 .1l2-.2l2-.2l2 .2l2-.3l2 0l2 0l2-.4l2 0l2 .4l2-.5l2 .3l2-.4l2-.1l2 .4l2 .2l2-.4l2 .4l2 .2l2 .1l2-.2l2 .2l2-.3l2 0l2 .2l2-.1l2 .3l2 .1l2-.3l2 .2l2 .1l2-.1l2-.3l2 .3l2 0l2-.2l2-.1l2-.1l2 .2l2 .1l2-.4l2 .1l2 0l2 .1l2 0l2 .1l2 .2l2-.3l2 0l2-.2l2 0l2 .2l1.5 2.6l.5 0l2 1.2l1 .2l1 0l2 .4l2-.1l1-.2l1 .5l2 0l2-.3l2-.1l2-.4l2-.5l2-.2l2-.3l2-.1l2-.7l2-.4l2-.6l2-.3l1-.3l1-.4l2-.5l2-.3l2-.2l2-.6l2-.3l2-.5l2-.3l2-.2l2-.5l2-.5l2-.3l2-.5l2-.3l2-.3l2-.1l1-.1l1 .3l2-.1l2-.2l2-.1l2-.1l2 0l2-.1l2-.1l2 .2l1-.2l1 .1l2 .1l2 .3l2 .1l2 .2l2 .3l2 .3l2 .4l2 .1l2 .3l1-.1l1 .2l2 .1l2 .1l2 .1l2 .4l2-.1l2 .4l2 0l2 0l2 .4l2-.1l2 .3l2-.1l2 .1l2 0l1 .1l1 0l2-.2l2 0l2 0l2 0l2 0l2 .1l2-.3l2 .4l2-.2l2-.2l2 .1l2-.1l2 .1l2 .1l2 0l2-.2l2 .2l2 .1l2-.1l1 0l1 .2l2-.2l2 .1l2-.1l2-.1l2 0l2 .1l2-.2l2 .1l2 .2l2-.1l2 0l2-.2l2 0l2-.1l2 .1l2-.2l2 .3l2 0l2-.2l1-.2l1 .3l2-.1l2-.1l2 .1l2 0l2 0l2-.1l2-.1l2 0l2 .1l2-.1l2 .1l2 .1l2 0l2 .3l2-.1l2 .1l2-.1l2 0l2-.2l2 .3l2-.3l2 .1l2-.1l2 0l2-.1l2 .2l2 0l2-.1l2-.1l2 0l2 0l2 .2l2-.1l2 .2l2-.1l2 .2l2-.2l2 .2l2-.3l2 .3l2-.3l2-.1l2 .3l2-.3l2 0l2 0l2 0l2-.1l2 0l2 .2l2 .1l2-.2l2 .3l2-.2l2 0l2 .1l2-.1l2 .2l2 0l2-.2l2 .1l2-.1l2 .2l2-.1l2-.1l2 .2l2-.2l2-.1l2 .3l2-.3l2 .2l2-.2l2 .1l2 0l2 0l2-.1l2 0l2 .1l0 2.8l-2 .1l-2-.1l-2 .1l-2 0l-2 0l-2 .1l-2-.1l-2 0l-2-.2l-2 .1l-2-.1l-2-.1l-2 .3l-2-.1l-2-.2l-2 .1l-2 .2l-2-.1l-2 0l-2 .1l-2-.2l-2 .1l-2 .2l-2-.1l-2-.2l-2 0l-2 .1l-2 .1l-2-.2l-2 0l-2 .2l-2-.2l-2 0l-2 0l-2 .2l-2 0l-2-.1l-2-.1l-2 0l-2 .1l-2-.2l-2 .3l-2-.1l-2-.1l-2 .2l-2 .1l-2-.2l-2 .3l-2-.1l-2 0l-2 0l-2 .3l-2-.1l-2-.1l-2-.1l-2-.1l-2 .1l-2-.2l-2 .2l-2 0l-2-.1l-2-.1l-2 0l-2-.2l-2 .2l-2-.2l-2 .3l-2 0l-2-.3l-2 .2l-2 0l-2-.1l-2 .2l-2-.1l-2 .1l-2-.2l-2 0l-2 0l-1 .1l-1 .1l-2 0l-2-.1l-2 .1l-2 0l-2 .1l-2 .1l-2 0l-2 .1l-2-.1l-2 0l-2 0l-2-.1l-2 0l-2-.1l-2 .1l-2 .1l-2-.1l-2 .3l-2 0l-1-.2l-1 .1l-2 .1l-2-.2l-2 0l-2 .2l-2-.1l-2 0l-2-.1l-2 0l-2 .3l-2 0l-2-.2l-2 .1l-2 .1l-2-.2l-2 .1l-2-.2l-2 .2l-2 0l-2 .1l-1-.1l-1 0l-2 .2l-2-.1l-2-.1l-2-.2l-2 0l-2-.1l-2-.4l-2-.2l-2 0l-2-.2l-2-.1l-2-.4l-2-.1l-2 0l-1 0l-1 0l-2-.4l-2 .1l-2-.3l-2-.2l-2-.4l-2-.1l-2-.4l-2-.2l-2 0l-1 0l-1 .1l-2 0l-2 0l-2 0l-2 .2l-2-.2l-2 0l-2 .3l-2-.3l-1 .2l-1-.2l-2 .5l-2-.1l-2 .6l-2 .5l-2 .4l-2 .5l-2 .5l-2 .3l-2 .5l-2 .5l-2 .2l-2 .4l-2 .5l-2 .5l-2 .4l-1 .2l-1 .2l-2 .6l-2 .4l-2 .5l-2 .5l-2 .9l-2 .4l-2 .1l-2 .4l-2 .2l-2 .6l-2 0l-2 .5l-1-.1l-1-.1l-2 .1l-2-.4l-1 .4l-1-.4l-2-.9l-.5-.1l-1.5-3l-2 .1l-2 .3l-2-.3l-2 .4l-2-.3l-2 0l-2-.1l-2 .3l-2-.1l-2-.1l-2-.1l-2-.1l-2 .2l-2-.3l-2-.1l-2 .4l-2 .1l-2-.1l-2-.1l-2 .2l-2 .1l-2 0l-2-.3l-2 .2l-2-.3l-2 0l-2 .4l-2 .1l-2-.1l-2 .1l-2-.5l-2 .6l-2-.4l-2 .5l-2-.5l-2 0l-2 .3l-2-.4l-2 .3l-2-.1l-2 0l-2 .3l-2-.2l-2-.3l-2 .1l-2 .1l-2-.1l-2 .2l-2-.1l-2-.2l-2-.2l-2 .4l-2-.4l-2 .2l-2 .1l-2-.1l-2 .1l-2-.2l-2 0l-2 .2l-2 .2l-2-.1l-2-.2l-2 .1l-2-.1l-2-.1l-2 .1l-2 .1l-2-.3l-2 .3l-2-.2l-2 .3l-2-.4l-2 .3l-2-.1l-2 .2l-2 0l-2 .1l-2-.1l-2 .1l-2-.2l-2 .1l-2-.2l-2 0l-2 .1l-2-.1l-2 .3l-2-.1l-2-.3l-2 .2l-2-.1l-2-.1l-2 .2l-2-.1l-2 .1l-2 .2l-2-.2l-2-.1l-2 .3l-2 0l-2-.1l-2-.3l-2 .5l-2 .1l-2-.3l-2 .4l-2 .1l-2-.3l-2 0l-2 0l-2 .1l-2-.2l-2 .5l-2-.2l-2-.1l-2 .1l-2-.3l-2 0l-2 .1l-2 0l-2 0l-2 .1l-2-.4l-2 .2l-2 0l-2 .1l-2-.2l-2 .4l-2-.2l-2 0l-2 .3l-2-.1l-2 .1l-2-.2l-2 .1l-2 0l-2 .2l-2-.1l-2-.2l-2 .1l-2 .2l-2-.3l-2 .1l-2-.1l-2 .3l-2 .2l-2-.1l-2-.3l-2 0l-2-.1l-2 0l-2 .1l-2 .3l-2-.1l-2-.5l-2 .1l-2 .1l-2 .2l-2-.1l-2 .2l-2 .2l-2-.3l-2 0l-2 .4l-2-.2l-2 0l-2 .3l-2-.3l-2 .3l-2-.1l-2 .2l-2-.1l-2 0l-2 0l-2 .4l-2-.2l-1 .1l-1-.2l-2 .2l-2 0l-2 .1l-2-.1l-2 0l-2 .1l-2-.3l-2 .2l-2-.2l-2 .2l-2-.2l-2 .4l-2-.3l-2 .2l-2 .1l-2-.2l-2 .4l-2 0l-2-.5l-2 .1l-2 0l-2 .2l-2 0l-2 0l-2-.2l-2 0l-2 .3l-2 0l-2-.2l-2 .2l-2-.4l-2 .2l-2-.1l-2 .2l-2 0l-2-.2l-2-.1l-2 .2l-2 0l-2-.3l-2 .1l-2-.2l-2 0l-2 .3l-2-.2l-2 0l-2 .1l-2 .1l-2 .1l-2 0l-2 .2l-2-.1l-2 .1l-2 .2l-2-.4l-2 .2l-2-.1l-2 .3l-2-.2l-2 .3l-2 .2l-2-.1l-2 .4l-2 .1l-2 .2l-2 .1l-2-.3l-2 .2l-2 .1l-2 0l-2-.4l-2 0l-2 .2l-2-.6l-2 .4l-2-.3l-2 .3l-2-.2l-2-.1l-2 .1l-2 .2l-2 .1l-2-.1l-2 .2l-2-.1l-2 0l-2 0l-2 .1l-2-.1l-2 .1l-2 .1l-2 0l-2-.2l-2 .2l-1-.1l-1 .3l-2-.2l-2 .2l-2-.3l-2 .3l-2-.1l-2-.3l-2 .2l-2 .2l-2-.2l-2 0l-2 0l-2 .4l-2 0l-2 0l-2 0l-2-.1l-2 0l-2-.2l-2 .2l-2 0l-2-.1l-2 .1l-2 0l-2 .1l-2 .1l-2 .1l-2 .1l-2 .2l-2-.1l-1-.1l-1 .2l-2 .1l-2-.1l-2 .1l-2 .1l-2 0l-2 0l-2-.2l-2 .4l-2-.1l-2-.1l-2 .2l-2-.3l-2 .4l-2-.1l-2-.3l-2 .2l-2 0l-2 .4l-2-.2l-2 .4l-2-.2l-2 .3l-2 .1l-2-.1l-1-.1l-1 0l-2 .3l-2-.1l-2 0l-2 .1l-2 .1l-2 .2l-2 .1l-2-.2l-2 .2l-2 0l-2 .3l-2 .2l-2 0l-2-.1l-2 .1l-2 0l-2 .1l-2-.3l-2-.1l-2-.1l-2-.5l-2 0l-2-.4l-2-.5l-2-.8l-2-.6l-2-.4l-2-.5l-2-.6l-2-.4l-2-.4l-1 0l-1 .1l-2-.3l-2 0l-1-.1l-1 .2l-2 .3l-2 .6l-2 .7l-2 1.5l-1 .4l-1 .8l-2 1.5l-2 1.6l-2 2.1l-2 2l-1 .9l-1 1.1l-2 2.6l-1 1.5l-1 2.4l-.5 .4l-1-21.6l-.5-27.1z" fill="#ff0000"/><path d="M753 703l.5 27l1 22l1.5-3l1-1.5l3-3.5l1-1.1l4-3.9l4-3.3l1-.7l3-1.9l2-.8l2-.5l3-.4l1 0l4 .1l1 0l3 .4l4 1.1l2 .5l2 .5l4 1.1l4 .9l4 .5l4 .3l4-.1l4-.1l4-.1l4-.1l4-.2l4-.2l4-.2l4-.1l4-.2l1 0l3-.1l4-.1l4-.1l4 0l4-.1l4-.1l4 0l4-.1l4-.1l4 0l4-.1l4 0l3-.1l1 0l4-.1l4-.1l4 0l4-.1l4-.1l4 0l4-.1l4-.1l4 0l4-.1l4-.1l4 0l4-.1l4-.1l3 0l1 0l4-.1l4 0l4-.1l4-.1l4 0l4-.1l4 0l4-.1l4 0l4-.1l4-.1l4 0l4-.1l4 0l4-.1l4 0l4-.1l4 0l4 0l4-.1l4 0l4-.1l4 0l4 0l4-.1l4 0l4-.1l4 0l4 0l4-.1l4 0l4 0l4-.1l4 0l4 0l4-.1l4 0l4 0l4 0l4-.1l4 0l4 0l4-.1l4 0l4 0l4-.1l4 0l1 0l3 0l4-.1l4 0l4 0l4-.1l4 0l4 0l4-.1l4 0l4 0l4-.1l4 0l4 0l4-.1l4 0l4 0l4-.1l4 0l4 0l4 0l4-.1l4 0l4 0l4-.1l4 0l4 0l4 0l4-.1l4 0l4 0l4 0l4 0l4-.1l4 0l4 0l4 0l2 0l2 0l4 0l4 0l4 0l4 0l4-.1l4 0l4 0l4 0l4 0l4 0l4 0l4 0l4 0l4 0l4 0l4 0l4-.1l4 0l4 0l4 0l4 0l4 0l4 0l4 0l4 0l4 0l4 0l4 0l4 0l4 0l4 0l4-.1l4 0l4 0l4 0l4 0l4 0l4 0l4 0l4 0l4 0l4 0l4 0l4 0l4 0l4 0l4 0l4 0l4 0l4 0l4 0l2 0l1.5 2.7l.5 .3l3 1.1l1 .1l4 .2l1 0l3-.1l4-.6l4-.6l4-.8l4-.9l4-1l3-.7l1-.2l4-.8l4-.8l4-.8l2-.4l2-.4l4-.9l4-.9l4-.6l3-.2l1 0l4-.1l4 0l4-.1l4 0l1 0l3 .1l4 .3l4 .4l4 .4l4 .4l1 .1l3 .2l4 .3l4 .4l4 .3l4 .2l4 .2l4 .2l3 0l1 0l4 0l4 0l4 0l4 0l4 0l4 0l4-.1l4 0l4 0l3 0l1 0l4 0l4 0l4-.1l4 0l4 0l4 0l4-.1l4 0l4 0l3 0l1 0l4 0l4 0l4 0l4 0l4 0l4 0l4 0l4 0l4 0l4 0l4 0l4 0l4 0l4 0l4 0l4 0l4 0l4 0l4 0l4 0l4 0l4 0l4 0l4 0l4 0l4 0l4 0l4 0l4 0l4 0l4 0l4 0l4 0l4 0l4 0l4 0l4 0l4 0l4 0" fill="none" stroke="#ff0000" stroke-width="3.2" stroke-linejoin="round"/><path d="M753 753H1502.7V727.7H1877" fill="none" stroke="#f6a625" stroke-width="2.7"/><path d="M753 709.5l3 0l3 0l3 0l3 0l3 0l3 0l1 0l2-3.4l1-2.1l2-2.9l1-1.1l2-1.7l2-1.3l1-.7l3-1.8l1-.5l2-.9l3-1.1l3-.9l3-.8l3-.6l1-.2l2-.3l3-.3l3-.3l3-.3l3-.3l3-.5l3-.5l3-.3l3-.2l3-.2l3-.2l3-.2l3-.1l3-.2l3-.1l3-.2l1 0l2-.1l3-.1l3-.2l3-.1l3-.1l3-.1l3-.1l3-.2l3-.1l3-.1l3 0l2-.1l1 0l3-.1l3-.1l3-.1l3 0l3-.1l3-.1l3 0l3-.1l3-.1l3 0l3-.1l3 0l3-.1l3 0l3-.1l3 0l3-.1l3 0l3-.1l3 0l3-.1l3 0l3-.1l3 0l3-.1l3-.1l3 0l3-.1l3 0l3-.1l3 0l3-.1l3 0l3-.1l3 0l3-.1l3 0l3 0l3-.1l3 0l3-.1l3 0l3-.1l3 0l3 0l3-.1l3 0l3-.1l3 0l1 0l2 0l3-.1l3 0l3 0l3 0l3-.1l3 0l3 0l3 0l3-.1l3 0l3 0l3 0l3-.1l3 0l3 0l3 0l3-.1l3 0l3 0l3 0l3 0l3-.1l3 0l3 0l3 0l3-.1l3 0l3 0l3 0l3 0l3-.1l3 0l3 0l3 0l3 0l3-.1l3 0l3 0l1 0l2 0l3 0l3-.1l3 0l3 0l3 0l3 0l3-.1l3 0l3 0l3 0l3 0l3-.1l3 0l3 0l3 0l3 0l3-.1l3 0l3 0l3 0l3 0l3-.1l3 0l3 0l3 0l3 0l3-.1l3 0l3 0l3 0l3 0l3 0l3-.1l3 0l3 0l3 0l3 0l3-.1l3 0l3 0l3 0l3 0l3 0l3 0l3-.1l3 0l3 0l2 0l1 0l3 0l3 0l3 0l3-.1l3 0l3 0l3 0l3 0l3 0l3 0l3-.1l3 0l3 0l3 0l3 0l3 0l3 0l3 0l3 0l3-.1l3 0l3 0l3 0l3 0l3 0l3 0l3 0l3 0l3-.1l3 0l3 0l3 0l3 0l3 0l2 0l1 0l3 0l3 0l3 0l3 0l3 0l3 0l3-.1l3 0l3 0l3 0l3 0l3 0l3 0l3 0l3 0l3 0l3 0l3 0l3 0l3 0l3 0l3 0l3-.1l3 0l3 0l3 0l3 0l3 0l3 0l3 0l3 0l3 0l3 0l3 0l3 6.4l3 6.5l3 6.4l3 6.5l2.3 4.9l.7 0l3 0l3 0l3 0l3 0l3 0l3 0l3 0l3 0l3 0l3 0l3 0l3 0l3 0l3 0l3 0l3 0l3 0l3 0l3 0l3 0l3 0l3 0l3 0l3 0l3 0l3 0l3 0l3 0l3 0l3 0l3 0l3 0l3 0l3 0l3 0l3 0l3 0l3 0l3 0l3 0l3 0l3 0l3 0l3 0l3 0l3 0l3 0l3 0l3 0l3 0l3 0l3 0l3 0l3 0l3 0l3 0l3 0l3 0l3 0l3 0l3 0l3 0l3 0l3 0l3 0l3 0l3 0l3 0l3 0l3 0l3 0l3 0l3 0l3 0l3 0l3 0l3 0l3 0l3 0l3 0l3 0l3 0l3 0l3 0l3 0l3 0l3 0l3 0l3 0l3 0l3 0l3 0l3 0l3 0l3 0l3 0l3 0l3 0l3 0l3 0l3 0l3 0l3 0l3 0l3 0l3 0l3 0l3 0l3 0l3 0l3 0l3 0l3 0l3 0l3 0l3 0l3 0l3 0l3 0l2 0" fill="none" stroke="#6d5fd5" stroke-width="3.6" stroke-linejoin="round"/></g>
<line x1="749" y1="913" x2="1877" y2="913" stroke="#ebebeb" stroke-width="1.6"/><text x="747" y="917.5" text-anchor="end">302.8</text><line x1="749" y1="941.75" x2="1877" y2="941.75" stroke="#ebebeb" stroke-width="1.6"/><text x="747" y="946.25" text-anchor="end">114.9</text><line x1="749" y1="970.5" x2="1877" y2="970.5" stroke="#ebebeb" stroke-width="1.6"/><text x="747" y="975" text-anchor="end">-72.9</text><line x1="749" y1="999.25" x2="1877" y2="999.25" stroke="#ebebeb" stroke-width="1.6"/><text x="747" y="1003.75" text-anchor="end">-260.7</text><line x1="749" y1="1028" x2="1877" y2="1028" stroke="#e0e0e0" stroke-width="2"/><text x="747" y="1032.5" text-anchor="end">-448.5</text><line x1="752.5" y1="913" x2="752.5" y2="1032" stroke="#e6e6e6" stroke-width="1"/><text x="752.5" y="1046" text-anchor="middle">0.00</text><line x1="1033.75" y1="913" x2="1033.75" y2="1032" stroke="#e6e6e6" stroke-width="1"/><text x="1033.75" y="1046" text-anchor="middle">0.75</text><line x1="1315" y1="913" x2="1315" y2="1032" stroke="#e6e6e6" stroke-width="1"/><text x="1315" y="1046" text-anchor="middle">1.50</text><line x1="1596.25" y1="913" x2="1596.25" y2="1032" stroke="#e6e6e6" stroke-width="1"/><text x="1596.25" y="1046" text-anchor="middle">2.25</text><line x1="1877.5" y1="913" x2="1877.5" y2="1032" stroke="#e6e6e6" stroke-width="1"/><text x="1877.5" y="1046" text-anchor="middle">3.00</text><rect x="977.5" y="879.5" width="8" height="8" fill="#ff0000" stroke="#1a1a1a" stroke-width="1"/><text x="990.5" y="888" textLength="31.4" lengthAdjust="spacing">Vd (V)</text><rect x="1031.5" y="879.5" width="8" height="8" fill="#0000ff" stroke="#1a1a1a" stroke-width="1"/><text x="1044.5" y="888" textLength="31.4" lengthAdjust="spacing">Vq (V)</text><rect x="1085.5" y="879.5" width="8" height="8" fill="#f6a625" stroke="#1a1a1a" stroke-width="1"/><text x="1098.2" y="888" textLength="67.9" lengthAdjust="spacing">Vq_BEMF (V)</text><rect x="1175.8" y="879.5" width="8" height="8" fill="#6d5fd5" stroke="#1a1a1a" stroke-width="1"/><text x="1188.7" y="888" textLength="62.1" lengthAdjust="spacing">Vq_LdId (V)</text><rect x="1260.5" y="879.5" width="8" height="8" fill="#bf593e" stroke="#1a1a1a" stroke-width="1"/><text x="1272.8" y="888" textLength="62.4" lengthAdjust="spacing">Vd_LqIq (V)</text><rect x="1344.5" y="879.5" width="8" height="8" fill="#209fdf" stroke="#1a1a1a" stroke-width="1"/><text x="1357.5" y="888" textLength="63" lengthAdjust="spacing">Vq_RqIq (V)</text><rect x="1430" y="879.5" width="8" height="8" fill="#99ca53" stroke="#1a1a1a" stroke-width="1"/><text x="1443.2" y="888" textLength="62.7" lengthAdjust="spacing">Vd_RdIq (V)</text><rect x="1515" y="879.5" width="8" height="8" fill="#f6a625" stroke="#1a1a1a" stroke-width="1"/><text x="1528.2" y="888" textLength="37.9" lengthAdjust="spacing">VLd (V)</text><rect x="1576" y="879.5" width="8" height="8" fill="#6d5fd5" stroke="#1a1a1a" stroke-width="1"/><text x="1588.4" y="888" textLength="37.8" lengthAdjust="spacing">VLq (V)</text><clipPath id="c4"><rect x="751.5" y="911.2" width="1127.0" height="118.4"/></clipPath><g clip-path="url(#c4)"><path d="M753 957.7l.5 0l1.5 2.7l2 3.3l2 3.5l2 3.7l2 3.2l2 3.4l2 3.3l2 3.6l2 3.4l2-.1l2 0l2-.2l2-.1l2-.1l2 .3l2-.1l2-.2l2 0l2 0l2 0l2 .3l2-.3l2-.1l2 .2l2 .1l2 0l2-.4l2 .3l2-.1l2-.2l2-.1l2 .2l2 .2l2-.1l2 .1l2 0l2-.3l2 .1l2 0l2-.1l2 .2l2 .1l2 .1l2-.2l2-.2l2 .4l2-.1l2 0l2-.3l2 .1l2-.1l2 .2l2 0l2 .1l2-.4l2 .5l2-.3l2 .3l2-.2l2 .1l2 0l2 .2l2-.2l2-.1l2 .2l2-.4l2 .2l2-.1l2 0l2-.3l2 .1l2 0l2 .1l2-.3l2 .1l2 .2l2 0l2 .3l2-.1l2 0l2-.2l2-.1l2 .1l2 .2l2-.2l2-.2l2 .1l2-.2l2 .2l2-.1l2 .1l2 .1l2 0l2-.2l2 .2l2-.1l2-.3l2 0l2 .4l2 .1l2-.1l2-.2l2-.1l2 .3l2-.1l2 .1l2 0l2-.4l2 .1l2 .2l2-.1l2 .2l2-.3l2 .1l2-.2l2 .1l2 0l2 .3l2-.2l2 .2l2-.3l2-.2l2 0l2-.1l2 .4l2-.3l2-.5l2 .2l2 0l2-.2l2 .1l2 .1l2 .1l2-.2l2 .1l2 .3l2 .2l2-.2l2-.1l2 .2l2 .3l2-.1l2-.1l2 0l2 .1l2-.1l2 0l2 .2l2-.2l2 .4l2 0l2-.2l2 .2l2 .1l2 .1l2-.4l2 .3l2-.1l2-.3l2 0l2 .1l2-.2l2-.2l2 .2l2-.2l2 .4l2-.4l2 .5l2 0l2-.1l2 0l2-.2l2 .2l2-.2l2-.3l2 .4l2-.3l2-.1l2 .3l2-.5l2 .3l2-.5l2 .6l2-.1l2 0l2 0l2-.4l2 .5l2 .2l2-.5l2 .1l2 .2l2-.4l2 .1l2 0l2-.1l2-.2l2 .1l2 .2l2-.3l2 .3l2-.1l2 .1l2 .1l2 .2l2 0l2 .1l2 0l2-.2l2-.4l2 .4l2-.2l2-.1l2-.5l2 .2l2-.4l2 .1l2-.2l2 .6l2-.5l2 .3l2 .3l2-.5l2 .5l2-.2l2 0l2-.1l2 .2l2 .2l2 .1l2-.2l2-.1l2 .4l2-.1l2 0l2 .1l2 .3l2-.3l2 .2l2 .1l2-.1l2 .2l2-.3l2-.3l2 0l2 .5l2-.2l2 .1l2-.5l2 .5l2-.3l2 .3l2-.5l2 .5l2-.3l2 .1l2-.4l2 .3l2-.3l2 .1l2 .1l2-.1l2-.3l2 .4l2 .1l2-.5l2 .2l2-.2l2 .5l2-.3l2 0l2-.3l2-.1l2 .5l2-.3l2 .1l2 .3l2 .1l2-.4l2-.1l2 .6l2-.1l2-.4l2 .4l2-.3l2 .1l2-.3l2 0l2 .6l2-.1l2-.1l2 .4l2-.6l2 .5l2-.4l2-.1l2 .2l2 .2l2-.1l2-.5l2 .3l2 .2l2 0l2-.5l2 .5l2-.4l2 .1l2 .1l2 .2l2-.1l2 .1l2-.3l2 .3l2 .2l2-.2l2-.1l2 .6l2-.1l2-.1l2 .2l2-.1l2-.1l2 .5l2-.7l2 .5l2-.5l2-.3l2 .4l2-.5l2-.1l2-.2l2 .2l2 0l2-.4l2-.1l2 .2l2-.3l2 .1l2 .1l2 0l2-.2l2 .5l2 .4l2-.2l2 .2l2 .1l2-.1l2 .2l2 .1l2 .2l2-.2l2-.5l2-.1l2 .1l2 .2l2-.4l2 .1l2-.1l2 .1l2 .2l2-.2l2 .4l2-.1l2-.1l2-.1l2-.1l2 .4l2 0l2-.4l2 .6l2-.3l2 .4l2-.1l2-.4l1.6 0l0 6.2l-1.6-.3l-2 .4l-2 .1l-2-.2l-2 .1l-2-.1l-2 .3l-2-.3l-2-.4l-2 .2l-2-.3l-2 .3l-2 0l-2 .1l-2-.1l-2-.1l-2-.3l-2 .4l-2-.1l-2-.3l-2 .7l-2-.1l-2-.1l-2 .3l-2-.1l-2 .4l-2-.4l-2-.2l-2 0l-2 .6l-2 0l-2-.1l-2 .3l-2-.1l-2-.4l-2 .6l-2 .3l-2-.2l-2-.3l-2 .6l-2-.2l-2-.2l-2-.5l-2 0l-2 0l-2-.3l-2-.3l-2-.2l-2 .1l-2-.3l-2 .5l-2 0l-2 .1l-2-.1l-2-.4l-2 .1l-2 .2l-2-.2l-2 .2l-2-.3l-2-.2l-2 .2l-2 .3l-2-.1l-2-.2l-2-.1l-2 .1l-2-.3l-2 .4l-2-.2l-2-.3l-2 .2l-2 .2l-2-.1l-2 0l-2 .1l-2-.3l-2 .3l-2-.1l-2 .2l-2-.1l-2 .3l-2-.5l-2 .4l-2-.5l-2-.1l-2 0l-2-.1l-2 .4l-2-.2l-2 .4l-2 .3l-2-.1l-2-.1l-2 .2l-2 .3l-2-.2l-2-.2l-2 .1l-2-.2l-2 .2l-2 0l-2-.3l-2 .3l-2-.3l-2 .2l-2 .2l-2-.2l-2-.1l-2-.2l-2 .2l-2-.5l-2 .1l-2 .3l-2-.2l-2 .1l-2 .4l-2 0l-2-.2l-2 .2l-2 0l-2 0l-2 0l-2-.1l-2-.1l-2 .2l-2-.5l-2 .2l-2 0l-2 0l-2-.4l-2 0l-2 .3l-2-.1l-2 0l-2-.1l-2 .3l-2 0l-2 .2l-2 .3l-2-.1l-2-.4l-2 .5l-2-.5l-2 0l-2-.3l-2 .1l-2 .3l-2-.1l-2 .2l-2-.3l-2 .5l-2-.2l-2-.2l-2 .4l-2-.4l-2 .5l-2-.2l-2-.2l-2 .1l-2 .1l-2-.3l-2 .1l-2-.3l-2 .2l-2 0l-2 .2l-2-.3l-2 .1l-2-.2l-2 0l-2 .1l-2 0l-2 .1l-2 .2l-2-.2l-2 0l-2-.3l-2 .5l-2 0l-2-.2l-2-.1l-2 .2l-2 .2l-2 .1l-2-.2l-2 .2l-2 0l-2-.1l-2 .2l-2 .1l-2-.3l-2-.4l-2 .3l-2-.3l-2 .2l-2-.2l-2-.2l-2 .2l-2 .1l-2-.5l-2 .4l-2-.4l-2 0l-2 .4l-2-.5l-2 .3l-2 .3l-2 0l-2 .1l-2-.1l-2-.2l-2 .2l-2-.3l-2 .1l-2-.1l-2 .3l-2-.2l-2 .2l-2-.2l-2-.3l-2 .1l-2 .2l-2-.4l-2-.1l-2 0l-2 .1l-2 .1l-2-.2l-2 .5l-2-.1l-2-.1l-2 .3l-2 0l-2-.3l-2 .1l-2 .1l-2 0l-2 0l-2 .1l-2-.3l-2 .2l-2 .4l-2 0l-2-.3l-2-.2l-2-.3l-2 .3l-2-.2l-2-.1l-2-.1l-2 .4l-2-.2l-2-.1l-2 .3l-2-.1l-2-.4l-2 .4l-2-.2l-2 .1l-2 .1l-2-.4l-2 .5l-2-.1l-2-.2l-2 .2l-2-.1l-2-.1l-2 0l-2 .2l-2 .1l-2-.2l-2 .1l-2-.1l-2 0l-2-.2l-2-.1l-2 .3l-2-.2l-2 .2l-2 0l-2-.2l-2 .1l-2 0l-2-.2l-2 .2l-2 .2l-2 .1l-2-.3l-2-.1l-2 .2l-2-.2l-2 .2l-2-.3l-2 .2l-2 .1l-2-.1l-2-.1l-2 .3l-2 0l-2-.4l-2-.1l-2 .1l-2 .2l-2-.1l-2-.2l-2 .2l-2-.1l-2 .2l-2-.2l-2 .3l-2 0l-2-.1l-2 0l-2 0l-2-.1l-2 .1l-2 .1l-2-.4l-2 .4l-2-.4l-2 .3l-2 .2l-2 0l-2 .1l-2-.1l-2 0l-2-.1l-2 .3l-2-.1l-2-.1l-2-.3l-2 .1l-2 0l-2-.2l-2 .2l-2-.2l-2 .3l-2-.1l-2 0l-2 0l-2-.1l-2-.1l-2 .3l-2 0l-2 0l-2-.3l-2-.1l-2 0l-2 .1l-2-.2l-2 .2l-2-.2l-2 0l-2 0l-2-.1l-2 .3l-2-.3l-2 .3l-2 0l-2-.1l-2 .1l-2-.2l-2 .1l-2 .1l-2 0l-2-3.6l-2-3.2l-2-3.8l-2-3.3l-2-3.6l-2-3.2l-2-3.4l-2-3.4l-1.5-2.7l-.5-.1z" fill="#ff0000"/><path d="M753 959.3l.5 0l3.5 6l4 6.8l4 6.8l4 6.9l2 3.4l2 0l4 0l4 0l4 0l4 0l4 0l4 0l4 0l4 0l4 0l4 0l4 0l4 0l4 0l4 0l4 0l4 0l4 0l4 0l4 0l4 0l4 0l4 0l4 0l4 0l4 0l4 0l4 0l4 0l4 0l4 0l4 0l4 0l4 0l4 0l4 0l4 0l4 0l4 0l4 0l4 0l4 0l4 0l4 0l4 0l4 0l4 0l4 0l4 0l4 0l4 0l4 0l4 0l4 0l4 0l4 0l4 0l4 0l4 0l4 0l4 0l4 0l4 0l4 0l4 0l4 0l4 0l4 0l4 0l4 0l4 0l4 0l4 0l4 0l4 0l4 0l4 0l4 0l4 0l4 0l4 0l4 0l4 0l4 0l4 0l4 0l4 0l4 0l4 0l4 0l4 0l4 0l4 0l4 0l4 0l4 0l4 0l4 0l4 0l4 0l4 0l4 0l4 0l4 0l4 0l4 0l4 0l4 0l4 0l4 0l4 0l4 0l4 0l4 0l4 0l4 0l4 0l4 0l4 0l4 0l4 0l4 0l4 0l4 0l4 0l4 0l4 0l4 0l4 0l4 0l4 0l4 0l4 0l4 0l4 0l4 0l4 0l4 0l4 0l4 0l4 0l4 0l4 0l4 0l4 0l4 0l4 0l4 0l4 0l4 0l4 0l4 0l4 0l4 0l4 0l4 0l4 0l4 0l4 0l4 0l4 0l4 0l4 0l4 0l4 0l4 0l4 0l4 0l4 0l4 0l4 0l4 0l4 0l4 0l4 0l4 0l4 0l4 0l4 0l4 0l4 0l4 0l4 0l1.6 0" fill="none" stroke="#ff0000" stroke-width="3" stroke-linejoin="round"/><path d="M1502.6 988l.4-6.6l.4-7.7l1.6-8l2-5.1l2-4.1l2-3.4l2-2.4l2-2l2-1.6l2-1.5l2-1l2-.8l2-.5l2-.8l2-.4l2-.2l2-.3l2 0l2-.3l2-.1l2 .1l2 .2l2 .3l2 .4l2 .3l2 .5l2 .5l2 .9l2 .8l2 .8l2 .7l2 1l2 .8l2 1.1l2 1.3l2 1.1l2 1.1l2 1.1l1 .4l1 .4l2 1.2l2 1.1l2 1l2 1.1l2 .8l2 .8l2 .9l2 .9l2 .9l2 .5l2 .3l2 .1l2 0l2 .2l2-.2l2 0l2 .1l2-.4l2 0l2-.4l2-.6l2-.3l2-.3l2-.6l1 0l1-.1l2-.4l2-.5l2-.3l2-.4l2-.4l2-.3l2-.5l2-.5l2-.2l2-.3l2-.5l2-.1l2-.2l2-.1l1-.2l1 .2l2-.1l2-.1l2-.2l2 .2l2-.2l2 .1l2 0l2-.2l2-.1l2 .3l2 .1l2-.1l2 .3l2-.2l2 .3l2 0l2 .1l2 0l2 .2l2 .1l2-.1l2 .1l2 .1l2 .1l2 .1l2 .1l2 0l2-.2l2 .1l2 0l2 .2l2-.1l2-.2l2 0l2 .1l2 0l2 0l2 0l2 0l2 .2l2 .1l2 0l2-.2l2 .2l2 0l2-.2l2 .2l2-.1l2 0l2-.2l2 .2l2-.2l2 0l2 .1l2-.1l2 0l2 0l2 .1l2 .1l2-.2l2 .2l2-.1l2-.1l2 0l2 .1l2-.2l2 .1l2-.1l2 0l2 .1l2-.1l2 0l2-.1l2 .2l2-.1l2 0l2 0l2 .1l2-.1l2 .1l2 0l2-.2l2 .1l2-.1l2-.1l2 .2l2 .1l2 0l2-.1l2 .1l2 0l2-.2l2 0l2 .1l2 0l2 .1l2-.2l2 .2l2 0l2 0l2-.1l2 .2l2-.2l2 .1l2-.1l2 0l2-.1l2 0l2 0l2 .1l0 2.6l-2-.2l-2 .1l-2 .1l-2 .1l-2 .2l-2 .1l-2-.2l-2 .2l-2-.1l-2 0l-2 0l-2 .1l-2 0l-2-.1l-2 0l-2-.2l-2 0l-2 0l-2 .2l-2-.1l-2 0l-2 .1l-2 .1l-2-.2l-2 .3l-2-.2l-2 .1l-2 0l-2-.1l-2 .1l-2-.1l-2-.2l-2 .1l-2-.1l-2 .2l-2 0l-2 .1l-2-.3l-2 .2l-2-.2l-2 .1l-2 .1l-2-.1l-2 0l-2-.1l-2 0l-2 .1l-2-.2l-2 .2l-2-.1l-2-.1l-2 .1l-2-.1l-2 0l-2 0l-2 0l-2 .3l-2 0l-2 .1l-2 0l-2-.1l-2-.1l-2 .2l-2-.2l-2 .2l-2-.2l-2-.1l-2 .1l-2-.1l-2 .1l-2 .1l-2-.3l-2 0l-2 .1l-2-.1l-2 .2l-2-.1l-2 0l-2 0l-2-.1l-2 .2l-2-.1l-2-.1l-2 .2l-2 0l-2-.3l-2 .1l-2 0l-2-.2l-2 .3l-2-.3l-2-.2l-2 .2l-2-.4l-2 .2l-2-.1l-2-.3l-2 .1l-2 0l-2-.3l-2 0l-2 .1l-2 0l-2 .1l-2-.2l-2 0l-2 .1l-2 .2l-2-.1l-2 .1l-1 0l-1-.1l-2 .4l-2 .1l-2 .2l-2 .3l-2 .7l-2 0l-2 .6l-2 .4l-2 .1l-2 .4l-2 .6l-2 .3l-2 .3l-2 .6l-1 .1l-1 .2l-2 .2l-2 .7l-2 .4l-2 .4l-2 .1l-2 .5l-2-.1l-2 0l-2 .1l-2-.1l-2-.2l-2 .2l-2-.4l-2 0l-2-.5l-2-.8l-2-1l-2-.6l-2-.9l-2-1l-2-.9l-2-1l-2-1.1l-2-1l-1-.5l-1-.8l-2-1.2l-2-1.1l-2-1.1l-2-1.2l-2-.9l-2-1l-2-.9l-2-.8l-2-.9l-2-.5l-2-.7l-2-.5l-2-.5l-2-.3l-2-.5l-2-.1l-2-.1l-2-.2l-2 .3l-2 0l-2 0l-2 .3l-2 0l-2 .5l-2 .7l-2 .5l-2 .7l-2 .9l-2 1.5l-2 1.7l-2 1.7l-2 2.6l-2 3.5l-2 4.1l-2 5.1l-1.6 7.9l-.4 7.9l-.4 6.4z" fill="#ff0000"/><path d="M1502.6 989.2l.8-14.2l1.6-7.9l2-5.1l2-4.2l4-5.8l4-3.6l4-2.4l4-1.5l4-1l2-.2l2-.1l4-.1l4-.1l4 .3l4 .8l2 .4l2 .5l4 1.4l4 1.7l2 .9l2 .9l4 2.2l4 2.3l3 1.6l1 .5l4 2.2l4 2l4 1.8l4 1.6l4 1.3l2 .3l2 .1l4 .1l4 .1l2 0l2-.1l4-.5l4-.8l4-.9l1-.2l3-.6l4-.8l4-.9l4-.7l4-.7l4-.6l4-.5l3-.2l1 0l4-.1l4-.1l4 0l2 0l2 0l4 .1l4 .2l4 .2l4 .1l2 .1l2 0l4 .1l4 .1l4 .1l4 .1l4 0l4 .1l4 0l4 0l4 0l4 0l4 0l4 0l4 0l4 0l4 0l4 0l4 0l4 0l4 0l4 0l4 0l4 0l4 0l4 0l4 0l4 0l4 0l4 0l4 0l4 0l4 0l4-.1l4 0l4 0l4 0l4 0l4 0l4 0l4 0l4 0l4 0l4 0l4-.1l4 0l4 0l4 0" fill="none" stroke="#ff0000" stroke-width="2.8" stroke-linejoin="round"/><path d="M753 957.7l2 .1l2 0l2 .2l1 .3l1 0l2 0l2 .1l2 .3l2-.1l2 0l2 .1l2 .1l2 .2l2 .3l2 .5l1 .1l1 .3l2 .2l2 .3l2 .4l2 .3l2 .5l2 .3l2 .2l2 .1l2 .5l2 .2l2 0l2 .1l2 .4l1-.1l1 .5l2-.2l2 .4l2-.2l2 .1l2-.1l2 .2l2-.1l2 0l2-.2l1 0l1 .1l2 .2l2-.3l2 .6l2-.4l2 .2l2 0l2-.4l2-.1l2 .3l2 .2l2 .1l2-.2l2-.3l2 .6l2-.1l2-.2l2 .3l2 .2l2-.2l2 .2l2 .3l2-.2l2-.4l2 .2l2 .1l2 .1l2-.5l2 .5l2-.3l2 .2l2 0l2-.1l2 .1l2 0l2 .1l2 .1l2 .1l2-.4l2-.1l2 .6l2-.1l2 0l2-.6l2 .2l2-.4l2 .4l2-.4l2 .2l2-.3l2 .6l2-.4l2 .4l2-.4l2 .2l2 .3l2 0l2-.3l2 0l2 .3l2-.1l2 .1l2-.4l2 .3l2-.5l2 .2l2 .3l2-.3l2 .4l2-.2l2 .2l2-.6l2 .5l2-.5l2 .4l2 0l2-.6l2 .4l2 .1l2-.1l2 0l2 0l2-.5l2 .5l2-.2l2-.4l2-.3l2-.2l2 0l2 .3l2 .3l2 0l2 .2l2-.3l2-.1l2 .2l2 .6l2 0l2 0l2-.3l2 .1l2 .3l2-.5l2 .2l2-.2l2 0l2 .3l2-.4l2 0l2 .6l2-.3l2-.1l2 0l2 .2l2-.3l2 .6l2-.5l2 .3l2-.4l2 .2l2-.2l2 0l2 .1l2 .1l2 .2l2-.3l2 .4l2 .1l2-.1l2-.4l2 0l2 .1l2-.2l2 .3l2 .1l2-.1l2-.4l2-.4l2-.1l2 0l2 .2l2 0l2-.2l2-.2l2 .4l2 .3l2-.4l2 .4l2 0l2 .4l2 0l2 0l2-.5l2 .2l2-.1l2 .2l2 .2l2-.6l2 .4l2 0l2-.4l2 .4l2-.1l2-.5l2 0l2 .2l2-.1l2 .1l2-.2l2 .5l2-.3l2 0l2-.1l2 .3l2-.4l2 .1l2 .2l2 .1l2-.2l2 0l2 .2l2-.3l2 0l2 .6l2-.4l2-.2l2 .4l2 0l2 .3l2-.1l2-.2l2 0l2-.2l2 .2l2-.4l2 .2l2-.2l2 .4l2-.4l2 .4l2 .2l2-.2l2 .1l2-.1l2-.3l2 .1l2 .2l2-.3l2 .5l2-.1l2-.1l2 .1l2-.7l2 .2l2 .4l2-.6l2 .2l2 .6l2 .1l2-.3l2 .6l2-.6l2-.1l2 .6l2-.7l2 .4l2-.6l2 .3l2 0l2 0l2-.3l2-.1l2-.2l2-.2l2 .2l2-.3l2 .3l2 0l2 0l2-.1l2 .4l2 0l2 .7l2-.6l2 .1l2 .2l2 0l2-.4l2 .4l2-.5l2 .2l2-.1l2-.2l2 .4l2 .1l2 .1l2-.6l2 .2l2 .2l2 .2l2-.6l2 0l2-.1l2 .6l2-.4l2 .6l2-.6l2 .4l2 .2l2-.4l2 .4l2 0l2 .3l2-.3l2 .3l2 .1l2-.2l2-.5l2 0l2 .2l2-.2l2 .1l2-.5l2 .6l2-.8l2 .4l2-.5l2 .1l2-.3l2 .1l2-.3l2 0l2 .4l2-.3l2 .3l2 0l2 0l2-.4l2-.2l2 0l2 .3l2 .7l2-.5l2 .1l2 .6l2 .2l2-.6l2 .3l2 .3l2 .5l2-.2l2-.3l2 .2l2-.3l2-.2l2 0l2-.1l2 .4l2 0l2-.2l2 .1l2-.4l2 .4l2 .1l2-.4l2 .2l2-.1l2 .5l2 0l2 0l2-.2l2 .3l2 0l2-.3l2-.1l2 .2l1.6 .4l.4 3.3l.4 4.8l1.6 3l1 .9l1 .4l2 .2l1 .1l1 .3l2 0l1 .1l1 .1l2-.6l2-.7l1-.1l1-.5l2-1.3l2-1.7l2-1.6l2-1.9l1-.7l1-.8l2-1.5l2-1.7l2-1.7l2-1.5l2-1.6l2-1.2l1-.7l1-.4l2-1.2l2-1.2l2-.7l2-1.1l1-.4l1-.2l2-.6l2-.8l2-.5l2-.3l1-.3l1 0l2-.1l2-.2l2-.1l2-.1l1-.1l1 .2l2 .1l2 .1l2 .6l2 .2l1 .2l1 .2l2 .4l2 .4l2 .7l2 .6l2 .5l2 .6l2 .4l2 .7l2 .3l2 .5l2 .4l2 .2l2 .3l2 .5l2 .1l2 .2l2 .4l2 .1l1 .1l1-.1l2 .3l2 .1l2-.1l2 .1l2 .1l2-.2l2 .2l2-.1l2 .3l1-.1l1 0l2-.2l2-.1l2-.1l2 0l2-.1l2-.2l2 0l2 0l2-.2l1 0l1 .1l2-.1l2 0l2-.1l2 .2l2-.1l2 .1l2-.1l2 .2l2-.2l2 0l2 .1l2 0l2 0l2 0l2 0l2-.1l2 .2l2 0l2-.2l2 .1l2-.2l2 0l2 .2l2-.1l2-.1l2-.1l2-.1l2 0l2 .2l2 0l2-.1l2-.1l2 .2l2-.3l2 .3l2 0l2-.2l2 0l2 .1l2 .1l2 0l2 .2l2-.2l2 .2l2 0l2-.2l2 .1l2-.2l2 0l2 .1l2 0l2-.3l2 0l2 .2l2-.2l2 .1l2-.1l2-.1l2 .1l2-.1l2 0l2-.2l2 .3l2-.2l2 0l2 .1l2-.1l2 0l2 0l2 .1l2-.1l2 .2l2-.1l2 .1l2 0l2-.1l2 .1l2 .2l2-.2l2 .2l2-.1l2 .1l2-.2l2 .1l2-.2l2 .1l2-.1l2 0l2 .2l2-.1l2-.1l2 .1l2 0l2 0l2 .1l2-.2l2 0l2 0l2 .1l2 .1l2 0l2 0l2-.1l2-.1l2 .1l2 0l2-.1l0 2.8l-2 .2l-2-.1l-2 0l-2 .1l-2-.2l-2 0l-2 .2l-2-.1l-2 0l-2-.1l-2 .1l-2 0l-2 .1l-2-.1l-2 0l-2 .2l-2-.1l-2-.1l-2 .1l-2-.2l-2 0l-2 .1l-2-.1l-2 .1l-2 .1l-2 0l-2-.1l-2 0l-2 0l-2 .1l-2 .1l-2-.2l-2 0l-2 .1l-2-.1l-2 .1l-2 0l-2 0l-2 0l-2 0l-2-.1l-2 0l-2 .1l-2-.1l-2-.1l-2 0l-2-.1l-2 .2l-2-.2l-2-.1l-2 .3l-2-.2l-2 .2l-2 .2l-2-.1l-2 .2l-2-.1l-2 0l-2-.1l-2 .1l-2-.1l-2 .1l-2-.1l-2-.1l-2 0l-2 .1l-2 .1l-2-.1l-2 .1l-2-.1l-2-.1l-2 .2l-2 0l-2 .1l-2 0l-2-.1l-2 .2l-2-.1l-2-.1l-2 .2l-2-.1l-2-.1l-2 .2l-2-.2l-2-.1l-2 .2l-2 0l-2-.3l-2 .2l-2-.2l-2 .3l-2 0l-2-.2l-2 0l-2 .3l-2-.1l-2 0l-2 .1l-2-.2l-2 .2l-2-.2l-2 .1l-2 .1l-2-.2l-2 .1l-2-.2l-2 .3l-1-.1l-1-.1l-2 .1l-2 .3l-2 0l-2 0l-2 .3l-2 0l-2 .2l-2-.2l-2 .1l-1 .3l-1-.3l-2 .1l-2 .2l-2-.3l-2 .1l-2 0l-2-.1l-2-.2l-2 .1l-2-.1l-1 0l-1-.1l-2-.1l-2-.2l-2-.3l-2-.2l-2-.3l-2-.4l-2-.3l-2-.7l-2-.5l-2-.5l-2-.4l-2-.6l-2-.7l-2-.5l-2-.4l-2-.6l-2-.3l-2-.5l-1-.3l-1 .1l-2-.4l-2-.3l-2 0l-2-.3l-1-.1l-1 0l-2 .1l-2 .1l-2 .1l-2 .1l-1 0l-1 .3l-2 .2l-2 .6l-2 .8l-2 .6l-1 .4l-1 .3l-2 .9l-2 .6l-2 1l-2 1.2l-1 .7l-1 .4l-2 1.4l-2 1.7l-2 1.6l-2 1.7l-2 1.5l-2 1.6l-1 .9l-1 .9l-2 1.5l-2 1.9l-2 1.5l-2 1.1l-1 .5l-1 .2l-2 .7l-2 .5l-1 .2l-1-.1l-2 0l-1-.1l-1-.1l-2-.4l-1-.5l-1-.6l-1.6-3.2l-.4-2.2l-.4-1.6l-1.6-.7l-2 0l-2 .5l-2 0l-2-.1l-2-.1l-2 .3l-2-.6l-2 .6l-2-.7l-2 .4l-2 .1l-2-.2l-2-.1l-2-.4l-2-.2l-2 .2l-2-.3l-2 .5l-2-.3l-2 .1l-2 .3l-2-.5l-2 .4l-2 .4l-2-.3l-2 .2l-2 0l-2-.1l-2 .1l-2 .4l-2-.1l-2 .8l-2-.8l-2 .4l-2-.3l-2 .6l-2-.5l-2 .6l-2-.2l-2-.7l-2 .4l-2 .1l-2-.1l-2-.6l-2-.2l-2 .4l-2 .1l-2-.5l-2 .1l-2 .1l-2-.2l-2 .3l-2-.2l-2-.2l-2-.1l-2 .1l-2 .1l-2-.2l-2-.5l-2 .2l-2 .1l-2 0l-2-.4l-2 .2l-2 .4l-2 0l-2-.1l-2 0l-2-.2l-2 .3l-2 0l-2 0l-2 .1l-2-.3l-2 .2l-2 .3l-2-.2l-2-.5l-2 .6l-2-.4l-2 .3l-2-.2l-2 .1l-2-.1l-2-.1l-2-.1l-2 .2l-2-.3l-2 .6l-2-.1l-2 .2l-2 0l-2 .5l-2 0l-2 0l-2 .2l-2 .2l-2-.5l-2-.2l-2 .2l-2-.1l-2-.4l-2-.1l-2 .2l-2 0l-2-.1l-2 .1l-2 .5l-2-.4l-2 .3l-2 0l-2-.2l-2 .2l-2-.1l-2-.2l-2 .4l-2 0l-2 .2l-2-.3l-2 .1l-2-.4l-2 .5l-2-.6l-2-.4l-2-.2l-2 .4l-2 .2l-2-.5l-2 0l-2-.2l-2 .4l-2-.3l-2-.3l-2 .3l-2 .4l-2-.1l-2-.5l-2 .8l-2 .2l-2 0l-2-.1l-2-.6l-2 .1l-2 .1l-2 .1l-2-.6l-2 .6l-2-.4l-2 .4l-2 .3l-2 0l-2-.2l-2 .2l-2 .5l-2-.1l-2-.1l-2-.3l-2 .1l-2 0l-2-.2l-2 .3l-2 0l-2-.1l-2-.4l-2 .4l-2 .1l-2-.2l-2 .1l-2-.1l-2-.5l-2 0l-2 0l-2 0l-2-.2l-2-.2l-2 .3l-2-.2l-2 .6l-2 .1l-2-.4l-2 .1l-2 .5l-2 .1l-2-.4l-2-.1l-2 .5l-2 0l-2 .4l-2-.2l-2-.3l-2 .2l-2 0l-2 0l-2-.5l-2-.2l-2-.2l-2 0l-2-.1l-2 .2l-2 .2l-2 0l-2 .1l-2-.4l-2 .6l-2-.6l-2 .2l-2 .2l-2 .2l-2-.1l-2-.4l-2 0l-2 .2l-2-.2l-2-.4l-2-.2l-2 .4l-2 0l-2-.1l-2 0l-2-.3l-2 .3l-2 .2l-2-.1l-2-.2l-2-.1l-2 .2l-2-.3l-2 .1l-2 0l-2-.1l-2-.1l-2 .1l-2 .2l-2 .1l-2 .5l-2 .1l-2 .2l-2-.3l-2 .4l-2-.1l-2 .6l-2 .1l-2 .3l-2-.2l-2 0l-2-.4l-2 .2l-2 .1l-2-.1l-2-.4l-2-.6l-2 .1l-2-.1l-2 0l-2 .1l-2-.1l-2-.6l-2 .7l-2-.2l-2-.3l-2-.1l-2 .4l-2 .1l-2-.4l-2 .3l-2-.2l-2 .3l-2-.5l-2 .6l-2 0l-2-.2l-2 0l-2-.1l-2-.3l-2 0l-2 0l-2-.1l-2-.4l-2-.2l-2 .5l-2-.5l-2 .3l-2-.3l-2 0l-2 .4l-2 .1l-2 .1l-2-.2l-2 .4l-2-.3l-2 .1l-2-.2l-2 .6l-2 0l-2 .1l-2-.4l-2 .1l-2-.2l-2-.2l-2 0l-2 0l-2 0l-2 .5l-2-.4l-2 .3l-2-.4l-2 .4l-2-.4l-2 0l-2-.1l-2-.3l-2 .2l-2 .3l-2-.3l-2-.1l-2 .2l-2 0l-2 0l-2 .4l-2-.1l-2 .2l-2-.3l-2 .3l-2-.1l-2 0l-2 0l-2 .4l-2-.2l-2 .3l-2 .3l-2-.2l-2 .1l-2-.1l-2-.1l-2-.4l-1-.2l-1 .1l-2-.4l-2 .1l-2 .1l-2-.5l-2-.4l-2 0l-2 0l-2-.5l-2-.5l-1-.1l-1 .1l-2-.7l-2 0l-2-.2l-2-.6l-2-.3l-2-.1l-2-.2l-2-.6l-2-.2l-2-.4l-2-.8l-2-.5l-2-.3l-1-.1l-1-.3l-2-.4l-2-.3l-2-.1l-2-.1l-2-.1l-2-.1l-2-.2l-2 0l-2-.3l-2-.1l-1 .1l-1-.2l-2 0l-2-.2l-2-.2z" fill="#0000ff"/><path d="M753 959.3l4 .3l3 .2l1 0l4 .2l4 .1l4 .1l2 .1l2 .2l4 .8l1 .2l3 .6l4 .8l4 .8l2 .3l2 .3l4 .6l4 .6l4 .4l1 .1l3 .3l4 .3l4 .3l4 .2l4 .1l1 0l3 0l4 0l4 0l4 0l4 0l4 0l4 0l4 0l4 .1l4 0l4 0l4 0l4 0l4 0l4 0l4 0l4 0l4 0l4 0l4 0l4 0l4 0l4 0l4 0l4 0l4 0l4 0l4 0l4 0l4 0l4 0l4 0l4 0l4 .1l4 0l4 0l4 0l4 0l4 0l4 0l4 0l4 0l4 0l4 0l4 0l4 0l4 0l4 0l4 0l4 0l4 0l4 0l4 0l4 0l4 0l4 0l4 0l4 0l4 0l4 0l4 0l4 0l4 0l4 0l4 0l4 0l4 0l4 0l4 0l4 0l4 0l4 0l4 0l4 0l4 0l4 0l4 0l4 0l4 0l4 0l4 0l4 0l4 0l4 0l4 0l4 0l4 0l4 0l4 0l4 0l4 0l4 0l4 0l4 0l4 0l4 0l4 0l4 0l4 0l4 0l4 0l4 0l4 0l4 0l4 0l4 0l4 0l4 0l4 0l4 0l4 0l4 0l4 0l4 0l4 0l4 0l4 0l4 0l4 0l4 0l4 0l4 0l4 0l4 0l4 0l4 0l4 0l4 0l4 0l4 0l4 0l4 0l4 0l4 0l4 0l4 0l4 0l4 .1l4 0l4 0l4 0l4 0l4 0l4 0l4 0l4 0l4 0l4 0l4 0l4 0l4 0l4 0l4 0l4 0l4 0l4 0l4 0l4 0l4 0l4 0l4 .1l4 0l4 0l4 0l4 0l4 0l4 0l4 0l1.6 0l.8 6.4l1.6 3l1 .8l3 .9l1 .1l3 .2l1 0l3-.5l3-1l1-.4l4-2.9l4-3.4l1-.8l3-2.4l4-3.3l4-3l3-2l1-.6l4-2.1l4-1.7l1-.4l3-1l4-1.2l3-.5l1-.1l4-.3l4-.2l1 0l3 .2l4 .6l3 .5l1 .2l4 .8l4 1l4 1l4 1.1l4 1.1l4 .8l4 .6l4 .5l4 .3l1 .1l3 .1l4 .2l4 .1l4 .1l4 0l1 0l3 0l4-.2l4-.2l4-.2l4-.1l1 0l3 0l4 0l4-.1l4 0l4 0l4 0l4 0l4-.1l4 0l4 0l4 0l4 0l4 0l4-.1l4 0l4 0l4 0l4 0l4 0l4 0l4 0l4-.1l4 0l4 0l4 0l4 0l4 0l4 0l4 0l4 0l4 0l4 0l4 0l4-.1l4 0l4 0l4 0l4 0l4 0l4 0l4 0l4 0l4 0l4 0l4 0l4 0l4 0l4 0l4 0l4 0l4 0l4 0l4 0l4 0" fill="none" stroke="#0000ff" stroke-width="3" stroke-linejoin="round"/><path d="M753 959.3l.5 0l5.5-2l6-1.8l6-1.5l6-1.4l3-.6l3-.6l6-1.2l6-1.1l5-.8l1-.1l6-.9l6-.8l6-.7l6-.7l6-.6l6-.7l3-.3l3-.3l6-.6l6-.6l6-.6l6-.5l6-.6l6-.4l1-.1l5-.4l6-.4l6-.3l6-.4l6-.4l6-.3l6-.3l6-.4l5-.3l1-.1l6-.3l6-.4l6-.4l6-.4l6-.4l6-.4l6-.3l5-.3l1-.1l6-.3l6-.3l6-.3l6-.3l6-.2l6-.3l6-.3l6-.3l4-.2l2-.1l6-.3l6-.4l6-.3l6-.3l6-.4l6-.3l6-.4l6-.3l6-.3l6-.4l5-.2l1 0l6-.3l6-.3l6-.3l6-.2l6-.3l6-.3l6-.2l6-.2l6-.3l6-.2l4-.2l2-.1l6-.2l6-.3l6-.2l6-.2l6-.3l6-.2l6-.2l6-.2l6-.3l6-.2l3-.1l3-.1l6-.2l6-.3l6-.2l6-.2l6-.2l6-.2l6-.2l6-.2l6-.2l6-.2l2-.1l4-.1l6-.2l6-.2l6-.2l6-.2l6-.2l6-.2l6-.1l6-.2l6-.2l6-.2l1 0l5-.1l6-.2l6-.2l6-.1l6-.2l6-.2l6-.1l6-.2l6-.2l6-.1l6-.2l5-.1l1 0l6-.2l6-.2l6-.1l6-.2l6-.2l6-.1l6-.2l6-.1l6-.2l6-.1l6-.1l5-.1l1 0l6-.1l6-.1l5 0l1 0l6 0l6 0l6 0l6 0l6 0l6 0l6 0l6 0l6 0l6 0l6 0l6 0l6 0l6 0l6 0l6 0l6 0l6 0l6 0l6 0l6 0l6 0l6 0l6 0l6 0l6 0l6 0l6 0l6 0l6 0l6 0l6 0l6 0l6 0l6 0l6 0l6 0l6 0l6 0l6 0l6 0l6 0l6 0l6 0l6 0l6 0l6 0l6 .1l6 0l6 0l6 0l6 0l6 0l6 0l6 0l6 0l6 0l6 0l6 0l2 0" fill="none" stroke="#f6a625" stroke-width="3.0" stroke-linejoin="round"/><path d="M753 957.7l.5 .2l1.5 .9l2 1.2l2 .9l2 .8l2 .8l2 .6l2 .6l2 .7l2 .7l2 .6l2 .4l2 .9l2 .4l2 .6l2 .7l2 .6l2 .5l2 .6l1 0l1 .5l2 .5l2 .5l2 .7l2 .7l2 .5l2 .4l2 .9l2 .6l2 .5l1 .3l1 .1l2 .3l2 .5l2 .4l2 .5l2 .3l2 .2l2 .5l2 0l2 .3l2 .2l2 0l2 .2l2 .2l2 .1l2 .4l2 .2l2 .3l2 .2l2 .5l2 .2l2 .2l2 .4l2-.1l2 .2l1 .4l1 .1l2-.1l2 .5l2 .2l2 .2l2 0l2 .3l2 .2l2 0l2 .4l2 .3l2 0l2 .1l2 .3l2 .1l2 .3l2 0l2 .2l2 .1l2 .4l2-.1l2 .1l2 .1l2 .3l2 .3l2-.1l2 .2l2 .3l2-.1l2 .1l2 0l2 .5l2-.1l2 0l2 .3l2 .3l1 .1l1 0l2 .1l2 .1l2 .2l2 0l2 .3l2-.1l2 .2l2-.3l2 .1l2 .1l2 .2l2-.2l2 .3l2 .1l2-.1l2 .4l2 .2l2 .2l2-.1l2 .3l2-.1l2 .3l2-.1l1 .2l1-.2l2 .1l2 .2l2 .1l2-.1l2 .6l2-.2l2 .2l2 .4l2-.4l2 .1l2 .1l2 0l2 .5l2-.3l2 .4l2-.3l2 .7l2 .1l2-.5l2 .5l2-.2l2 .3l2 .2l2 .1l2-.1l2 .3l2 .4l2-.3l2 .3l2-.2l2 .3l2-.1l2 .2l2 .4l2-.4l2 .4l2-.1l2 .2l2 .3l2 0l2-.2l2 .4l2-.1l2-.3l2 .2l2 0l2-.1l2 .2l2 .6l2-.2l2 .3l2-.2l2 .5l2-.1l2-.2l2 .1l2 .1l2 0l2-.1l1 .2l1-.1l2 .1l2 .4l2 0l2-.3l2 .1l2-.1l2 .2l2-.4l2 .1l2-.2l2 0l2 .6l2-.3l2 .7l2-.1l2 .5l2-.3l2 .6l2-.3l2 .3l2 .4l2-.1l2 .4l2 .1l2-.4l2 .3l2 0l2 .2l2 0l2-.2l2 .3l2-.1l2-.2l2 .1l2 .1l2 0l2 .4l2 .3l2 0l2 0l2-.4l2 .3l2-.4l2 .5l2-.1l2 0l2-.1l2 .1l2-.1l2 .6l2 .4l2 .2l2 .4l2 .2l2-.3l2-.2l2 0l2 .3l2-.3l2-.1l2 .9l2-.5l2 .4l2 .2l1 0l1 .4l2 .3l2-.4l2-.2l2 0l2 0l2 .2l2-.3l2 .6l2 .2l2-.2l2 .2l2-.5l2 .6l2-.5l2 .5l2 .1l2-.3l2 .5l2-.2l2 .8l2-.5l2 .1l2-.6l2 0l2 .1l2-.2l2 .2l2 0l2 .4l2-.2l2 .2l2 .1l2 .6l2-.1l2-.4l2 .1l2 .6l2 0l2-.3l2 0l2 .1l2 .2l2 .4l2 .1l2-.1l2 0l2-.1l2-.1l2 .3l2 .6l2 0l2-.4l2 .7l2 .2l2-.5l2 .4l2 .5l2-.6l2 .4l2-.1l2 0l2 .1l2 .2l2 0l1 0l1 .1l2-.6l2 .6l2-.1l2-.1l2 .2l2 .5l2 0l2 .1l2-.1l2 .3l2-.3l2 .1l2 .1l2-.1l2 .1l2 .6l2 .3l2-.2l2-.4l2 .1l2 .6l2-.2l2-.2l2-.3l2 .5l2-.4l2 .2l2-.7l2 .7l2-.3l2-.2l2 0l2 .3l2-.8l1 .7l1-.4l2 .4l2-.3l2 .8l2 .5l2 0l2 .6l2-.8l2 .6l2 .6l2-.8l2 .2l2 .1l2 .6l2-.7l2-.1l2 0l2 .8l2-.1l2-.1l2 .2l2-.3l2-.1l2-.1l2-.2l2-.1l2 .5l2 .2l2 .4l2-.5l2 0l2 0l2 1.1l2 .4l2 .2l2-.2l1.6 .1l.4 4.9l.4 5.2l1.6 2.2l1 .5l1 .1l2 .5l2 .1l2-.2l2-.5l2-.6l2-.6l2-.9l2-.8l2-1l2-1l2-1.2l2-1.4l2-1.1l2-1.4l2-1.1l2-1.5l2-1l2-1.3l2-1.4l2-1.5l2-1.3l2-1.2l2-1.4l2-.9l2-1.1l2-.8l2-.9l2-.6l2-.5l2-.8l2-.2l1-.1l1-.1l2-.2l2 .2l2-.1l2-.1l2 .2l2 .1l2 0l2 .4l2 .6l2 .6l2 .6l2 .4l2 .6l2 .3l2 .3l2 .6l2 .5l1 .3l1 .1l2 .3l2 .4l2 .6l2 .2l2 .4l2 .1l2 .3l2 .2l2 0l2-.1l2 .5l2-.1l2 .3l2-.3l2 .2l1-.2l1 .1l2 .1l2-.3l2 .2l2 .2l2-.1l2-.1l2 .1l2 .1l2-.3l2-.2l2-.1l2 0l2 0l2-.1l2 0l2-.1l2 .1l2-.1l2-.1l2 .2l2 .1l2 0l2 0l2-.1l2 .1l2 .2l2-.1l2 .1l2-.3l2 .2l2-.1l2-.3l2-.1l2 .4l2-.2l2 .1l2 0l2 0l2-.2l2 .1l2 0l2 0l2 .1l2-.1l2 .2l2-.2l2-.1l2 .1l2 .2l2-.4l2 .2l2-.1l2 .1l2-.1l2 .3l2-.5l2 0l2 0l2-.2l2-.2l2 .2l2 .1l2-.2l2 .1l2-.1l2 .4l2 .1l2-.4l2 .1l2-.1l2 .3l2-.2l2 0l2 .1l2 0l2-.5l2 .3l2-.1l2-.3l2 0l2 .2l2 0l2-.1l2 0l2-.1l2 .5l2 .1l2-.1l2 0l2-.2l2 .2l2 .2l2 .1l2-.2l2 0l2-.1l2 .1l2-.1l2 .2l2 .2l2-.3l2 .3l2-.3l2-.1l2 .1l2 0l2-.3l2 0l2 .1l2 .3l2-.6l2 .4l2-.2l2 .4l2 0l2 .1l2-.4l2 .1l2 .1l0 4.9l-2 .1l-2-.1l-2 .3l-2-.1l-2 .4l-2 0l-2-.3l-2-.1l-2 .5l-2 .1l-2 .1l-2-.3l-2 .3l-2 0l-2-.2l-2-.3l-2 0l-2-.1l-2 .2l-2-.3l-2 .2l-2-.3l-2 .2l-2 0l-2 .3l-2-.2l-2 .2l-2 0l-2-.3l-2 .1l-2 .3l-2-.2l-2-.2l-2 0l-2 .3l-2-.1l-2-.2l-2 .2l-2-.3l-2 0l-2 .4l-2-.3l-2 .4l-2-.3l-2 .2l-2-.2l-2 .3l-2 .2l-2-.2l-2-.1l-2 .3l-2-.3l-2 .2l-2 .1l-2-.1l-2-.1l-2-.2l-2 0l-2 .1l-2-.6l-2 .1l-2 .1l-2-.3l-2 .3l-2-.3l-2 .4l-2-.2l-2 .2l-2-.3l-2 .1l-2-.2l-2 .3l-2-.1l-2-.1l-2 0l-2-.4l-2 .4l-2-.1l-2-.2l-2 .1l-2 .1l-2 0l-2 .1l-2-.3l-2 .2l-2 .1l-2-.2l-2 0l-2 .1l-2 .1l-2-.1l-2 .1l-2-.3l-2 .2l-2-.1l-2 .1l-2-.2l-2 .1l-2-.3l-2 .3l-2 0l-2-.2l-2 .3l-2-.2l-2 .4l-2-.3l-2 0l-2 .1l-2 .3l-2-.2l-2 .1l-2 .2l-2-.3l-2 .1l-2 .1l-2-.2l-2 .4l-2 .1l-2-.1l-1 .2l-1 .1l-2 0l-2-.3l-2-.4l-2-.1l-2-.1l-2-.1l-2-.4l-2 0l-2-.4l-2-.1l-2-.2l-2-.5l-2-.4l-2-.4l-2-.5l-1-.3l-1-.3l-2-.2l-2-.4l-2-.7l-2-.4l-2-.6l-2-.5l-2-.1l-2-.9l-2-.2l-2-.6l-2-.4l-2 .2l-2-.1l-2 .1l-2 .2l-2 0l-2-.3l-1 0l-1 0l-2 .7l-2 .6l-2 .5l-2 1l-2 .8l-2 .9l-2 .9l-2 .9l-2 1.4l-2 1.1l-2 1.3l-2 1.3l-2 1.2l-2 1.5l-2 1.6l-2 1.2l-2 1.4l-2 1.3l-2 1.5l-2 1l-2 1.3l-2 1l-2 1.2l-2 .9l-2 .6l-2 .7l-2 .1l-2 .2l-2 .4l-2-.1l-2-.3l-1-.4l-1-.5l-1.6-2.2l-.4-2.5l-.4-2l-1.6-.5l-2-.6l-2 .3l-2-.2l-2-.1l-2-.2l-2-.3l-2-.1l-2-.3l-2-.1l-2-.4l-2 .7l-2-.7l-2 .5l-2-.6l-2-.1l-2 .6l-2 0l-2-.2l-2 0l-2 .5l-2-.4l-2 0l-2-.2l-2-.1l-2 .7l-2 .1l-2-.4l-2-.3l-2-.3l-2 1l-2-.4l-2-.7l-2 .7l-2 .1l-2-.9l-1-.2l-1 .3l-2 .5l-2-.6l-2-.4l-2-.2l-2 .1l-2 .5l-2-.6l-2-.4l-2 .4l-2-.5l-2-.2l-2 .1l-2-.5l-2-.4l-2-.4l-2-.2l-2-.1l-2 .2l-2 .1l-2-.5l-2-.4l-2 .7l-2-.4l-2-.1l-2 .2l-2-.3l-2 .5l-2-.2l-2-.3l-2 .2l-2-.3l-2 0l-2 .4l-2 0l-1-.3l-1 0l-2 .2l-2-.5l-2 .4l-2 0l-2-.2l-2-.5l-2 .2l-2-.2l-2-.2l-2-.1l-2 .3l-2-.7l-2-.1l-2 .1l-2 0l-2-.2l-2 .4l-2-.8l-2 0l-2 .4l-2-.3l-2 .1l-2-.3l-2-.2l-2 .2l-2-.4l-2 0l-2 .8l-2-.4l-2 .4l-2-.1l-2-.5l-2-.1l-2 .4l-2-.9l-2 .1l-2 .5l-2-.2l-2-.4l-2-.1l-2-.5l-2 0l-2 .1l-2-.1l-2-.6l-2 .5l-2-.5l-2-.1l-2 .4l-2-.1l-2-.3l-2 0l-2-.4l-2 .4l-2-.2l-2-.6l-2 .5l-2-.6l-2 .4l-2-.2l-2-.8l-2 .4l-2-.3l-2-.6l-1 .1l-1 .1l-2 .2l-2-.3l-2 .4l-2 0l-2-.2l-2-.7l-2 .5l-2-.5l-2-.2l-2 0l-2 .5l-2 0l-2-.5l-2 .3l-2 .4l-2 0l-2-.2l-2-.6l-2 .4l-2-.7l-2-.4l-2 0l-2 .2l-2-.6l-2 .5l-2-.3l-2 .3l-2-.4l-2 0l-2 0l-2-.3l-2 .3l-2-.1l-2 0l-2-.1l-2-.6l-2-.5l-2 .5l-2-.8l-2 .3l-2-.2l-2-.3l-2-.2l-2 .1l-2-.3l-2 .1l-2 .4l-2 0l-2-.3l-2 .3l-2-.3l-2-.2l-2 0l-2-.3l-2 .5l-2-.9l-2 .4l-2-.2l-2-.1l-2-.1l-2-.1l-2-.3l-2-.3l-2-.4l-1 .3l-1-.1l-2-.1l-2-.2l-2 .2l-2-.1l-2-.4l-2-.1l-2-.1l-2 .2l-2 0l-2-.2l-2-.4l-2-.2l-2-.3l-2 .3l-2-.2l-2-.6l-2 .2l-2 0l-2-.1l-2-.1l-2-.2l-2-.3l-2 .1l-2 .1l-2-.3l-2 .3l-2-.6l-2 .2l-2-.1l-2-.3l-2 .2l-2-.3l-2-.1l-2 0l-2 .2l-2 0l-2 0l-2 .2l-2-.6l-2 .5l-2-.2l-2-.2l-2-.1l-2-.7l-2-.2l-2 .1l-2 0l-2-.5l-2-.1l-2-.3l-2 .1l-2 0l-2-.3l-2-.1l-2-.2l-2 0l-2-.2l-2 0l-2 .1l-1-.3l-1-.2l-2 0l-2-.4l-2 0l-2-.2l-2 .2l-2-.2l-2-.1l-2-.3l-2-.2l-2 .2l-2 0l-2-.2l-2-.1l-2 0l-2-.1l-2-.4l-2 .1l-2-.1l-2-.5l-2 .1l-2-.3l-2-.1l-2 .1l-1-.3l-1-.2l-2 0l-2-.3l-2 .1l-2-.2l-2 0l-2-.3l-2-.1l-2 .1l-2-.3l-2-.1l-2 0l-2-.4l-2 .1l-2-.2l-2-.4l-2-.1l-2-.2l-2-.3l-2-.2l-2 .2l-2-.4l-2-.2l-2-.2l-2-.1l-2-.1l-2-.1l-2-.2l-2-.1l-2-.3l-2-.4l-2 0l-2-.4l-2-.1l-2-.2l-2-.1l-1 0l-1 .1l-2-.4l-2-.2l-2 0l-2-.3l-2-.2l-2-.3l-2 0l-2-.4l-2-.2l-2-.4l-2-.4l-2-.1l-2-.5l-2-.2l-2-.5l-2 0l-2-.6l-2-.3l-2-.3l-2-.2l-2-.2l-2-.6l-2-.4l-2-.5l-1-.1l-1-.2l-2-.6l-2-.6l-2-.4l-2-.7l-2-.8l-2-.5l-2-.8l-2-.7l-2-.5l-1-.3l-1-.2l-2-.4l-2-.7l-2-.4l-2-.7l-2-.6l-2-.3l-2-.8l-2-.5l-2-.7l-2-.7l-2-.5l-2-.9l-2-.6l-2-.7l-2-.8l-2-1l-2-1.2l-1.5-1l-.5-.1z" fill="#6d5fd5"/><path d="M753 959.3l.5 0l3.5 2.2l4 1.7l4 1.4l4 1.3l2 .6l2 .6l4 1.2l4 1.2l4 1.1l4 1.1l1 .3l3 .9l4 1.3l4 1.3l4 1.2l4 1.1l1 .2l3 .6l4 .7l4 .7l4 .6l4 .6l4 .5l2 .3l2 .3l4 .5l4 .5l4 .5l4 .5l4 .4l3 .3l1 .1l4 .4l4 .4l4 .3l4 .4l4 .3l4 .3l4 .3l4 .3l2 .2l2 .2l4 .3l4 .3l4 .3l4 .3l4 .3l4 .3l4 .2l4 .3l3 .2l1 .1l4 .2l4 .3l4 .2l4 .3l4 .2l4 .2l4 .3l4 .2l4 .2l4 .2l4 .2l3 .2l1 .1l4 .2l4 .2l4 .2l4 .1l4 .2l4 .2l4 .2l4 .2l4 .2l4 .2l4 .1l4 .2l4 .2l4 .2l4 .2l4 .1l4 .2l4 .2l4 .2l4 .2l4 .1l4 .2l4 .2l4 .2l4 .1l4 .2l4 .2l4 .2l4 .2l3 .1l1 0l4 .2l4 .2l4 .2l4 .2l4 .2l4 .2l4 .2l4 .1l4 .2l4 .2l4 .2l4 .2l4 .2l4 .2l4 .1l4 .2l4 .2l4 .1l4 .2l4 .2l4 .1l4 .2l4 .2l4 .1l4 .2l4 .1l4 .2l4 .1l4 .2l4 .2l4 .1l4 .2l1 0l3 .1l4 .2l4 .1l4 .2l4 .1l4 .2l4 .1l4 .2l4 .1l4 .1l4 .2l4 .1l4 .2l4 .1l4 .2l4 .1l2 .1l2 .1l4 .1l4 .2l4 .1l4 .2l4 .1l4 .2l4 .2l4 .1l4 .2l4 .1l4 .2l4 .1l4 .2l4 .1l4 .2l3 .1l1 0l4 .2l4 .1l4 .2l4 .1l4 .2l4 .1l4 .2l4 .1l4 .1l4 .2l4 .1l4 .2l4 .1l4 .1l4 .2l4 .1l4 .2l1 0l3 .1l4 .1l4 .1l4 .1l4 0l4 .1l4 0l4 .1l4 0l4 .1l4 .1l4 .1l4 .1l4 .2l4 .2l4 .3l4 .3l4 .3l1.6 .2l.8 7.5l1.6 2.5l1 .5l3 .4l2 .1l2-.1l4-.9l2-.5l2-.7l4-2l4-2.3l4-2.5l4-2.8l4-2.7l4-2.6l4-2.6l4-2.3l4-2l4-1.8l2-.7l2-.6l4-.9l1-.1l3 0l4-.1l4 0l4 .4l4 .9l4 .9l4 .9l4 1l4 .9l1 .2l3 .6l4 .8l4 .7l4 .4l4 .3l4 .2l4 .2l4 .1l1 0l3 0l4-.1l4 0l4-.1l4-.1l4 0l4 0l4-.1l4 0l4 0l4 0l4-.1l4 0l4 0l4 0l4 0l4 0l4 0l4 0l4 0l4 0l4 0l4 0l4 0l4 0l4 0l4 0l4 0l4 0l4 0l4 0l4 0l4 0l4 0l4 0l4 0l4 0l4 0l4 0l4 0l4 0l4 0l4 0l4 .1l4 0l4 0l4 0l4 0l4 0l4 0l4 0l4 0l4 0l4 0l4 0l4 .1l4 0l4 0l4 0l4 0" fill="none" stroke="#6d5fd5" stroke-width="3" stroke-linejoin="round"/><path d="M753 958l.5 0l1.5-2.6l2-3.4l2-3.5l2-3.2l2-3.5l2-3.4l2-3.4l2-3.3l2-3.1l2-.2l2 .3l2-.2l2 .3l2-.3l2-.1l2 0l2 0l2 .2l2-.3l2-.1l2-.1l2 .2l2-.1l2 .1l2 .2l2-.1l2-.1l2-.1l2 .3l2 0l2-.3l2 .4l2-.3l2-.1l2 .1l2 .2l2-.1l2-.1l2 .1l2 .1l2-.3l2-.3l2 .1l2 .1l2-.3l2 .3l2-.1l2 0l2-.1l2-.3l2 .5l2-.1l2-.3l2-.2l2 .5l2-.1l2-.4l2 .4l2-.2l2 .1l2 .2l2-.1l2 0l2 .1l2 .1l2 .1l2-.1l2 .1l2-.2l2 0l2-.4l2 .3l2-.3l2 0l2-.4l2 0l2 .1l2 .2l2-.2l2-.1l2 .1l2 .3l2 .1l2-.1l2 .3l2-.1l2-.1l2 .3l2-.3l2-.1l2 .1l2-.4l2-.2l2 0l2 .2l2 .1l2 0l2-.2l2 0l2-.3l2 0l2 0l2 .2l2 0l2-.1l2 .2l2-.5l2 .1l2 .7l2-.3l2 .1l2-.2l2 .2l2 .4l2 .1l2-.3l2-.1l2-.5l2 .5l2-.5l2 .1l2-.5l2 0l2-.3l2 .3l2-.4l2 .3l2 .4l2-.6l2-.4l2 .1l2 .4l2 .2l2-.5l2 .3l2 .7l2-.3l2 .6l2 0l2 .2l2 0l2-.2l2-.2l2 0l2-.4l2 0l2 .4l2-.3l2 0l2 .3l2-.1l2 .2l2 0l2-.1l2 .4l2-.3l2 0l2 0l2 .5l2 0l2-.6l2 .1l2 0l2 .2l2-.2l2 .1l2 0l2-.2l2 .4l2-.8l2 .3l2 .3l2-.3l2 0l2 .2l2-.4l2 .4l2-.3l2-.4l2 0l2 0l2-.1l2 .5l2 .4l2-.3l2 .4l2 0l2-.5l2-.1l2 .1l2-.4l2 .4l2-.4l2-.2l2 0l2 .3l2 0l2 0l2-.1l2-.2l2 .4l2-.4l2 .5l2 .2l2-.7l2 .6l2 .1l2-.4l2 0l2-.6l2 .4l2 .3l2-.2l2 .1l2-.2l2-.5l2 .1l2-.4l2 .7l2 0l2-.5l2 0l2 .2l2 1l2 .1l2-.5l2 .1l2 0l2 .3l2 .1l2-.5l2-.1l2-.3l2 0l2 .3l2-.3l2 .2l2 0l2 .6l2 0l2-.4l2-.1l2 .1l2-.1l2-.2l2-.2l2 .5l2-.1l2 .1l2-.3l2-.3l2-.1l2 .2l2-.5l2 .2l2-.4l2 .3l2 .3l2-.9l2 .3l2 0l2 .2l2 .1l2-.5l2-.1l2 .6l2-.1l2-.4l2 .6l2-.1l2 .2l2-.3l2 .1l2 .1l2 .4l2-.6l2-.2l2 .2l2 .4l2 .3l2-.2l2 .1l2-.1l2 .4l2-.2l2 .3l2-.1l2-.6l2 .5l2 .2l2-.1l2 0l2-.1l2-.2l2-.2l2 .3l2 .2l2-.2l2 .3l2-.3l2-.1l2 .3l2 .1l2-.3l2 .1l2 .2l2 .4l2 0l2-.2l2-.2l2 .7l2-.3l2 .2l2 .2l2-.8l2 .2l2 .4l2-.8l2-.1l2-.1l2 .1l2 .2l2-.3l2-.2l2 .2l2-.8l2-.3l2 .6l2-.1l2-.5l2 0l2-.3l2-.2l2-.1l2-.2l2 .7l2-.9l2 .4l2-.4l2 .5l2 .1l2 0l2 .7l2-.3l2 .6l2-.1l2 .3l2-.3l2-.2l2 .2l2 .3l2-.1l2 .3l2-.1l2 .2l2-.4l2 .6l2-.4l2 .4l2-.4l2 0l2 .3l2-.2l2-.5l2 .4l2-.4l2-.2l2-.1l2 .2l2-.1l2 .3l2 .6l2 0l2-.3l1.6 .5l0 7.5l-1.6 .7l-2 .1l-2-.7l-2 .1l-2 .1l-2 .6l-2-.3l-2-.1l-2-.1l-2 .4l-2-.7l-2 .2l-2 .3l-2-.5l-2 .3l-2 0l-2 .2l-2 0l-2-.5l-2 .2l-2-.3l-2-.1l-2-.2l-2 .5l-2 .2l-2 .2l-2-.3l-2 .1l-2 0l-2 1l-2-.1l-2 .5l-2 .3l-2-.6l-2 .2l-2 .1l-2-.7l-2 .7l-2 .3l-2-.5l-2-.2l-2 .1l-2-.9l-2-.3l-2 .1l-2 .1l-2 .1l-2-.1l-2-.6l-2-.3l-2 .4l-2 .2l-2-.2l-2-.1l-2-.3l-2 .7l-2-.6l-2 .5l-2-.1l-2 .5l-2 .1l-2 0l-2-.4l-2-.1l-2 .2l-2-.3l-2 .4l-2-.5l-2 .3l-2 .1l-2-.4l-2 .2l-2-.5l-2 .1l-2 .6l-2-.3l-2 .1l-2 0l-2-.2l-2 .2l-2 .2l-2 .3l-2-.7l-2 .1l-2-.3l-2 .1l-2 .7l-2-.7l-2 .5l-2 .3l-2-.1l-2-.1l-2 .4l-2 0l-2-.7l-2 .4l-2 0l-2 .6l-2-.3l-2 0l-2 .3l-2-.2l-2 .9l-2 0l-2 0l-2-.2l-2 .1l-2-.5l-2 .4l-2-.3l-2-1l-2 .2l-2-.2l-2-.4l-2 .1l-2-.1l-2 .2l-2-.8l-2 1l-2-.1l-2-.4l-2 .2l-2 .5l-2-.2l-2-.2l-2-.1l-2-.2l-2 .4l-2-.2l-2-.5l-2 .3l-2-.1l-2 .1l-2 .3l-2 .5l-2-.3l-2-.1l-2-.2l-2 .5l-2 .4l-2-.6l-2-.2l-2 .3l-2 .2l-2-.5l-2 .3l-2 .7l-2-.6l-2 .2l-2 .1l-2 .9l-2-.2l-2-.4l-2 .7l-2-.7l-2 .1l-2 .1l-2-.9l-2 0l-2 .1l-2 .4l-2-.6l-2 .3l-2-.3l-2 .2l-2-.6l-2 .4l-2-.1l-2 .1l-2-.1l-2-.7l-2 0l-2 .4l-2-.1l-2-.3l-2 .1l-2-.2l-2 .7l-2-.4l-2 .3l-2 .2l-2 .3l-2 .1l-2 .1l-2 0l-2 .5l-2 .3l-2 .1l-2-.5l-2 .1l-2-.7l-2-.2l-2 .3l-2-.7l-2-.3l-2 .3l-2-.3l-2 .3l-2 0l-2 .4l-2-.4l-2 .5l-2-.2l-2-.4l-2 .3l-2 0l-2-.2l-2 .2l-2-.6l-2 .5l-2-.1l-2-.4l-2 .1l-2 0l-2-.4l-2-.1l-2-.1l-2 0l-2-.4l-2 .3l-2 .3l-2-.2l-2-.1l-2 .3l-2-.2l-2 .3l-2-.2l-2 .1l-2 0l-2-.1l-2 .4l-2-.5l-2 .5l-2-.4l-2 .3l-2 0l-2-.3l-2 .6l-2 .2l-2-.6l-2 .8l-2 0l-2-.2l-2-.2l-2 .2l-2 .4l-2-.4l-2-.1l-2 .3l-2-.2l-2 .1l-2-.4l-2-.2l-2-.2l-2 .1l-2 0l-2 0l-2-.3l-2 0l-2 0l-2-.2l-2 .1l-2 .2l-2 .1l-2-.3l-2 .2l-2 .3l-2 .2l-2 .2l-2-.4l-2 .5l-2-.3l-2-.1l-2-.1l-2 .2l-2-.8l-2 .6l-2-.3l-2-.2l-2 .3l-2-.4l-2 .3l-2-.3l-2 0l-2 0l-2 .1l-2-.2l-2 .1l-2 .2l-2-.1l-2 .1l-2-.2l-2-.2l-2 .1l-2 .2l-2-.1l-2-.1l-2 .5l-2-.2l-2 .2l-2 .4l-2-.6l-2 .4l-2-.4l-2 .1l-2-.3l-2 .1l-2-.3l-2-.2l-2 .5l-2-.2l-2-.3l-2 .3l-2 0l-2-.4l-2 .3l-2-.2l-2-.1l-2 .4l-2-.2l-2 .2l-2-.2l-2 .2l-2-.2l-2 0l-2 .3l-2 0l-2-.4l-2 .4l-2-.3l-2 .4l-2-.2l-2 0l-2 0l-2 .2l-2-.1l-2-.2l-2 .1l-2-.4l-2 .2l-2-.2l-2 .1l-2-.1l-2-.1l-2 .1l-2-.1l-2 .3l-2 0l-2-.1l-2-.2l-2 0l-2-.1l-2 .1l-2 .2l-2-.2l-2-.2l-2 .3l-2-.1l-2-.2l-2 0l-2-.1l-2 0l-2-.1l-2 .1l-2-.2l-2 0l-2 3.5l-2 3.4l-2 3.1l-2 3.4l-2 3.3l-2 3.2l-2 3.2l-2 3.2l-1.5 2.5l-.5-.1z" fill="#bf593e"/><path d="M753 959.3l.5 0l3.5-5.8l4-6.6l4-6.7l4-6.6l2-3.3l2 0l4 0l4 0l4 0l4 0l4 0l4 0l4 0l4 0l4 0l4 0l4 0l4 0l4 0l4 0l4 0l4 0l4 0l4 0l4 0l4 0l4 0l4 0l4 0l4 0l4 0l4 0l4 0l4 0l4 0l4 0l4 0l4 0l4 0l4 0l4 0l4 0l4 0l4 0l4 0l4 0l4 0l4 0l4 0l4 0l4 0l4 0l4 0l4 0l4 0l4 0l4 0l4 0l4 0l4 0l4 0l4 0l4 0l4 0l4 0l4 0l4 0l4 0l4 0l4 0l4 0l4 0l4 0l4 0l4 0l4 0l4 0l4 0l4 0l4 0l4 0l4 0l4 0l4 0l4 0l4 0l4 0l4 0l4 0l4 0l4 0l4 0l4 0l4 0l4 0l4 0l4 0l4 0l4 0l4 0l4 0l4 0l4 0l4 0l4 0l4 0l4 0l4 0l4 0l4 0l4 0l4 0l4 0l4 0l4 0l4 0l4 0l4 0l4 0l4 0l4 0l4 0l4 0l4 0l4 0l4 0l4 0l4 0l4 0l4 0l4 0l4 0l4 0l4 0l4 0l4 0l4 0l4 0l4 0l4 0l4 0l4 0l4 0l4 0l4 0l4 0l4 0l4 0l4 0l4 0l4 0l4 0l4 0l4 0l4 0l4 0l4 0l4 0l4 0l4 0l4 0l4 0l4 0l4 0l4 0l4 0l4 0l4 0l4 0l4 0l4 0l4 0l4 0l4 0l4 0l4 0l4 0l4 0l4 0l4 0l4 0l4 0l4 0l4 0l4 0l4 0l4 0l4 0l1.6 0" fill="none" stroke="#bf593e" stroke-width="3" stroke-linejoin="round"/><path d="M1502.6 928.8l.4 4.4l.4 5.3l1.6 4.5l1 1.6l1 1.7l2 3.9l2 3.2l1 1l1 .9l2 1.8l1 .6l1 1.2l2 2.1l2 2.6l2 2.1l2 1.7l2 1.5l2 1.5l2 1.3l2 .8l2 .8l2 .6l2 .4l2 .4l2-.1l2-.1l2-.1l2-.1l2-.1l2-.3l2-.7l2-.8l2-.7l2-1l2-1l2-1l2-1l2-1l2-1.5l2-1l2-1.1l1-.7l1-.6l2-.7l2-1.2l2-.8l2-1.2l2-1l2-.7l2-.9l2-.8l2-1l2-.7l2-.3l2-.2l2-.1l2-.1l2-.4l2 0l2 0l2 .1l2 .1l2 .2l2 .3l2 .5l2 .1l2 .6l1 0l1 .4l2 .2l2 .4l2 .5l2 .5l2 .1l2 .4l2 .5l2 .3l2 .3l2 .4l2 .4l2 .1l2 .3l2 .1l1-.1l1 .1l2 0l2 .2l2 .1l2-.1l2 .3l2 .1l2 0l2 0l2-.1l2-.1l2-.2l2-.1l2-.1l2-.3l2-.1l2 0l2 .1l2 .2l2-.2l2 .1l2 0l2 .1l2 0l2 0l2 0l2-.3l2 .2l2 0l2-.2l2 .2l2-.1l2 .1l2-.2l2 0l2 .2l2 0l2 0l2-.1l2-.2l2 0l2 .1l2 .1l2 0l2-.1l2 .1l2 0l2-.3l2 .1l2 .1l2 0l2-.2l2 0l2 0l2 .2l2-.2l2 .1l2-.1l2 .1l2 0l2-.1l2 0l2 .1l2 .1l2-.2l2 .1l2-.1l2 .1l2 .2l2-.1l2-.1l2 0l2 .1l2-.1l2-.1l2 0l2 0l2 .2l2-.3l2 .1l2 .1l2-.1l2 .2l2-.2l2 .2l2-.1l2 0l2 .1l2-.3l2 0l2 .1l2-.2l2 0l2 .2l2-.2l2 .2l2-.1l2 .2l2-.1l2 .2l2-.2l2 0l2 .1l2-.1l2 0l2 0l2-.1l2 0l2 .1l2 .1l2 .1l0 2.4l-2 .1l-2 .1l-2-.1l-2 .1l-2-.1l-2 0l-2-.1l-2 0l-2 0l-2 .2l-2 0l-2-.2l-2 0l-2 0l-2 .2l-2 .1l-2-.1l-2 .1l-2 0l-2 0l-2-.1l-2-.2l-2 .1l-2-.1l-2 0l-2-.1l-2 .1l-2-.1l-2 .2l-2-.1l-2 0l-2 .2l-2-.2l-2 .1l-2 .1l-2 .1l-2-.3l-2 0l-2 .1l-2 .2l-2-.2l-2 0l-2-.1l-2 .2l-2 0l-2-.2l-2 0l-2 .2l-2-.1l-2 .1l-2-.2l-2 .3l-2 0l-2 0l-2 0l-2 0l-2 .2l-2-.2l-2 .1l-2 .1l-2-.1l-2-.1l-2-.2l-2 .2l-2 0l-2 .1l-2-.1l-2 .2l-2-.3l-2 .2l-2-.2l-2 .2l-2 0l-2 .1l-2-.1l-2 0l-2-.2l-2 .1l-2 .1l-2 0l-2-.2l-2 .1l-2 .2l-2-.3l-2 0l-2 .2l-2-.1l-2 .1l-2-.1l-2 .2l-2 0l-2 0l-2 0l-2 .2l-2 0l-2 .1l-2-.1l-2 .2l-2 .1l-2 .1l-2-.2l-2 0l-2 0l-2 0l-2 0l-2 .1l-2-.1l-2 0l-2-.3l-2 .2l-1-.1l-1-.1l-2 0l-2-.1l-2-.4l-2-.3l-2-.3l-2-.5l-2-.4l-2-.2l-2-.5l-2-.5l-2-.3l-2-.5l-2-.4l-2-.2l-1-.4l-1-.1l-2-.4l-2-.3l-2-.2l-2-.3l-2-.4l-2-.2l-2 .2l-2 0l-2 0l-2 .1l-2 .3l-2 .2l-2 .2l-2 .3l-2 .8l-2 .8l-2 .8l-2 1l-2 .8l-2 1l-2 .9l-2 1.3l-2 1l-2 .9l-1 .6l-1 .6l-2 .9l-2 1.3l-2 1.1l-2 1.2l-2 .9l-2 1l-2 .8l-2 1.1l-2 .7l-2 .8l-2 .6l-2 .4l-2 .1l-2 .2l-2 .2l-2 0l-2-.1l-2-.2l-2-.3l-2-.6l-2-.8l-2-1l-2-.9l-2-1.5l-2-1.9l-2-1.7l-2-2l-2-2.3l-2-2.3l-1-1l-1-.8l-2-1.7l-1-.7l-1-1.4l-2-3.1l-2-3.7l-1-2l-1-1.5l-1.6-4.3l-.4-5.5l-.4-4.2z" fill="#bf593e"/><path d="M1502.6 930.3l.8 9.7l1.6 4.3l1 1.7l3 5.7l3 4.3l1 .9l3 2.4l1 1l4 4.6l2 2.1l2 1.8l4 3.1l2 1.1l2 .9l4 1.5l4 .6l4-.1l4-.2l2-.2l2-.3l4-1.4l4-1.9l2-.9l2-.9l4-2.2l4-2.3l3-1.6l1-.5l4-2.1l4-2.1l4-1.8l4-1.9l4-1.5l2-.4l2-.2l4-.3l4-.2l2 0l2 .1l4 .4l4 .6l4 .7l1 .2l3 .5l4 .8l4 .8l4 .7l4 .6l4 .7l4 .5l3 .2l1 .1l4 .1l4 .2l4 .1l2 0l2 0l4-.1l4-.2l4-.2l4-.2l2 0l2 0l4 0l4 0l4-.1l4 0l4 0l4 0l4 0l4 0l4 0l4 0l4-.1l4 0l4 0l4 0l4 0l4 0l4 0l4 0l4 0l4 0l4 0l4 0l4 0l4-.1l4 0l4 0l4 0l4 0l4 0l4 0l4 0l4 0l4 0l4 0l4 0l4 0l4 0l4 0l4 0l4 0l4 0l4 0l4 0l4 0l4 0l4 0" fill="none" stroke="#bf593e" stroke-width="2.8" stroke-linejoin="round"/><path d="M755 957.2H779" stroke="#209fdf" stroke-width="1.5" fill="none"/><path d="M755 961.6L772 961" stroke="#99ca53" stroke-width="1.5" fill="none"/><path d="M753 958.8l2-.4l2 0l2-.2l2-.4l2-.3l2 .7l2-.2l2-.8l2 .7l2-.8l2 .1l2 .6l2-.3l2-.2l2-.1l2 .4l2-.5l2-.3l2 .8l2-1l2 .2l2 .6l2 .3l2-.1l2-.7l2-.1l2-.3l2 0l2 .4l2 0l2-.1l2 .3l2-.8l2 .2l2 0l2 0l2-.6l2 .9l2 .2l2-.3l2-.7l2 .1l2 1l2-.8l2 .5l2-1.4l2 .2l2 .2l2 0l2 .7l2-.1l2 .1l2-.7l2-.2l2 .7l2-.2l2 .8l2 .2l2-.3l2-.2l2-.3l2 .5l2-.6l2 .3l2 .8l2-.7l2 0l2-.6l2 .9l2-.7l2 .8l2-.5l2 .4l2-.4l2 .4l2-1.3l2 .9l2-.5l2 .8l2 .6l2-.8l2 .7l2-.4l2 .5l2-1l2 .9l2-1.1l2-.2l2 1l2-.7l2-.5l2-.1l2 .4l2-.2l2-.3l2 .4l2 0l2 .1l2 .4l2-.1l2 0l2-.5l2-.3l2 1l2-1.6l2 .1l2 1.5l2-1.1l2 1.5l2-1.4l2-.1l2 .7l2 .5l2-.3l2-.2l2 .9l2-.1l2-1.1l2 .5l2-.2l2-.6l2 0l2 .1l2-1.1l2 .9l2-.4l2 .2l2-.3l2 .2l2 .2l2 .2l2-1.9l2 1.3l2 0l2-.4l2-.1l2-.1l2 1.1l2 .6l2-1.2l2 .2l2 .9l2 .2l2-.7l2-.8l2 .5l2-.4l2 1.3l2-.8l2-.4l2 .2l2 1.3l2-.8l2-.1l2 .8l2-.6l2 1.2l2-1.5l2 0l2-.1l2 1.8l2-.8l2-.8l2 .4l2 .1l2 .3l2-.1l2 .4l2-.8l2-.3l2 .9l2-.3l2-.9l2 .9l2-.2l2 .2l2-.4l2 .1l2 .9l2-2.3l2 1.1l2-.5l2-1l2 1.1l2-.7l2 .1l2-.2l2 1l2-.6l2 .1l2-.6l2 1.3l2-.8l2 .5l2-1l2-.5l2 .5l2-.4l2 1.4l2-1.1l2 1.3l2 0l2-.5l2-.6l2 1.6l2-.8l2-1.4l2 .2l2 2.1l2-.4l2-.9l2 1.6l2-.8l2 .3l2 .1l2-.7l2 .7l2 .3l2-.7l2-1.9l2 1.7l2 .2l2-2.1l2 .1l2 2.1l2-.4l2-.7l2 .8l2-1l2-.3l2 .5l2 .1l2-.8l2 .5l2-.7l2 2.3l2-1.4l2 1.5l2-1.8l2 1.4l2-.8l2 1.6l2-1.7l2 .9l2-1l2 .2l2 1.4l2-.2l2-.5l2-1.2l2-.1l2 1.1l2-.8l2-.6l2 1.1l2-.1l2-.8l2 1.3l2-1.4l2-.4l2 .1l2 .4l2-1l2 .4l2 .1l2-.7l2 .3l2-.4l2 1.4l2 .2l2 1.1l2 0l2-2.2l2 0l2 1.8l2-.3l2-1.5l2 1.6l2-1.4l2 .7l2 .1l2-.4l2 .9l2-.4l2-.6l2-.7l2 1.2l2 1l2 .3l2-.7l2-.1l2-1.2l2 .9l2 0l2-.1l2 1.3l2-1.4l2 .6l2-.4l2 1.2l2-.4l2-1.2l2 1.9l2-.5l2 .1l2-1.1l2 .5l2 .7l2-1.1l2 .5l2 .9l2-.7l2-1.4l2 .8l2 .6l2-1.8l2 1.6l2-1.7l2 1.1l2 .6l2 .2l2-1.4l2 .3l2 1.2l2-1.8l2 1.7l2-1.9l2-.1l2 1.3l2-1.4l2-.6l2 .1l2 .5l2 1.3l2-2.1l2 .1l2 .6l2-.5l2-1l2 .7l2 2l2 .7l2-2.1l2 2.6l2-1.1l2-.8l2 1.3l2-.2l2-.7l2 1.1l2-1.1l2 .2l2 1.4l2-.4l2-.1l2-.5l2 .8l2-.2l2 0l2-.2l2-.1l2-.2l2 .4l2-1.2l2-.6l2-.1l2 .4l2-.8l2 .6l2 1.3l2 .5l2-2.3l2 1.8l2 .6l2 .5l2 1.5l2 .4l2-.7l2 .8l2-.2l2-.1l2-.5l2-.1l2 .9l2-.2l2-.6l2 .2l2 0l2 .3l2 .4l2-.9l2 .3l2 0l2 .3l2 0l2 0l2-.6l2 .4l2-.3l2 .1l2-.1l2 .9l2-.4l2 .3l2 0l2-.6l2 .4l2-.7l2 .6l2-.3l2 .6l2-.8l2 0l2-.1l2 .7l2 .2l2-.9l2 .4l2 .1l2-.2l2 .7l2-.1l2-.7l2 .5l2-.4l2 .2l2-.1l2 .2l2 .5l2-.3l2 .1l2 0l2 0l2-.2l2-.3l2 .3l2 .3l2-.2l2 0l2-.3l2 .6l2-.2l2-.1l2-.3l2-.1l2 .2l2 .2l2-.8l2-.1l2 .3l2 .4l2-.2l2-.2l2 .6l2-.7l2 .2l2 .4l2 .1l2-.3l2-.1l2 .2l2-.3l2-.2l2 .4l2-.4l2 .1l2-.1l2 .3l2 0l2-.7l2 .5l2 0l2-.2l2 .6l2-.3l2-.2l2-.2l2 0l2 .9l2-.2l2-.6l2 .5l2 .3l2-.3l2 .3l2 .1l2-.8l2 .6l2-.7l2 .1l2 .1l2 .5l2-.4l2 .4l2-.6l2 .2l2 .2l2 .5l2-.8l2 .8l2-.9l2 .6l2-.4l2-.1l2-.5l2 0l2 .1l2 .3l2 .2l2-.1l2-.8l2 1l2-.9l2 .7l2-.5l2 .5l2-.1l2 .5l2-.5l2 .3l2-.8l2 .6l2 .1l2-.7l2 1l2-1.2l2 1.1l2-.8l2 0l2 .6l2-.1l2-.8l2 .5l2 .1l2 .1l2-.3l2 .2l2-.4l2-.1l2-.2l2 .4l2 .5l2-.1l2-.4l2-.2l2 .6l2-.4l2-.2l2 1l2 0l2-.4l2-.3l2-.4l2 .5l2-.1l2 .2l2 .3l2-.9l2-.1l2 .6l2-.3l2-.5l0 4.8l-2 .7l-2-.1l-2 .3l-2-.2l-2-.6l-2 1l-2-.5l-2 .7l-2-.6l-2-.1l-2-.4l-2 .6l-2 .6l-2-1.3l-2 .7l-2 .3l-2-.8l-2 1l-2-.1l-2-.7l-2 .8l-2 0l-2-.2l-2-.6l-2 1l-2-.9l-2 .8l-2 0l-2-.7l-2-.3l-2 .3l-2 .8l-2 .1l-2-.9l-2-.2l-2 .9l-2-.6l-2 .1l-2 .7l-2-1l-2 0l-2 .2l-2-.2l-2 .7l-2 .1l-2-.5l-2-.2l-2 0l-2 0l-2-.2l-2 .9l-2 0l-2-.7l-2-.3l-2 1.2l-2-1l-2 .4l-2-.3l-2 .9l-2-.3l-2-.2l-2-.9l-2 .6l-2-.2l-2-.5l-2 0l-2 .2l-2 .3l-2-.4l-2 0l-2 .3l-2 0l-2 .2l-2-.2l-2 .2l-2-.5l-2 .2l-2 0l-2-.3l-2 .3l-2-.4l-2 .3l-2-.5l-2 .9l-2-.6l-2 .1l-2-.3l-2 .6l-2 .3l-2 .1l-2-.2l-2-.4l-2 .8l-2-.5l-2 .2l-2-.4l-2 .3l-2-.1l-2-.3l-2 0l-2 .2l-2 .2l-2-.1l-2-.5l-2 .2l-2-.4l-2 .7l-2-.4l-2-.1l-2 .7l-2-.6l-2 .1l-2-.2l-2 .5l-2-.4l-2 .8l-2-.2l-2-.3l-2-.3l-2 0l-2 0l-2-.3l-2 0l-2 .6l-2 .3l-2 .1l-2-.3l-2 .2l-2-.5l-2-.1l-2 .2l-2-.4l-2 .3l-2 .2l-2-.3l-2 .1l-2 .4l-2-.2l-2 .3l-2-.2l-2-.1l-2 .2l-2 .1l-2-.4l-2 .5l-2-.7l-2-.2l-2 .9l-2-.7l-2 .2l-2-.2l-2-.2l-2 .4l-2 .2l-2 0l-2 .2l-2-.6l-2 .6l-2-.8l-2 .2l-2-.1l-2 .7l-2-.6l-2-.1l-2 .2l-2-.4l-2 .9l-2-.5l-2-.2l-2 .6l-2-.4l-2 0l-2-.1l-2 .7l-2-.6l-2 0l-2 .3l-2 .2l-2 0l-2-.7l-2 .2l-2 .5l-2-.8l-2 .3l-2 0l-2-.3l-2 2.5l-2 1.1l-2-1.7l-2 1.2l-2 .4l-2-1.9l-2 0l-2 1.4l-2-1.1l-2 2l-2-1.6l-2 1.8l-2 .3l-2-1.5l-2 .6l-2-1.1l-2 1.9l-2-1l-2 .3l-2 .3l-2-.6l-2 0l-2-.7l-2-.1l-2 .8l-2 .7l-2-.2l-2 1l-2 .7l-2-2.3l-2 0l-2 0l-2 2.7l-2 .4l-2-1.1l-2-.4l-2 1.1l-2-.4l-2-1.3l-2 1.3l-2-1.5l-2 .3l-2 1l-2-.8l-2 1.1l-2-.3l-2-2.6l-2 .9l-2 1l-2-2.1l-2 .1l-2 1.4l-2-1.1l-2-.3l-2 1l-2-1.1l-2 1.4l-2-1.7l-2 .8l-2-.2l-2-.7l-2 .2l-2 1.8l-2-1.5l-2 1.7l-2 .2l-2-.2l-2 .3l-2-1.4l-2 1l-2-.4l-2 .5l-2 .5l-2-2.1l-2 1.5l-2-1.4l-2 1.6l-2-1.7l-2 1l-2-.7l-2-.9l-2 .1l-2-.2l-2 .1l-2-.6l-2 1.7l-2-.1l-2-1.6l-2 .6l-2 .1l-2 1l-2 .2l-2-1l-2 .9l-2 .2l-2-.8l-2-.4l-2 .7l-2 .4l-2 1.3l-2-.4l-2-1.1l-2 .7l-2-1.4l-2 .6l-2 .4l-2-.6l-2 1.7l-2-1.2l-2 .3l-2-1.6l-2 1.5l-2 .5l-2-2l-2-.2l-2 1.9l-2-2l-2 .2l-2 .6l-2 .6l-2-.5l-2-.3l-2-.2l-2 1.3l-2-1.5l-2 1.2l-2 .8l-2-1.3l-2 .8l-2-.7l-2-.5l-2-.1l-2 .6l-2 1.3l-2-.2l-2 0l-2 0l-2 .1l-2-.8l-2-.9l-2 1.1l-2-.3l-2-1l-2 .1l-2 .1l-2 .3l-2-.4l-2 1.4l-2-.5l-2-.2l-2 .3l-2 .9l-2 1.2l-2-2l-2 1.9l-2-1.2l-2-.1l-2 .3l-2-1.8l-2 .4l-2 .8l-2-.6l-2-1.2l-2 0l-2 2l-2-1.4l-2 1.6l-2-1.4l-2-.1l-2-.5l-2 .3l-2 1l-2-1.2l-2-.1l-2 .7l-2-.1l-2-.1l-2-.7l-2 1.1l-2-.7l-2 1.2l-2-.9l-2 .3l-2-.2l-2 1.5l-2-1.3l-2 .9l-2 .1l-2-1.6l-2-.5l-2 1.7l-2-.3l-2-1.1l-2 0l-2-.1l-2 1l-2-.1l-2 .8l-2 .1l-2 0l-2-.4l-2-1l-2-.7l-2-.2l-2 .8l-2 .8l-2-.1l-2 .1l-2-.1l-2 0l-2-1.2l-2 1.2l-2-.3l-2-.8l-2 0l-2 1.2l-2-1.6l-2 .9l-2-.4l-2 1.1l-2-1.6l-2 1.1l-2 0l-2 .7l-2-.4l-2-.1l-2 0l-2-.7l-2 1.1l-2-.2l-2-1.2l-2-.3l-2 .8l-2-.6l-2 .1l-2 .6l-2 1.1l-2 .1l-2-.7l-2-.6l-2 1l-2-.3l-2 .2l-2-1.1l-2 .4l-2 1l-2-.7l-2-.7l-2 1.2l-2-.5l-2-.2l-2 .3l-2-.5l-2-.1l-2-.3l-2-.5l-2 .6l-2-.1l-2-.6l-2 .2l-2-.4l-2-.1l-2 1.4l-2-.9l-2 .5l-2-1l-2 1.6l-2-1.5l-2 1.4l-2-.8l-2 .8l-2 0l-2-1.3l-2 .5l-2 .4l-2-.1l-2 .5l-2-.9l-2-.1l-2 .7l-2-1l-2 1.2l-2-.2l-2-.3l-2-.1l-2-1.2l-2 .9l-2-.5l-2-.2l-2 .5l-2 .1l-2-.7l-2 .5l-2 .6l-2-.1l-2 .3l-2 .2l-2-.8l-2 .5l-2 .3l-2-.5l-2-.8l-2 .6l-2 .5l-2-1l-2 0l-2 .2l-2-.2l-2 1l-2-.2l-2-.8l-2-.3l-2 .9l-2-.3l-2-.8l-2 1l-2-.6l-2-.3l-2 1.3l-2-1l-2 .4l-2 .6l-2-.3l-2-.5l-2-.4l-2 .8l-2 .3l-2 .3l-2-.2l-2-.5l-2 .3l-2 .3l-2-.6l-2 .9l-2-1.2l-2 .3l-2 .6l-2 .3l-2-.1l-2-.7l-2-.9l-2 0l-2 .8l-2-.1l-2 .2l-2-.6l-2-.2l-2 .5l-2 .2l-2-1.1l-2-.1l-2 .9l-2-.6l-2 .8l-2-.5l-2 .1l-2 0l-2-.1l-2-.1l-2-.3l-2 .1l-2 .2l-2-.9l-2 .2l-2 .4l-2 0l-2-.1l-2 .1l-2-.5l-2 0l-2 .4l-2-.4l-2 .2l-2-.4l-2-.4l-2-.1z" fill="#f6a625"/><path d="M753 958.6l2-.3l2 0l2-.2l2-.3l2 0l2 0l2 0l2-.1l2 0l2 .2l2-.2l2 .1l2-.5l2 .1l2 .1l2-.3l2-.2l2 .1l2-.1l2-.1l2-.1l2 .4l2-.4l2 .3l2 .1l2-.1l2 .3l2-.1l2-.2l2-.2l2 0l2-.3l2-.2l2 0l2 .3l2-.6l2 .1l2 0l2-.2l2 .3l2 .2l2-.3l2 .1l2-.3l2 .2l2 .1l2 0l2 0l2 .1l2 .3l2-.3l2 .3l2-.3l2 .3l2-.1l2 .1l2-.2l2 .1l2 0l2 0l2 .1l2-.2l2 .2l2-.2l2 .2l2-.1l2 0l2-.5l2 .1l2 0l2 .2l2-.4l2 .2l2 .2l2-.3l2 0l2 .1l2-.3l2 .4l2-.4l2 .6l2-.3l2 0l2 .4l2 .3l2-.1l2-.4l2 .1l2 .4l2-.2l2-.2l2 .1l2 .4l2-.7l2 0l2 0l2-.1l2-.1l2 .2l2-.4l2 .4l2-.8l2 .6l2-.6l2 .3l2 .2l2-.3l2 .4l2 0l2 0l2 .6l2-.2l2-.3l2 .3l2-.1l2 0l2-.3l2 0l2-.2l2 0l2-.4l2-.2l2 .1l2 .1l2-.5l2-.2l2 .7l2 0l2 .1l2-.7l2 .5l2 .2l2-.2l2 .1l2 .4l2 .3l2-.1l2-.1l2 .1l2 .3l2 0l2-.6l2 .5l2-.1l2-.2l2-.1l2 .6l2-.5l2 .5l2 0l2-.3l2 .4l2-.1l2 .1l2-.5l2 .2l2 .2l2-.4l2 .2l2-.4l2 .5l2-.3l2-.3l2 .1l2 .3l2-.4l2-.3l2 .7l2-.2l2-.6l2 .5l2-.4l2 0l2 .2l2-.2l2-.4l2-.4l2-.2l2 .3l2-.1l2-.3l2 .6l2-.5l2-.4l2 .8l2-.8l2 0l2 .4l2 .2l2 .1l2 .1l2 .1l2 .4l2 .2l2-.2l2 .3l2 .6l2 0l2-.1l2-.8l2 .4l2 .1l2-.7l2 .7l2-.3l2 .2l2-.3l2-.2l2 .2l2-.9l2-.1l2 .8l2-.8l2 .7l2-.3l2 0l2 .1l2 .2l2-.8l2 .3l2-.1l2-.4l2 .9l2 .1l2 .2l2 .1l2 .1l2-.6l2 .7l2 .1l2-.4l2-.2l2 .1l2-1l2 .7l2-.5l2 .5l2-.2l2 .3l2 .5l2-.1l2 .4l2-.2l2 .2l2 0l2-.7l2 .2l2 .2l2 .5l2-.2l2-.5l2-.3l2 .2l2 0l2 0l2 .3l2-.5l2-.4l2 0l2-.2l2-.1l2-.2l2-.3l2 .4l2-.4l2-.3l2 .9l2-.4l2-.4l2 .2l2 .8l2-.5l2-.3l2 .7l2-.2l2 .3l2 .1l2-.2l2-.4l2 .2l2 0l2 .2l2 .3l2 .5l2-.3l2 .5l2-.9l2 .6l2 .4l2 0l2-.4l2-.3l2 .6l2 0l2-.1l2-.4l2 .4l2 0l2 .4l2 .1l2-.4l2 .5l2-.9l2-.3l2 0l2 .1l2 0l2-.9l2 .6l2-.6l2 .3l2 .7l2-.8l2 1.2l2 0l2-.3l2 .3l2 0l2 .1l2-.3l2 .3l2 .1l2-.4l2-.8l2 .3l2-.3l2 .4l2 0l2-.3l2-.3l2-.7l2-.6l2 .1l2-.7l2 .5l2-.7l2 0l2 .1l2 .1l2 0l2 .1l2 .2l2 .1l2 .3l2 1.4l2 .3l2-1l2 1.2l2-.4l2-.1l2 .6l2-.3l2-.4l2 .9l2-.3l2-.1l2-.4l2 .6l2-.3l2-.4l2 1l2-.1l2-.2l2-.5l2 0l2-.3l2 .4l2-.2l2 .7l2-.9l2 .3l2 .6l2-.2l2 0l2 1.5l2 1.3l2-.3l2 0l2 .1l2-.2l2 .2l2 0l2 .1l2-.4l2 .2l2-.1l2-.1l2 .1l2 .2l2 0l2-.2l2 .2l2-.1l2-.3l2 .3l2-.1l2 .2l2-.3l2 .3l2-.1l2 .1l2 .1l2-.2l2-.2l2 .3l2-.1l2 .1l2 0l2-.2l2 .3l2-.2l2 0l2 .2l2-.1l2-.2l2-.2l2 .3l2-.2l2 0l2 .1l2 0l2 .1l2 .1l2-.3l2 .1l2 0l2 .3l2-.3l2 .3l2-.3l2 .1l2-.1l2 .2l2-.2l2 .1l2 0l2-.2l2 .1l2 .1l2 0l2 .2l2 .1l2 0l2 0l2-.2l2 0l2 .1l2 .1l2 0l2-.3l2 .2l2-.4l2 0l2 0l2 .2l2-.3l2 .3l2-.1l2-.3l2 .2l2 .2l2-.1l2-.1l2 .2l2 0l2-.1l2 .1l2-.2l2 0l2 .2l2 0l2 .2l2-.2l2 .1l2-.1l2 .1l2 .2l2 0l2 0l2-.2l2 .3l2-.1l2-.1l2-.2l2 .2l2-.1l2-.2l2 .3l2-.3l2 .3l2-.2l2 0l2-.3l2 .1l2 .1l2-.2l2 .4l2-.3l2 0l2 .1l2 .2l2-.3l2 0l2-.2l2 0l2-.1l2 .1l2 .1l2 0l2 .2l2-.2l2 .3l2-.1l2-.2l2 .1l2 0l2 0l2 .3l2-.3l2-.3l2 .1l2-.2l2 .5l2-.2l2 0l2 .1l2-.4l2 .1l2-.2l2-.2l2 0l2 .3l2 0l2-.4l2 .6l2-.2l2 .1l2 .1l2-.3l2 .2l2-.2l2 .6l2-.1l2-.3l2 .2l2 0l2-.2l2 .2l2 0l2-.1l2 .1l2-.5l2 .3l2-.1l2-.2l2 .1l2 .1l2-.1l2-.1l2 .4l2-.2l2 .1l0 4.9l-2-.2l-2-.3l-2 0l-2 .1l-2 .4l-2-.2l-2 .4l-2-.3l-2 .4l-2-.2l-2 .1l-2-.2l-2 .3l-2 .2l-2-.1l-2-.4l-2-.1l-2 .2l-2-.1l-2 .1l-2 .3l-2-.1l-2-.1l-2 .1l-2-.2l-2 .1l-2-.3l-2 .3l-2-.1l-2-.1l-2 0l-2-.2l-2 0l-2 .4l-2-.1l-2-.2l-2-.4l-2 .4l-2-.4l-2 0l-2-.1l-2 0l-2 .4l-2 .1l-2-.4l-2 .2l-2 .3l-2 .1l-2 0l-2 .1l-2 0l-2-.4l-2 .3l-2 0l-2 .1l-2-.2l-2-.3l-2-.1l-2 .3l-2-.2l-2-.4l-2 .2l-2-.5l-2 .3l-2 .1l-2 0l-2-.3l-2 .2l-2 .2l-2-.4l-2 .2l-2 0l-2-.1l-2 .1l-2 .1l-2-.1l-2-.1l-2 .2l-2-.2l-2 .1l-2 .2l-2-.1l-2 .2l-2-.1l-2-.1l-2 0l-2-.1l-2-.1l-2 .1l-2-.3l-2 0l-2 .2l-2 0l-2 .2l-2 0l-2-.2l-2 .3l-2-.1l-2 0l-2-.2l-2 0l-2 .2l-2-.2l-2-.2l-2 .2l-2-.1l-2 .2l-2-.1l-2 0l-2 0l-2 0l-2 .2l-2 .1l-2-.2l-2 .3l-2-.1l-2-.2l-2 .1l-2 0l-2 .1l-2-.1l-2 .2l-2 0l-2 0l-2-.3l-2 0l-2 .1l-2 0l-2 .1l-2 .1l-2-.2l-2 .1l-2-.1l-2 .3l-2-.3l-2 .2l-2-.3l-2 0l-2 .3l-2 0l-2 .1l-2-.3l-2 .1l-2 0l-2 .1l-2-.4l-2 0l-2 .1l-2-.1l-2 .1l-2 .2l-2-.2l-2 .1l-2-.1l-2-.1l-2 .2l-2-.5l-2 .4l-2-.3l-2 .1l-2 .2l-2 .2l-2-.3l-2 .2l-2 .2l-2-.1l-2 .1l-2-.2l-2-.1l-2 .1l-2-.2l-2 .1l-2 .2l-2 .1l-2-.2l-2-.2l-2 .4l-2-.3l-2-.1l-2 .3l-2 .1l-2-.2l-2 .1l-2-.1l-2-.3l-2 .1l-2 .9l-2 1.9l-2-.4l-2 .3l-2-.2l-2 .1l-2 .4l-2-.1l-2 .1l-2-.3l-2 .5l-2-.2l-2 .3l-2-.4l-2 .5l-2-.4l-2 0l-2 .6l-2-.1l-2-.7l-2 .9l-2-1l-2 .2l-2 .8l-2-.2l-2-.3l-2-.1l-2-.1l-2 .2l-2 0l-2 0l-2-.4l-2 0l-2 .9l-2 .1l-2 .2l-2 .4l-2-.4l-2 .9l-2 .6l-2 .1l-2-.4l-2-.6l-2-.7l-2-.2l-2 .1l-2 .1l-2-.3l-2 0l-2-.1l-2-.5l-2-.1l-2-.3l-2-.1l-2-.2l-2 .5l-2-.1l-2-.2l-2 0l-2 .8l-2-.1l-2-.8l-2 .1l-2 .8l-2-.5l-2 .2l-2-.6l-2 .7l-2-.3l-2 .2l-2-.6l-2-.2l-2 .3l-2 .2l-2-.4l-2 .4l-2-.1l-2-.3l-2 .1l-2 .6l-2-.2l-2 .1l-2-.5l-2 .7l-2-.7l-2 .5l-2-.4l-2 .1l-2 .5l-2-.5l-2 .1l-2 .4l-2 .1l-2-.3l-2 0l-2 .6l-2-.1l-2-.6l-2 .5l-2 .4l-2-.5l-2 .8l-2-.9l-2 .2l-2 .7l-2-.4l-2 0l-2-.7l-2 .5l-2-.7l-2 .3l-2-.5l-2 .8l-2-.2l-2-.8l-2 .3l-2-.2l-2 0l-2 0l-2-.2l-2-.1l-2 .1l-2 .4l-2-.4l-2 .4l-2 0l-2 .3l-2-.8l-2 0l-2 .4l-2-.1l-2 .3l-2-.7l-2 .6l-2-.5l-2 .2l-2 .5l-2-.6l-2 .7l-2 .2l-2 .1l-2-.6l-2 0l-2 0l-2 0l-2 .4l-2-.4l-2 .1l-2 .2l-2 .5l-2 .2l-2 .8l-2-.6l-2 .2l-2-.2l-2 0l-2-.2l-2 .1l-2-.6l-2-.5l-2 .2l-2-.2l-2-.1l-2-.4l-2 .1l-2 .2l-2-.1l-2 0l-2-.1l-2-.3l-2 .5l-2-.6l-2 .6l-2-.3l-2 .6l-2-.2l-2-.1l-2-.5l-2 .3l-2 .2l-2-.6l-2 .2l-2-.3l-2 .6l-2 0l-2 .1l-2 .5l-2-.4l-2-.2l-2 .6l-2-.3l-2-.5l-2 .2l-2 .5l-2-.7l-2 .4l-2 .6l-2-.7l-2-.2l-2 0l-2 .1l-2-.1l-2 0l-2 .2l-2-.5l-2-.1l-2 .6l-2 0l-2-.3l-2 .4l-2-.6l-2 .5l-2-.1l-2 0l-2-.4l-2 0l-2-.2l-2-.1l-2 .3l-2-.6l-2 .5l-2 .1l-2-.1l-2-.5l-2-.1l-2 .6l-2-.7l-2 0l-2 .1l-2 .3l-2-.1l-2 .4l-2-.1l-2 .3l-2-.1l-2-.5l-2 .2l-2 .4l-2-.2l-2 .4l-2-.3l-2-.1l-2 .5l-2-.1l-2 .4l-2-.3l-2 0l-2 0l-2 .8l-2-.6l-2 .2l-2-.4l-2-.5l-2 .2l-2 .1l-2-.4l-2-.4l-2 0l-2 .3l-2 0l-2 0l-2 .1l-2 .1l-2-.4l-2 .5l-2-.4l-2 .2l-2-.4l-2 .5l-2-.5l-2 .7l-2-.4l-2 .5l-2-.3l-2-.1l-2 .3l-2 .1l-2-.1l-2-.3l-2-.1l-2-.3l-2 .2l-2-.3l-2-.1l-2 .2l-2-.4l-2 .2l-2-.2l-2 .2l-2 .1l-2-.1l-2 .2l-2 0l-2 0l-2-.2l-2 .2l-2 0l-2 .5l-2-.1l-2-.2l-2-.1l-2 .2l-2-.2l-2 .1l-2 0l-2-.2l-2-.2l-2 .1l-2 .2l-2-.4l-2 .2l-2 0l-2-.5l-2 0l-2 .1l-2 0l-2 .1l-2-.3l-2 .5l-2 0l-2 .1l-2-.3l-2 .1l-2 .1l-2-.3l-2-.1l-2 .5l-2-.2l-2 .3l-2-.2l-2 .1l-2 .2l-2 0l-2 0l-2 .2l-2 .2l-2-.1l-2-.5l-2 .3l-2-.6l-2 .2l-2-.3l-2 .1l-2-.2l-2 .3l-2 0l-2 .1l-2-.3l-2 .3l-2 0l-2-.2l-2 .1l-2 .1l-2-.3l-2 .1l-2-.2l-2-.1l-2 .1l-2-.3l-2-.1l-2 .1l-2 .1l-2-.2l-2-.1l-2 .2l-2-.1l-2-.4l-2 .3l-2-.3l-2-.2l-2 0l-2 .1l-2-.2l-2-.1l-2-.2l-2-.3z" fill="#6d5fd5"/><path d="M753 959.4l4 0l4 0l4 0l4 0l4 0l4 0l4 0l4 0l4 0l4 0l4 0l4 0l4 0l4 0l4 0l4 0l4 0l4 0l4 0l4 0l4 0l4 0l4 0l4 0l4 0l4 0l4 0l4 0l4 0l4 0l4 0l4 0l4 0l4 0l4 0l4 0l4 0l4 0l4 0l4 0l4 0l4 0l4 0l4 0l4 0l4 0l4 0l4 0l4 0l4 0l4 0l4 0l4 0l4 0l4 0l4 0l4 0l4 0l4 0l4 0l4 0l4 0l4 0l4 0l4 0l4 0l4 0l4 0l4 0l4 0l4 0l4 0l4 0l4 0l4 0l4 0l4 0l4 0l4 0l4 0l4 0l4 0l4 0l4 0l4 0l4 0l4 0l4 0l4 0l4 0l4 0l4 0l4 0l4 0l4 0l4 0l4 0l4 0l4 0l4 0l4 0l4 0l4 0l4 0l4 0l4 0l4 0l4 0l4 0l4 0l4 0l4 0l4 0l4 0l4 0l4 0l4 0l4 0l4 0l4 0l4 0l4 0l4 0l4 0l4 0l4 0l4 0l4 0l4 0l4 0l4 0l4 0l4 0l4 0l4 0l4 0l4 0l4 0l4 0l4 0l4 0l4 0l4 0l4 0l4 0l4 0l4 0l4 0l4 0l4 0l4 0l4 0l4 0l4 0l4 0l4 0l4 0l4 0l4 0l4 0l4 0l4 0l4 0l4 0l4 0l4 0l4 0l4 0l4 0l4 0l4 0l4 0l4 0l4 0l4 0l4 0l4 0l4 0l4 0l4 0l4 0l4 0l4 0l4 0l4 0l4 0l4 0l4 0l4 0l4 0l4 0l4 0l4 0l4 0l4 0l4 0l4 0l4 0l4 0l4 0l4 0l4 0l4 0l4 0l4 0l4 0l4 0l4 0l4 0l4 0l4 0l4 0l4 0l4 0l4 0l4 0l4 0l4 0l4 0l4 0l4 0l4 0l4 0l4 0l4 0l4 0l4 0l4 0l4 0l4 0l4 0l4 0l4 0l4 0l4 0l4 0l4 0l4 0l4 0l4 0l4 0l4 0l4 0l4 0l4 0l4 0l4 0l4 0l4 0l4 0l4 0l4 0l4 0l4 0l4 0l4 0l4 0l4 0l4 0l4 0l4 0l4 0l4 0l4 0l4 0l4 0l4 0l4 0l4 0l4 0l4 0l4 0l4 0l4 0l4 0l4 0l4 0l4 0l4 0l4 0l4 0" fill="none" stroke="#6d5fd5" stroke-width="3" stroke-linejoin="round"/><path d="M753.8 959V930" stroke="#6d5fd5" stroke-width="2.8" fill="none"/><path d="M753.8 931.5V928.6" stroke="#0000ff" stroke-width="2.8" fill="none"/><path d="M753.4 960V981.7" stroke="#f6a625" stroke-width="2.4" fill="none"/></g>
</svg>
</body></html>
